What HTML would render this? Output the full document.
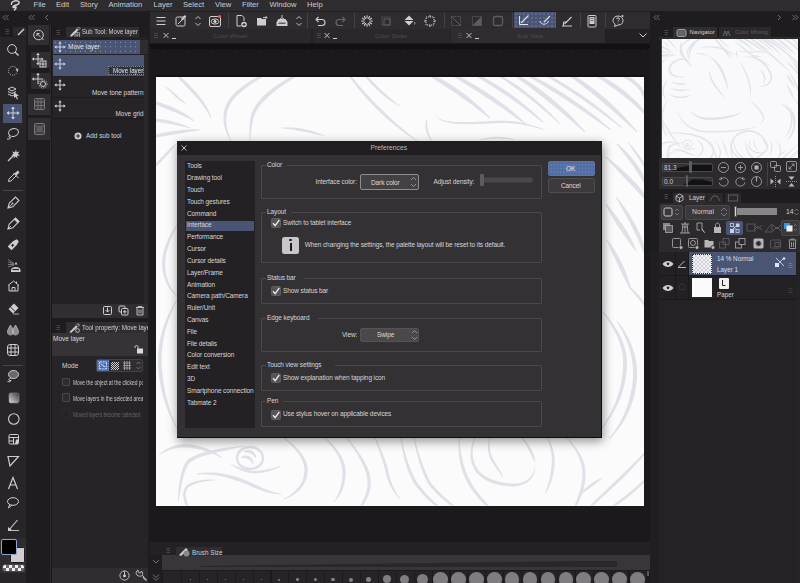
<!DOCTYPE html>
<html><head><meta charset="utf-8">
<style>
*{margin:0;padding:0;box-sizing:border-box}
html,body{width:800px;height:583px;overflow:hidden;background:#1c1a1d;font-family:"Liberation Sans",sans-serif;color:#d8d6d9}
.a{position:absolute;display:block}
.t{position:absolute;white-space:nowrap;line-height:1}
</style></head><body>
<div class="a" style="left:0px;top:0px;width:800px;height:11px;background:#2e2c2f;"></div>
<svg class="a" style="left:9px;top:0px;" width="13" height="11" viewBox="0 0 13 11" fill="none" stroke="#cfcdd0" stroke-width="1"><path d="M2.5 4.2 C2 1.5 6 0.5 8.5 1 C11 1.5 10.5 3.5 8.5 4.5 C7 5.2 4.5 5.5 4 6.8 C3.7 7.8 5.5 7.6 6.5 7 C7.5 6.4 7.2 8.5 5.5 10" stroke="#d0ced1" stroke-width="1.5" stroke-linecap="round" stroke-linejoin="round"/></svg>
<div class="t" style="left:33.5px;top:0.52px;font-size:7.6px;color:#cfcdd0;">File</div>
<div class="t" style="left:56px;top:0.52px;font-size:7.6px;color:#cfcdd0;">Edit</div>
<div class="t" style="left:80px;top:0.52px;font-size:7.6px;color:#cfcdd0;">Story</div>
<div class="t" style="left:108.5px;top:0.52px;font-size:7.6px;color:#cfcdd0;">Animation</div>
<div class="t" style="left:153.5px;top:0.52px;font-size:7.6px;color:#cfcdd0;">Layer</div>
<div class="t" style="left:183px;top:0.52px;font-size:7.6px;color:#cfcdd0;">Select</div>
<div class="t" style="left:215px;top:0.52px;font-size:7.6px;color:#cfcdd0;">View</div>
<div class="t" style="left:242px;top:0.52px;font-size:7.6px;color:#cfcdd0;">Filter</div>
<div class="t" style="left:269.5px;top:0.52px;font-size:7.6px;color:#cfcdd0;">Window</div>
<div class="t" style="left:307px;top:0.52px;font-size:7.6px;color:#cfcdd0;">Help</div>
<div class="a" style="left:0px;top:11px;width:150px;height:572px;background:#1e1c1f;"></div>
<div class="a" style="left:650px;top:11px;width:150px;height:572px;background:#1e1c1f;"></div>
<svg class="a" style="left:1px;top:14px;" width="10" height="7" viewBox="0 0 10 7" fill="none" stroke="#cfcdd0" stroke-width="1"><path d="M4.5 1 L2 3.5 L4.5 6 M7.5 1 L5 3.5 L7.5 6" stroke="#8a888b" stroke-width="0.8"/></svg>
<svg class="a" style="left:27px;top:14px;" width="10" height="7" viewBox="0 0 10 7" fill="none" stroke="#cfcdd0" stroke-width="1"><path d="M4.5 1 L2 3.5 L4.5 6 M7.5 1 L5 3.5 L7.5 6" stroke="#8a888b" stroke-width="0.8"/></svg>
<svg class="a" style="left:44px;top:14px;" width="6" height="7" viewBox="0 0 6 7" fill="none" stroke="#cfcdd0" stroke-width="1"><path d="M4 1 L1.5 3.5 L4 6" stroke="#8a888b" stroke-width="0.8"/></svg>
<div class="a" style="left:0px;top:22px;width:26px;height:561px;background:#272528;"></div>
<div class="a" style="left:0px;top:22px;width:26px;height:14px;background:#1e1c1f;"></div>
<div class="a" style="left:13px;top:27px;width:13px;height:9px;background:#2c2a2d;"></div>
<svg class="a" style="left:4px;top:27px;" width="6" height="8" viewBox="0 0 6 8" fill="none" stroke="#cfcdd0" stroke-width="1"><path d="M1.5 2.5h3.5M1.5 4.5h3.5M1.5 6.5h3.5" stroke="#5c5a5d" stroke-width="0.7"/></svg>
<svg class="a" style="left:16px;top:27px;" width="10" height="9" viewBox="0 0 10 9" fill="none" stroke="#cfcdd0" stroke-width="1"><path d="M2 8 L8 2" stroke="#d0ced1" stroke-width="1.4"/></svg>
<div class="a" style="left:1px;top:36px;width:25px;height:1px;background:#1e1c1f;"></div>
<div class="a" style="left:3px;top:104px;width:19px;height:19px;background:#4a5573;"></div>
<div class="a" style="left:3px;top:190px;width:20px;height:1px;background:#48464a;"></div>
<div class="a" style="left:3px;top:365px;width:20px;height:1px;background:#48464a;"></div>
<svg class="a" style="left:5.8px;top:43px;" width="15" height="15" viewBox="0 0 15 15" fill="none" stroke="#cfcdd0" stroke-width="1"><circle cx="6" cy="6" r="4.4"/><path d="M9.2 9.2 L12.5 12.5" stroke-width="1.4"/></svg>
<svg class="a" style="left:5.8px;top:64px;" width="15" height="15" viewBox="0 0 15 15" fill="none" stroke="#cfcdd0" stroke-width="1"><circle cx="6.8" cy="6.8" r="4.4" stroke-dasharray="1 1.2"/><path d="M9.5 5.5 L11.8 7.5 L12.5 4.5 Z" fill="#cfcdd0" stroke="none"/></svg>
<svg class="a" style="left:5.8px;top:85px;" width="15" height="15" viewBox="0 0 15 15" fill="none" stroke="#cfcdd0" stroke-width="1"><path d="M2 4 L6 2 L10 4 L6 6 Z M2 6.5 L6 8.5 L10 6.5 M2 9 L6 11 L8 10"/><path d="M8 7 L13 11 L10.5 11.3 L12 14 L11 14.5 L9.5 11.8 L8 13 Z" fill="#cfcdd0" stroke="none"/></svg>
<svg class="a" style="left:5.8px;top:106px;" width="15" height="15" viewBox="0 0 15 15" fill="none" stroke="#cfcdd0" stroke-width="1"><path d="M7 1.5 V12.5 M1.5 7 H12.5" stroke="#c8d0e8"/><path d="M7 0.5 L5 3 H9 Z M7 13.5 L5 11 H9 Z M0.5 7 L3 5 V9 Z M13.5 7 L11 5 V9 Z" fill="#c8d0e8" stroke="none"/></svg>
<svg class="a" style="left:5.8px;top:127px;" width="15" height="15" viewBox="0 0 15 15" fill="none" stroke="#cfcdd0" stroke-width="1"><ellipse cx="7.5" cy="5.5" rx="5" ry="3.8" transform="rotate(-15 7.5 5.5)"/><path d="M4 8.5 C2 9.5 3 11 4.5 10.5 C5 11.5 3 12.5 1 12"/></svg>
<svg class="a" style="left:5.8px;top:148px;" width="15" height="15" viewBox="0 0 15 15" fill="none" stroke="#cfcdd0" stroke-width="1"><path d="M2 13 L8 7" stroke-width="1.2"/><path d="M10 1.5 L10.7 4.3 L13.5 3.5 L11.7 5.8 L14 7.5 L11 7.7 L11.5 10.5 L9.6 8.5 L7.5 10.5 L8.2 7.7 L5.2 7.5 L7.6 5.8 L6.2 3.5 L9.1 4.3 Z" fill="#cfcdd0" stroke="none"/></svg>
<svg class="a" style="left:5.8px;top:169px;" width="15" height="15" viewBox="0 0 15 15" fill="none" stroke="#cfcdd0" stroke-width="1"><path d="M2.5 12.5 L3 10 L8.5 4.5 L10.5 6.5 L5 12 Z" stroke-width="1"/><path d="M7.5 4 L12.5 9 M9 4.5 L11 2.5 C12 1.5 13.5 3 12.5 4 L10.5 6 Z" fill="#cfcdd0" stroke="#cfcdd0" stroke-width="1"/></svg>
<svg class="a" style="left:5.8px;top:195px;" width="15" height="15" viewBox="0 0 15 15" fill="none" stroke="#cfcdd0" stroke-width="1"><path d="M2 13 L3.2 8.2 L9.5 2 L13 5.5 L6.8 11.8 Z" stroke-width="1.1"/><path d="M2 13 L6 9" stroke-width="0.9"/><circle cx="6.5" cy="8.5" r="0.9" fill="#cfcdd0" stroke="none"/></svg>
<svg class="a" style="left:5.8px;top:216px;" width="15" height="15" viewBox="0 0 15 15" fill="none" stroke="#cfcdd0" stroke-width="1"><path d="M2 13 L3.2 8.2 L9.5 2 L13 5.5 L6.8 11.8 Z" stroke-width="1.1"/><path d="M8 3.5 L9.5 2 L13 5.5 L11.5 7 Z" fill="#cfcdd0" stroke="none"/><path d="M2 13 L4.8 10.2" stroke-width="0.9"/></svg>
<svg class="a" style="left:5.8px;top:237px;" width="15" height="15" viewBox="0 0 15 15" fill="none" stroke="#cfcdd0" stroke-width="1"><g transform="rotate(45 7.5 7.5)"><path d="M4.8 5.5 L6 1.5 H9 L10.2 5.5 V13 H4.8 Z" fill="#cfcdd0" stroke="none"/><rect x="6" y="7" width="3" height="3.5" fill="#29272a"/></g></svg>
<svg class="a" style="left:5.8px;top:258px;" width="15" height="15" viewBox="0 0 15 15" fill="none" stroke="#cfcdd0" stroke-width="1"><path d="M2 1.5 L8 5.5 M2 4 L8 6 M2 6.5 L8 6.5 M2 9 L8 7" stroke="#8a888b" stroke-width="0.8"/><path d="M8.5 6.5 L10 4 L11.5 6.5 Z" fill="#cfcdd0" stroke="none"/><path d="M5 14 V12 C5 8 14.5 8 14.5 12 V14 Z" fill="#cfcdd0" stroke="none"/><path d="M6.5 11.5 H13" stroke="#29272a" stroke-width="1.2"/></svg>
<svg class="a" style="left:5.8px;top:279px;" width="15" height="15" viewBox="0 0 15 15" fill="none" stroke="#cfcdd0" stroke-width="1"><path d="M2 6.5 L7.5 2 L13 6.5 M3 6 V12 H12 V6 M6 12 V8.5 H9 V12 M10.5 2.5 V4.5"/></svg>
<svg class="a" style="left:5.8px;top:301px;" width="15" height="15" viewBox="0 0 15 15" fill="none" stroke="#cfcdd0" stroke-width="1"><path d="M2.5 8 L8 2.5 L12.5 7 L7 12.5 Z" fill="#cfcdd0" stroke="none"/><path d="M4.5 6 L9 10.5" stroke="#29272a" stroke-width="1"/><path d="M7 13 H13" stroke-width="0.8"/></svg>
<svg class="a" style="left:5.8px;top:322px;" width="15" height="15" viewBox="0 0 15 15" fill="none" stroke="#cfcdd0" stroke-width="1"><path d="M4.5 3 C2 7 1.5 8.5 1.5 10 C1.5 12 3 13 4.5 13 C6 13 7.5 12 7.5 10 C7.5 8.5 7 7 4.5 3 Z M9.5 3 C7 7 6.5 8.5 6.5 10 C6.5 12 8 13 9.5 13 C11 13 12.5 12 12.5 10 C12.5 8.5 12 7 9.5 3 Z" fill="#8e8c8f" stroke="#cfcdd0" stroke-width="0.6"/></svg>
<svg class="a" style="left:5.8px;top:343px;" width="15" height="15" viewBox="0 0 15 15" fill="none" stroke="#cfcdd0" stroke-width="1"><rect x="1.5" y="1.5" width="11" height="11" rx="2.5"/><path d="M1.5 5 H12.5 M1.5 9 H12.5 M5 1.5 V12.5 M9 1.5 V12.5"/></svg>
<svg class="a" style="left:5.8px;top:369px;" width="15" height="15" viewBox="0 0 15 15" fill="none" stroke="#cfcdd0" stroke-width="1"><ellipse cx="7.5" cy="5.5" rx="5" ry="4" fill="#6a686b"/><path d="M5 9 C2 10 2 12 5 11.5 C5 12.5 3 13 1.5 12.5"/></svg>
<svg class="a" style="left:5.8px;top:391px;" width="15" height="15" viewBox="0 0 15 15" fill="none" stroke="#cfcdd0" stroke-width="1"><defs><linearGradient id="gq" x1="1" y1="0" x2="0" y2="1"><stop offset="0" stop-color="#3a383b"/><stop offset="1" stop-color="#dcdadd"/></linearGradient></defs><rect x="3" y="2" width="10" height="10" rx="1.8" fill="url(#gq)" stroke="#8e8c8f" stroke-width="0.6"/></svg>
<svg class="a" style="left:5.8px;top:412px;" width="15" height="15" viewBox="0 0 15 15" fill="none" stroke="#cfcdd0" stroke-width="1"><circle cx="7.8" cy="7" r="5.3" stroke-width="1.1"/></svg>
<svg class="a" style="left:5.8px;top:433px;" width="15" height="15" viewBox="0 0 15 15" fill="none" stroke="#cfcdd0" stroke-width="1"><rect x="3" y="1.5" width="9.5" height="9.5" rx="1.2"/><path d="M3 4.5 H12.5 M3 8 H7.5 M7.5 4.5 V11"/><path d="M9 11 L10 6.5 H12 V11 Z" fill="#cfcdd0" stroke="none"/></svg>
<svg class="a" style="left:5.8px;top:454px;" width="15" height="15" viewBox="0 0 15 15" fill="none" stroke="#cfcdd0" stroke-width="1"><path d="M2 2.5 H12.5 L4 12 Z" stroke-width="1.2"/></svg>
<svg class="a" style="left:5.8px;top:476px;" width="15" height="15" viewBox="0 0 15 15" fill="none" stroke="#cfcdd0" stroke-width="1"><path d="M2.5 13 L7 1.5 L11.5 13 M4 9 H10" stroke-width="1.2"/></svg>
<svg class="a" style="left:5.8px;top:496px;" width="15" height="15" viewBox="0 0 15 15" fill="none" stroke="#cfcdd0" stroke-width="1"><ellipse cx="7" cy="5.5" rx="5.5" ry="3.8"/><path d="M3.5 8.5 L2.5 12 L6 9"/></svg>
<svg class="a" style="left:5.8px;top:518px;" width="15" height="15" viewBox="0 0 15 15" fill="none" stroke="#cfcdd0" stroke-width="1"><path d="M3 12 L11.5 2" stroke-width="1.1"/><path d="M2 12.5 H13" stroke-width="0.9"/><path d="M2 9 L6 12 L2 13 Z" fill="#cfcdd0" stroke="none"/></svg>
<div class="a" style="left:0px;top:538px;width:26px;height:35px;background:#2e2c2f;"></div>
<div class="a" style="left:9.5px;top:546.5px;width:15px;height:16px;background:#cfcdd0;border:1px solid #1c1a1d;border-radius:1.5px;box-shadow:0 0 0 0.6px #3a383b"></div>
<div class="a" style="left:1px;top:539px;width:15.5px;height:16px;background:#000;border:1px solid #8fa3d0;border-radius:2px"></div>
<div class="a" style="left:1.5px;top:564px;width:23px;height:8px;border:1px solid #444245;border-radius:3px;background-color:#f2f2f2;background-image:linear-gradient(45deg,#6a686b 25%,transparent 25%,transparent 75%,#6a686b 75%),linear-gradient(45deg,#6a686b 25%,transparent 25%,transparent 75%,#6a686b 75%);background-size:6px 6px;background-position:0 0,3px 3px"></div>
<div class="a" style="left:26px;top:22px;width:2px;height:561px;background:#1e1c1f;"></div>
<div class="a" style="left:28px;top:25px;width:21px;height:20px;background:#302e31;"></div>
<svg class="a" style="left:30px;top:27px;" width="17" height="16" viewBox="0 0 17 16" fill="none" stroke="#cfcdd0" stroke-width="1"><circle cx="8.5" cy="8" r="4.8"/><path d="M10.5 10 L7 6.5 M7 6.5 V9 M7 6.5 H9.5 M11.5 11 L13.5 13"/></svg>
<div class="a" style="left:31px;top:52px;width:19px;height:16px;background:#302e31;"></div>
<div class="a" style="left:31px;top:72.5px;width:19px;height:16px;background:#302e31;"></div>
<div class="a" style="left:28.3px;top:94px;width:21.5px;height:20.5px;background:#302e31;"></div>
<div class="a" style="left:28.3px;top:118px;width:21.5px;height:22px;background:#302e31;"></div>
<svg class="a" style="left:31px;top:52px;" width="18" height="17" viewBox="0 0 18 17" fill="none" stroke="#cfcdd0" stroke-width="1"><path d="M7 2 V12 M2 7 H12" stroke="#cfcdd0"/><path d="M7 0.8 L5.2 3 H8.8 Z M0.8 7 L3 5.2 V8.8 Z M12.5 7 L10.5 5.5 V8.5 Z M7 13.2 L5.2 11 H8.8 Z" fill="#cfcdd0" stroke="none"/><rect x="9" y="9" width="6" height="6"/><path d="M9 12 H15 M12 9 V15"/></svg>
<svg class="a" style="left:31px;top:72px;" width="18" height="17" viewBox="0 0 18 17" fill="none" stroke="#cfcdd0" stroke-width="1"><path d="M7 2 V12 M2 7 H12"/><path d="M7 0.8 L5.2 3 H8.8 Z M0.8 7 L3 5.2 V8.8 Z" fill="#cfcdd0" stroke="none"/><circle cx="12" cy="12" r="2.5"/><circle cx="12" cy="12" r="4" stroke-dasharray="1.2 1.2"/></svg>
<svg class="a" style="left:31px;top:95px;" width="18" height="18" viewBox="0 0 18 18" fill="none" stroke="#cfcdd0" stroke-width="1"><rect x="3.5" y="3.5" width="10" height="11" rx="1" fill="#3e3c3f" stroke="#7a787b"/><path d="M3.5 7 H13.5 M3.5 10.5 H13.5 M7 3.5 V14.5 M10 3.5 V14.5" stroke="#7a787b" stroke-width="0.8"/></svg>
<svg class="a" style="left:31px;top:120px;" width="18" height="19" viewBox="0 0 18 19" fill="none" stroke="#cfcdd0" stroke-width="1"><rect x="3.5" y="3.5" width="10" height="11" rx="1" fill="#3e3c3f" stroke="#7a787b"/><rect x="5.5" y="6" width="6" height="6" fill="#5e5c5f" stroke="none"/><path d="M3.5 6 H5.5 M11.5 6 H13.5 M3.5 12 H5.5 M11.5 12 H13.5" stroke="#7a787b" stroke-width="0.8"/></svg>
<div class="a" style="left:50px;top:22px;width:1px;height:561px;background:#2c2a2d;"></div>
<div class="a" style="left:51px;top:22px;width:1px;height:561px;background:#1a181b;"></div>
<div class="a" style="left:52px;top:22px;width:96px;height:15px;background:#1e1c1f;"></div>
<svg class="a" style="left:55px;top:28px;" width="7" height="8" viewBox="0 0 7 8" fill="none" stroke="#cfcdd0" stroke-width="1"><path d="M1.5 2.5h3.5M1.5 4.5h3.5M1.5 6.5h3.5" stroke="#5c5a5d" stroke-width="0.7"/></svg>
<div class="a" style="left:66px;top:27px;width:73px;height:10px;background:#2f2d30;"></div>
<svg class="a" style="left:68px;top:26px;" width="13" height="12" viewBox="0 0 13 12" fill="none" stroke="#cfcdd0" stroke-width="1"><path d="M2 11 L3 8.5 L9 2.5 L10.5 4 L4.5 10 Z" fill="#cfcdd0" stroke="none"/><path d="M9 2.5 L10.5 1 L12 2.5 L10.5 4" stroke-width="0.7"/><path d="M7 6.5 H11.5 V11.5 H7 Z M7 9 H11.5 M9.25 6.5 V11.5" stroke-width="0.6"/></svg>
<div class="t" style="left:81.5px;top:29.43px;font-size:6.6px;color:#d2d0d3;transform:scaleX(0.91);transform-origin:0 0">Sub Tool: Move layer</div>
<div class="a" style="left:52px;top:37px;width:96px;height:267px;background:#232124;"></div>
<div class="a" style="left:53px;top:40px;width:87px;height:14px;background:#4a5573;background-image:radial-gradient(circle,#8fa0c8 0.45px,transparent 0.75px);background-size:5px 4.5px"></div>
<div class="a" style="left:140px;top:40px;width:8px;height:14px;background:#2e2c2f;"></div>
<div class="a" style="left:144px;top:55px;width:4px;height:249px;background:#29272a;"></div>
<div class="t" style="left:68px;top:44.12px;font-size:6.5px;color:#e4e2e5;">Move layer</div>
<div class="a" style="left:53px;top:55px;width:91px;height:21px;background:#4a5573;"></div>
<div class="a" style="left:108px;top:66px;width:36px;height:9px;border:1px dotted #8a8478;background:#2e3340"></div>
<div class="t" style="left:112.5px;top:67.72px;font-size:6.5px;color:#e4e2e5;transform:scaleX(0.95);transform-origin:0 0">Move layer</div>
<div class="a" style="left:53px;top:77px;width:91px;height:20px;background:#262427;"></div>
<div class="a" style="left:53px;top:97px;width:91px;height:1px;background:#1c1a1d;"></div>
<div class="t" style="left:92px;top:90.41px;font-size:6.4px;color:#d8d6d9;">Move tone pattern</div>
<div class="a" style="left:53px;top:98px;width:91px;height:20px;background:#262427;"></div>
<div class="a" style="left:53px;top:118px;width:91px;height:1px;background:#1c1a1d;"></div>
<div class="t" style="left:115.5px;top:111.21px;font-size:6.4px;color:#d8d6d9;">Move grid</div>
<svg class="a" style="left:54px;top:41px;stroke:#c8d0e8" width="12" height="12" viewBox="0 0 12 12" fill="none" stroke="#cfcdd0" stroke-width="1"><path d="M6 1.5 V10.5 M1.5 6 H10.5"/><path d="M6 0.3 L4.3 2.5 H7.7 Z M6 11.7 L4.3 9.5 H7.7 Z M0.3 6 L2.5 4.3 V7.7 Z M11.7 6 L9.5 4.3 V7.7 Z" fill="#c8d0e8" stroke="none"/></svg>
<svg class="a" style="left:54px;top:58px;stroke:#c8d0e8" width="12" height="12" viewBox="0 0 12 12" fill="none" stroke="#cfcdd0" stroke-width="1"><path d="M6 1.5 V10.5 M1.5 6 H10.5"/><path d="M6 0.3 L4.3 2.5 H7.7 Z M6 11.7 L4.3 9.5 H7.7 Z M0.3 6 L2.5 4.3 V7.7 Z M11.7 6 L9.5 4.3 V7.7 Z" fill="#c8d0e8" stroke="none"/></svg>
<svg class="a" style="left:54px;top:79px;" width="12" height="12" viewBox="0 0 12 12" fill="none" stroke="#cfcdd0" stroke-width="1"><path d="M6 1.5 V10.5 M1.5 6 H10.5"/><path d="M6 0.3 L4.3 2.5 H7.7 Z M6 11.7 L4.3 9.5 H7.7 Z M0.3 6 L2.5 4.3 V7.7 Z M11.7 6 L9.5 4.3 V7.7 Z" fill="#cfcdd0" stroke="none"/></svg>
<svg class="a" style="left:54px;top:100px;" width="12" height="12" viewBox="0 0 12 12" fill="none" stroke="#cfcdd0" stroke-width="1"><path d="M6 1.5 V10.5 M1.5 6 H10.5"/><path d="M6 0.3 L4.3 2.5 H7.7 Z M6 11.7 L4.3 9.5 H7.7 Z M0.3 6 L2.5 4.3 V7.7 Z M11.7 6 L9.5 4.3 V7.7 Z" fill="#cfcdd0" stroke="none"/></svg>
<svg class="a" style="left:74px;top:132px;" width="8" height="8" viewBox="0 0 8 8" fill="none" stroke="#cfcdd0" stroke-width="1"><circle cx="4" cy="4" r="3.5" fill="#cfcdd0" stroke="none"/><path d="M4 2 V6 M2 4 H6" stroke="#262427" stroke-width="1"/></svg>
<div class="t" style="left:86px;top:132.71px;font-size:6.4px;color:#d8d6d9;">Add sub tool</div>
<div class="a" style="left:52px;top:304px;width:96px;height:14px;background:#302e31;"></div>
<svg class="a" style="left:102px;top:305px;" width="12" height="11" viewBox="0 0 12 11" fill="none" stroke="#cfcdd0" stroke-width="1"><rect x="1.5" y="1.5" width="8" height="8" rx="1"/><path d="M5.5 2.5 V7 M3.5 5 L5.5 7 L7.5 5"/></svg>
<svg class="a" style="left:118px;top:305px;" width="12" height="11" viewBox="0 0 12 11" fill="none" stroke="#cfcdd0" stroke-width="1"><rect x="1" y="1" width="6" height="6" rx="1"/><rect x="3.5" y="3.5" width="6.5" height="6.5" rx="1" fill="#302e31"/><path d="M6.75 5 V8.5 M5 6.75 H8.5"/></svg>
<svg class="a" style="left:134px;top:305px;stroke:#bdbbbe" width="12" height="11" viewBox="0 0 12 11" fill="none" stroke="#cfcdd0" stroke-width="1"><path d="M2 2.5 H10 M4 2.5 V1.5 H8 V2.5 M3 3 V10 H9 V3 M5 4.5 V8.5 M7 4.5 V8.5"/></svg>
<div class="a" style="left:148px;top:22px;width:2px;height:561px;background:#1e1c1f;"></div>
<div class="a" style="left:52px;top:318px;width:96px;height:4px;background:#1e1c1f;"></div>
<div class="a" style="left:52px;top:321px;width:96px;height:12px;background:#1e1c1f;"></div>
<svg class="a" style="left:55px;top:323px;" width="7" height="8" viewBox="0 0 7 8" fill="none" stroke="#cfcdd0" stroke-width="1"><path d="M1.5 2.5h3.5M1.5 4.5h3.5M1.5 6.5h3.5" stroke="#5c5a5d" stroke-width="0.7"/></svg>
<div class="a" style="left:66px;top:322px;width:82px;height:11px;background:#2f2d30;"></div>
<svg class="a" style="left:68px;top:322px;" width="13" height="11" viewBox="0 0 13 11" fill="none" stroke="#cfcdd0" stroke-width="1"><path d="M1.5 10 L8 3.5 L9.5 5 L3 11 Z" fill="#cfcdd0" stroke="none"/><path d="M8 3.5 L10 1.5 L11.5 3 L9.5 5" stroke-width="0.8"/><circle cx="9.5" cy="8.5" r="1.9" stroke-width="0.9"/></svg>
<div class="a" style="left:66px;top:322px;width:82px;height:11px;overflow:hidden"><div class="t" style="left:16px;top:3.3px;font-size:6.6px;color:#d2d0d3;transform:scaleX(0.95);transform-origin:0 0">Tool property: Move layer</div></div>
<div class="a" style="left:52px;top:333px;width:96px;height:235px;background:#262427;"></div>
<div class="a" style="left:52px;top:333px;width:96px;height:23px;background:#353336;"></div>
<div class="t" style="left:53px;top:336.12px;font-size:6.5px;color:#dcdadd;">Move layer</div>
<svg class="a" style="left:134px;top:344px;" width="10" height="10" viewBox="0 0 10 10" fill="none" stroke="#cfcdd0" stroke-width="1"><rect x="3" y="4.5" width="6" height="5" fill="#dcdadd" stroke="none"/><path d="M4 4.5 V3 C4 1 1 1 1 3 V4"/></svg>
<div class="t" style="left:62px;top:362.62px;font-size:6.5px;color:#d8d6d9;">Mode</div>
<div class="a" style="left:96px;top:359px;width:47px;height:13px;background:#302e31;border:1px solid #444245;border-radius:2px"></div>
<div class="a" style="left:97px;top:360px;width:12px;height:11px;background:#4a6ab0;background-image:radial-gradient(circle,#a9c0f0 0.5px,transparent 0.8px);background-size:2.5px 2.5px"></div>
<svg class="a" style="left:98px;top:361px;" width="10" height="9" viewBox="0 0 10 9" fill="none" stroke="#cfcdd0" stroke-width="1"><rect x="1.5" y="1" width="7" height="7" stroke="#dde6ff" stroke-dasharray="1 0.6"/><path d="M3 3 L7 6" stroke="#dde6ff"/></svg>
<div class="a" style="left:111px;top:361.5px;width:8px;height:8px;background-image:linear-gradient(45deg,#cfcdd0 25%,transparent 25%,transparent 75%,#cfcdd0 75%),linear-gradient(45deg,#cfcdd0 25%,transparent 25%,transparent 75%,#cfcdd0 75%);background-size:2px 2px;background-position:0 0,1px 1px"></div>
<svg class="a" style="left:122px;top:360px;" width="10" height="11" viewBox="0 0 10 11" fill="none" stroke="#cfcdd0" stroke-width="1"><path d="M1 3 H9 M1 5.5 H9 M1 8 H9 M2.5 1 V10 M5 1 V10 M7.5 1 V10" stroke="#cfcdd0" stroke-width="0.6"/></svg>
<svg class="a" style="left:135px;top:360px;" width="7" height="11" viewBox="0 0 7 11" fill="none" stroke="#cfcdd0" stroke-width="1"><path d="M1.5 4 L3.5 2 L5.5 4 M1.5 7 L3.5 9 L5.5 7" stroke="#8a888b" stroke-width="0.7"/></svg>
<div class="a" style="left:52px;top:356px;width:91px;height:212px;overflow:hidden">
<div class="a" style="left:9.5px;top:21.5px;width:8.5px;height:8.5px;background:#2e2c2f;border:1px solid #4a484b;border-radius:1px"></div>
<div class="t" style="left:20.6px;top:24.01px;font-size:6.4px;color:#cac8cb;transform:scaleX(0.765);transform-origin:0 0">Move the object at the clicked position</div>
<div class="a" style="left:9.5px;top:37.30000000000001px;width:8.5px;height:8.5px;background:#2e2c2f;border:1px solid #4a484b;border-radius:1px"></div>
<div class="t" style="left:20.6px;top:39.81px;font-size:6.4px;color:#cac8cb;transform:scaleX(0.765);transform-origin:0 0">Move layers in the selected area</div>
<div class="a" style="left:9.5px;top:53.19999999999999px;width:8.5px;height:8.5px;background:#252326;border:1px solid #2c2a2d;border-radius:1px"></div>
<div class="t" style="left:20.6px;top:55.71px;font-size:6.4px;color:#68666a;transform:scaleX(0.765);transform-origin:0 0">Moved layers become selected</div>
</div>
<div class="a" style="left:143px;top:356px;width:5px;height:212px;background:#262427;"></div>
<div class="a" style="left:52px;top:568px;width:96px;height:15px;background:#2f2d30;"></div>
<svg class="a" style="left:118px;top:569px;" width="13" height="13" viewBox="0 0 13 13" fill="none" stroke="#cfcdd0" stroke-width="1"><circle cx="6.5" cy="6.5" r="4.6" stroke="#bdbbbe"/><circle cx="6.5" cy="6.8" r="1.5" fill="#cfcdd0" stroke="none"/><path d="M6.5 2 V6" stroke="#bdbbbe"/></svg>
<svg class="a" style="left:134px;top:568px;" width="13" height="14" viewBox="0 0 13 14" fill="none" stroke="#cfcdd0" stroke-width="1"><path d="M9.5 9.5 L12 12" stroke="#bdbbbe" stroke-width="1.6" stroke-linecap="round"/><path d="M4 2 C2 3 1.5 5.5 3 7 C4.5 8.5 7 8.5 8.5 7.5 L10 9 M4 2 L4.5 4.5 L6.5 5 L7.5 3 M7.5 3 C8.5 4 9 6 8.5 7.5" stroke="#bdbbbe" stroke-width="1"/></svg>
<div class="a" style="left:150px;top:11px;width:500px;height:18px;background:#2e2c2f;"></div>
<div class="a" style="left:150px;top:11px;width:500px;height:1px;background:#201e21;"></div>
<div class="a" style="left:150px;top:28.5px;width:500px;height:0.8px;background:#232124;"></div>
<svg class="a" style="left:154.0px;top:13.5px;" width="14" height="14" viewBox="0 0 14 14" fill="none" stroke="#cfcdd0" stroke-width="1"><path d="M2.5 3.5 H11.5 M2.5 7 H11.5 M2.5 10.5 H11.5" stroke-width="1.1"/></svg>
<svg class="a" style="left:174.0px;top:13.5px;" width="14" height="14" viewBox="0 0 14 14" fill="none" stroke="#cfcdd0" stroke-width="1"><rect x="2" y="3" width="9" height="9" rx="1.5"/><path d="M4 10 L8 6" /><path d="M7 5 L10.5 1.5 C11.5 1 12.5 2 12 3 L8.5 6.5 Z" fill="#cfcdd0" stroke="none"/></svg>
<svg class="a" style="left:194.0px;top:13.5px;" width="8" height="14" viewBox="0 0 8 14" fill="none" stroke="#cfcdd0" stroke-width="1"><path d="M1.5 5 L4 2.5 L6.5 5 M1.5 9 L4 11.5 L6.5 9" stroke-width="0.9"/></svg>
<svg class="a" style="left:208.0px;top:13.5px;" width="14" height="14" viewBox="0 0 14 14" fill="none" stroke="#cfcdd0" stroke-width="1"><rect x="1.5" y="2.5" width="11" height="10" rx="1.5"/><ellipse cx="7" cy="7.5" rx="3.8" ry="2.6"/><circle cx="7" cy="7.5" r="1.2" fill="#cfcdd0"/><circle cx="11.5" cy="2.5" r="1.6" fill="#e06060" stroke="none"/></svg>
<div class="a" style="left:228px;top:13px;width:1px;height:15px;background:#444245;"></div>
<svg class="a" style="left:234.0px;top:13.5px;" width="14" height="14" viewBox="0 0 14 14" fill="none" stroke="#cfcdd0" stroke-width="1"><path d="M3 1.5 H8 L10 3.5 V7 M3 1.5 V12 H7"/><circle cx="10" cy="10.5" r="2.8" fill="#cfcdd0" stroke="none"/><path d="M10 9 V12 M8.5 10.5 H11.5" stroke="#2d2b2e"/></svg>
<svg class="a" style="left:255.0px;top:13.5px;" width="14" height="14" viewBox="0 0 14 14" fill="none" stroke="#cfcdd0" stroke-width="1"><path d="M2 4 H6 L7 5 H11 V11.5 H2 Z" fill="#cfcdd0" stroke="none"/><path d="M8 3.5 H12 M10.5 2 L12 3.5 L10.5 5" stroke-width="0.9"/></svg>
<svg class="a" style="left:275.0px;top:13.5px;" width="14" height="14" viewBox="0 0 14 14" fill="none" stroke="#cfcdd0" stroke-width="1"><path d="M1.5 8 L3.5 5 H10.5 L12.5 8 V12 H1.5 Z" fill="#cfcdd0" stroke="none"/><path d="M3.5 9.2 H10.5" stroke="#2d2b2e" stroke-width="1"/><path d="M7 1 V6 M5.2 4.2 L7 6 L8.8 4.2" stroke-width="1"/></svg>
<svg class="a" style="left:295.0px;top:13.5px;" width="8" height="14" viewBox="0 0 8 14" fill="none" stroke="#cfcdd0" stroke-width="1"><path d="M1.5 5 L4 2.5 L6.5 5 M1.5 9 L4 11.5 L6.5 9" stroke-width="0.9"/></svg>
<div class="a" style="left:307px;top:13px;width:1px;height:15px;background:#444245;"></div>
<svg class="a" style="left:313.0px;top:13.5px;" width="14" height="14" viewBox="0 0 14 14" fill="none" stroke="#cfcdd0" stroke-width="1"><path d="M4 5.5 H9 C11 5.5 12 7 12 8.5 C12 10 11 11.5 9 11.5 H5 M5.5 3 L3 5.5 L5.5 8" stroke-width="1.1"/></svg>
<svg class="a" style="left:334.0px;top:13.5px;" width="14" height="14" viewBox="0 0 14 14" fill="none" stroke="#cfcdd0" stroke-width="1"><path d="M10 5.5 H5 C3 5.5 2 7 2 8.5 C2 10 3 11.5 5 11.5 H9 M8.5 3 L11 5.5 L8.5 8" stroke="#6a686b" stroke-width="1.1"/></svg>
<div class="a" style="left:354px;top:13px;width:1px;height:15px;background:#444245;"></div>
<svg class="a" style="left:360.0px;top:13.5px;" width="14" height="14" viewBox="0 0 14 14" fill="none" stroke="#cfcdd0" stroke-width="1"><g stroke="#cfcdd0" stroke-width="1.1" stroke-linecap="round"><path d="M10.00 7.00 L12.30 7.00"/><path d="M9.60 8.50 L11.59 9.65"/><path d="M8.50 9.60 L9.65 11.59"/><path d="M7.00 10.00 L7.00 12.30"/><path d="M5.50 9.60 L4.35 11.59"/><path d="M4.40 8.50 L2.41 9.65"/><path d="M4.00 7.00 L1.70 7.00"/><path d="M4.40 5.50 L2.41 4.35"/><path d="M5.50 4.40 L4.35 2.41"/><path d="M7.00 4.00 L7.00 1.70"/><path d="M8.50 4.40 L9.65 2.41"/><path d="M9.60 5.50 L11.59 4.35"/></g></svg>
<svg class="a" style="left:379.0px;top:13.5px;" width="14" height="14" viewBox="0 0 14 14" fill="none" stroke="#cfcdd0" stroke-width="1"><rect x="3" y="3" width="8" height="8" stroke="#5e5c5f" stroke-dasharray="1 0.7"/><rect x="5" y="5" width="6" height="6" stroke="#5e5c5f"/></svg>
<svg class="a" style="left:402.0px;top:13.5px;" width="14" height="14" viewBox="0 0 14 14" fill="none" stroke="#cfcdd0" stroke-width="1"><path d="M7 1.5 L12 6.5 L7 11.5 L2 6.5 Z" fill="#cfcdd0" stroke="none"/><path d="M2 6.5 H12" stroke="#2d2b2e"/><path d="M12.5 8 C13 9 13 10 12.5 10.5" stroke-width="0.8"/></svg>
<svg class="a" style="left:423.0px;top:13.5px;" width="14" height="14" viewBox="0 0 14 14" fill="none" stroke="#cfcdd0" stroke-width="1"><rect x="3" y="3" width="8" height="8" stroke-dasharray="1.2 0.8"/><path d="M7 1 V3 M7 11 V13 M1 7 H3 M11 7 H13" /></svg>
<div class="a" style="left:444px;top:13px;width:1px;height:15px;background:#444245;"></div>
<svg class="a" style="left:449.0px;top:13.5px;" width="14" height="14" viewBox="0 0 14 14" fill="none" stroke="#cfcdd0" stroke-width="1"><rect x="2.5" y="2.5" width="9" height="9" stroke="#5e5c5f" stroke-dasharray="1 0.8"/><path d="M2.5 2.5 L11.5 11.5" stroke="#5e5c5f"/></svg>
<svg class="a" style="left:470.0px;top:13.5px;" width="14" height="14" viewBox="0 0 14 14" fill="none" stroke="#cfcdd0" stroke-width="1"><rect x="2.5" y="2.5" width="9" height="9" stroke="#5e5c5f" stroke-dasharray="1 0.8"/><path d="M11.5 2.5 V11.5 H2.5 Z" fill="#5e5c5f" stroke="none"/></svg>
<svg class="a" style="left:491.0px;top:13.5px;" width="14" height="14" viewBox="0 0 14 14" fill="none" stroke="#cfcdd0" stroke-width="1"><rect x="2.5" y="2.5" width="9" height="9" rx="1.5" stroke="#5e5c5f" stroke-width="1.3"/></svg>
<div class="a" style="left:512px;top:13px;width:1px;height:15px;background:#444245;"></div>
<div class="a" style="left:514px;top:12px;width:42px;height:17px;background:#4a5573;background-image:radial-gradient(circle,#8ea0c8 0.45px,transparent 0.8px);background-size:4px 4px"></div>
<svg class="a" style="left:517.0px;top:13.0px;" width="14" height="14" viewBox="0 0 14 14" fill="none" stroke="#cfcdd0" stroke-width="1"><path d="M2.5 3 V11.5 H11" stroke="#dde4f5"/><path d="M4 10 L11.5 2.5" stroke="#dde4f5" stroke-width="1.1"/></svg>
<svg class="a" style="left:538.0px;top:13.0px;" width="14" height="14" viewBox="0 0 14 14" fill="none" stroke="#cfcdd0" stroke-width="1"><path d="M2 8 C2.5 12 9 12.5 10.5 8" stroke="#dde4f5"/><path d="M6 9 L12 3" stroke="#dde4f5" stroke-width="1.1"/></svg>
<svg class="a" style="left:560.0px;top:13.5px;" width="14" height="14" viewBox="0 0 14 14" fill="none" stroke="#cfcdd0" stroke-width="1"><path d="M2 12 H12 M3.5 12 V8 H7" /><path d="M4.5 10 L11.5 3" stroke-width="1.1"/></svg>
<div class="a" style="left:580px;top:13px;width:1px;height:15px;background:#444245;"></div>
<svg class="a" style="left:585.0px;top:13.5px;" width="14" height="14" viewBox="0 0 14 14" fill="none" stroke="#cfcdd0" stroke-width="1"><rect x="3" y="1.5" width="8" height="11.5" rx="1"/><rect x="4.5" y="3" width="5" height="7" fill="#cfcdd0" stroke="none"/><path d="M5.5 4.5 H8.5 M5.5 6.5 H8.5" stroke="#2d2b2e" stroke-width="0.6"/></svg>
<div class="a" style="left:605px;top:13px;width:1px;height:15px;background:#444245;"></div>
<svg class="a" style="left:611.0px;top:13.5px;" width="14" height="14" viewBox="0 0 14 14" fill="none" stroke="#cfcdd0" stroke-width="1"><path d="M7 2 C10 2 12 4 12 6.5 C12 9.5 10 11 7 11 L3.5 12.5 L4.2 10 C2.7 9 2 8 2 6.5 C2 4 4 2 7 2 Z"/><path d="M5.5 5 C5.5 3.5 8.5 3.5 8.5 5 C8.5 6 7 6 7 7.5 M7 8.8 V9.3" stroke-width="1"/><circle cx="11.5" cy="2" r="1" fill="#cfcdd0" stroke="none"/></svg>
<div class="a" style="left:150px;top:29px;width:500px;height:14px;background:#232124;"></div>
<div class="a" style="left:150px;top:29px;width:161px;height:14px;background:#2a282b;"></div>
<div class="a" style="left:313px;top:29px;width:138px;height:14px;background:#2a282b;"></div>
<div class="a" style="left:451px;top:28px;width:154px;height:15px;background:#2f2d30;box-shadow:0 1px 2px rgba(0,0,0,.4)"></div>
<svg class="a" style="left:153px;top:31px;" width="6" height="9" viewBox="0 0 6 9" fill="none" stroke="#cfcdd0" stroke-width="1"><path d="M1 2.5h4M1 4.5h4M1 6.5h4" stroke="#4a484b" stroke-width="0.9"/></svg>
<svg class="a" style="left:161.5px;top:31px;" width="8" height="9" viewBox="0 0 8 9" fill="none" stroke="#cfcdd0" stroke-width="1"><path d="M1.5 2 L6.5 7 M6.5 2 L1.5 7" stroke="#d0ced1" stroke-width="0.9"/></svg>
<div class="a" style="left:172.0px;top:38px;width:4px;height:1px;background:#d0ced1;"></div>
<svg class="a" style="left:316px;top:31px;" width="6" height="9" viewBox="0 0 6 9" fill="none" stroke="#cfcdd0" stroke-width="1"><path d="M1 2.5h4M1 4.5h4M1 6.5h4" stroke="#4a484b" stroke-width="0.9"/></svg>
<svg class="a" style="left:322.5px;top:31px;" width="8" height="9" viewBox="0 0 8 9" fill="none" stroke="#cfcdd0" stroke-width="1"><path d="M1.5 2 L6.5 7 M6.5 2 L1.5 7" stroke="#d0ced1" stroke-width="0.9"/></svg>
<div class="a" style="left:333.0px;top:38px;width:4px;height:1px;background:#d0ced1;"></div>
<svg class="a" style="left:457px;top:31px;" width="6" height="9" viewBox="0 0 6 9" fill="none" stroke="#cfcdd0" stroke-width="1"><path d="M1 2.5h4M1 4.5h4M1 6.5h4" stroke="#4a484b" stroke-width="0.9"/></svg>
<svg class="a" style="left:464.5px;top:31px;" width="8" height="9" viewBox="0 0 8 9" fill="none" stroke="#cfcdd0" stroke-width="1"><path d="M1.5 2 L6.5 7 M6.5 2 L1.5 7" stroke="#d0ced1" stroke-width="0.9"/></svg>
<div class="a" style="left:475.0px;top:38px;width:4px;height:1px;background:#d0ced1;"></div>
<div class="t" style="left:213px;top:33.19px;font-size:6.2px;color:#4f4d50;">Color Wheel</div>
<div class="t" style="left:375px;top:33.19px;font-size:6.2px;color:#4f4d50;">Color Slider</div>
<div class="t" style="left:517px;top:33.19px;font-size:6.2px;color:#4f4d50;">Sub View</div>
<svg class="a" style="left:638px;top:31px;" width="10" height="8" viewBox="0 0 10 8" fill="none" stroke="#cfcdd0" stroke-width="1"><path d="M1.5 2.5 L5 6 L8.5 2.5" stroke="#cfcdd0" stroke-width="1"/></svg>
<div class="a" style="left:150px;top:43px;width:500px;height:499px;background:#1b191c;"></div>
<div class="a" style="left:150px;top:43.5px;width:500px;height:6px;background:#121013;"></div>
<div class="a" style="left:150px;top:48.5px;width:500px;height:1px;background:repeating-linear-gradient(90deg,#29272a 0 1.5px,transparent 1.5px 3px)"></div>
<div class="a" style="left:156px;top:76.5px;width:488px;height:429px;background:#fbfbfc;"></div>
<svg class="a" style="left:0;top:0" width="800" height="583" viewBox="0 0 800 583"><defs><filter id="bl" x="-5%" y="-5%" width="110%" height="110%"><feGaussianBlur stdDeviation="0.45"/></filter><clipPath id="cv"><rect x="156" y="76.5" width="488" height="429"/></clipPath></defs><g clip-path="url(#cv)"><g filter="url(#bl)"><path d="M165.0 63.6 L170.9 70.3 L177.1 76.9 L179.3 79.3 L181.6 81.7 L183.9 84.1 L186.2 86.5 L188.6 89.0 L190.9 91.4 L193.3 94.0 L195.6 96.5 L197.8 99.1 L200.0 101.7 L202.1 104.3 L204.0 107.0 L205.9 109.7 L207.6 112.5 L209.3 115.2 L210.6 118.2 L211.4 117.8 L210.3 114.8 L209.1 111.7 L207.6 108.7 L206.0 105.7 L204.2 102.8 L202.2 100.0 L200.1 97.2 L197.9 94.5 L195.7 91.8 L193.3 89.2 L190.9 86.7 L188.5 84.3 L186.1 81.9 L183.7 79.5 L181.3 77.3 L178.9 75.1 L172.3 69.0 L165.5 63.0Z" fill="#e0e0e9"/><path d="M138.9 97.3 L147.1 101.1 L155.4 104.6 L158.0 105.6 L160.6 106.6 L163.3 107.7 L165.9 108.7 L168.5 109.7 L171.1 110.8 L173.6 111.8 L176.2 112.8 L178.6 113.9 L181.0 114.9 L183.4 116.0 L185.6 117.0 L187.8 118.1 L189.9 119.1 L191.9 120.2 L193.7 121.4 L194.3 120.6 L192.6 119.2 L190.8 117.7 L188.9 116.3 L186.8 114.9 L184.7 113.5 L182.4 112.2 L180.0 110.9 L177.6 109.7 L175.1 108.5 L172.5 107.3 L169.9 106.2 L167.3 105.2 L164.6 104.2 L161.9 103.2 L159.2 102.3 L156.6 101.4 L148.0 98.8 L139.2 96.4Z" fill="#e0e0e9"/><path d="M138.1 117.7 L146.9 119.7 L155.8 121.5 L158.4 121.9 L160.9 122.4 L163.4 122.8 L165.8 123.3 L168.2 123.7 L170.5 124.1 L172.7 124.6 L174.9 125.0 L177.0 125.4 L179.1 125.9 L181.1 126.3 L183.0 126.7 L184.8 127.1 L186.6 127.5 L188.3 127.9 L189.9 128.4 L190.1 127.6 L188.6 127.0 L187.0 126.2 L185.3 125.5 L183.6 124.8 L181.7 124.1 L179.7 123.5 L177.7 122.8 L175.6 122.2 L173.4 121.7 L171.1 121.1 L168.8 120.6 L166.4 120.1 L163.9 119.6 L161.4 119.2 L158.8 118.8 L156.2 118.5 L147.3 117.5 L138.3 116.9Z" fill="#e0e0e9"/><path d="M138.4 139.7 L147.4 138.7 L156.3 137.5 L159.3 137.0 L162.3 136.5 L165.3 136.0 L168.2 135.5 L171.2 135.0 L174.1 134.5 L176.9 134.0 L179.7 133.5 L182.5 133.0 L185.2 132.5 L187.8 132.1 L190.4 131.7 L192.9 131.3 L195.4 130.9 L197.7 130.6 L200.0 130.4 L200.0 129.6 L197.7 129.5 L195.3 129.3 L192.8 129.3 L190.2 129.4 L187.6 129.5 L184.8 129.7 L182.1 130.0 L179.3 130.3 L176.4 130.7 L173.5 131.1 L170.6 131.6 L167.6 132.1 L164.7 132.6 L161.7 133.2 L158.7 133.8 L155.7 134.5 L146.9 136.6 L138.2 138.9Z" fill="#e0e0e9"/><path d="M164.8 86.2 L166.5 88.0 L168.1 89.7 L169.6 91.3 L171.0 92.7 L172.4 94.1 L173.8 95.3 L175.1 96.5 L176.3 97.6 L177.6 98.6 L178.8 99.6 L180.0 100.5 L181.1 101.4 L182.3 102.1 L183.5 102.9 L184.7 103.5 L185.9 104.2 L186.1 103.8 L185.1 102.9 L184.1 102.0 L183.1 101.1 L182.1 100.2 L181.0 99.2 L179.9 98.2 L178.8 97.2 L177.7 96.1 L176.4 95.0 L175.1 93.8 L173.8 92.6 L172.3 91.4 L170.7 90.0 L169.0 88.7 L167.2 87.3 L165.2 85.8Z" fill="#e0e0e9"/><path d="M277.4 66.7 L269.4 70.8 L261.4 74.9 L257.3 77.1 L253.4 79.2 L249.6 81.4 L246.1 83.7 L242.9 86.0 L239.8 88.4 L237.0 90.8 L234.4 93.3 L232.0 95.8 L230.0 98.4 L228.1 101.1 L226.6 103.9 L225.4 106.8 L224.4 109.8 L223.8 112.8 L223.5 115.9 L223.5 118.2 L223.5 120.4 L223.7 122.4 L224.0 124.4 L224.4 126.3 L224.9 128.1 L225.4 129.8 L226.0 131.4 L226.6 132.9 L227.2 134.4 L227.9 135.7 L228.5 136.9 L229.2 138.1 L229.7 139.2 L230.2 140.2 L230.6 141.2 L231.4 140.8 L231.0 139.9 L230.5 138.8 L230.1 137.7 L229.6 136.4 L229.2 135.1 L228.7 133.8 L228.2 132.3 L227.8 130.8 L227.4 129.3 L227.0 127.6 L226.7 125.9 L226.5 124.1 L226.3 122.2 L226.2 120.3 L226.3 118.2 L226.5 116.1 L226.9 113.3 L227.5 110.6 L228.4 108.0 L229.6 105.4 L231.0 103.0 L232.7 100.5 L234.7 98.1 L236.9 95.7 L239.3 93.4 L242.0 91.0 L244.9 88.7 L248.0 86.4 L251.4 84.1 L254.9 81.8 L258.7 79.4 L262.6 77.1 L270.2 72.3 L277.8 67.4Z" fill="#e0e0e9"/><path d="M310.3 66.5 L302.3 70.6 L294.3 74.9 L289.7 77.3 L285.2 79.9 L281.1 82.4 L277.1 85.0 L273.4 87.6 L270.0 90.3 L266.8 93.0 L263.9 95.6 L261.3 98.3 L258.9 101.1 L256.8 103.8 L255.0 106.6 L253.4 109.3 L252.2 112.1 L251.2 114.9 L250.5 117.7 L250.2 119.6 L250.0 121.4 L249.8 123.1 L249.6 124.8 L249.5 126.4 L249.4 128.0 L249.3 129.5 L249.3 130.9 L249.3 132.3 L249.3 133.7 L249.3 135.0 L249.4 136.3 L249.5 137.5 L249.5 138.7 L249.5 139.9 L249.5 141.0 L250.5 141.0 L250.5 139.9 L250.5 138.7 L250.6 137.5 L250.7 136.3 L250.8 135.0 L250.9 133.8 L251.1 132.4 L251.2 131.1 L251.4 129.7 L251.6 128.2 L251.8 126.7 L252.1 125.1 L252.4 123.5 L252.7 121.8 L253.1 120.1 L253.5 118.3 L254.2 115.9 L255.2 113.4 L256.4 110.9 L257.9 108.4 L259.7 105.9 L261.7 103.4 L264.0 100.9 L266.6 98.4 L269.3 95.8 L272.4 93.2 L275.7 90.6 L279.2 88.0 L283.0 85.3 L287.0 82.6 L291.2 79.9 L295.7 77.1 L303.2 72.2 L310.7 67.3Z" fill="#e0e0e9"/><path d="M281.0 128.3 L283.6 128.6 L286.3 128.9 L288.9 129.3 L291.6 129.6 L294.2 130.0 L296.9 130.5 L299.6 130.9 L302.4 131.5 L305.1 132.0 L307.9 132.5 L310.7 133.1 L313.5 133.7 L316.3 134.4 L319.1 135.0 L322.0 135.6 L324.9 136.3 L325.1 135.7 L322.4 134.5 L319.6 133.4 L316.8 132.4 L314.1 131.5 L311.3 130.7 L308.5 130.0 L305.7 129.4 L302.9 128.8 L300.1 128.3 L297.3 127.9 L294.5 127.7 L291.8 127.5 L289.0 127.4 L286.3 127.4 L283.7 127.5 L281.0 127.7Z" fill="#e0e0e9"/><path d="M338.7 62.0 L344.0 69.3 L349.2 76.6 L351.4 79.7 L353.8 82.8 L356.2 86.0 L358.8 89.2 L361.4 92.4 L364.2 95.7 L367.1 99.0 L370.2 102.3 L373.3 105.6 L376.6 108.9 L380.1 112.2 L383.6 115.6 L387.3 118.9 L391.2 122.2 L395.2 125.6 L399.3 128.9 L401.2 130.3 L402.9 131.6 L404.5 132.8 L406.1 133.9 L407.5 135.0 L408.8 136.0 L410.1 136.8 L411.3 137.6 L412.3 138.3 L413.3 139.0 L414.3 139.5 L415.1 140.0 L415.9 140.4 L416.6 140.8 L417.3 141.1 L417.9 141.3 L418.1 140.7 L417.6 140.4 L416.9 140.2 L416.3 139.8 L415.5 139.3 L414.8 138.8 L413.9 138.1 L413.0 137.4 L412.0 136.6 L410.9 135.7 L409.8 134.8 L408.5 133.7 L407.1 132.6 L405.7 131.4 L404.1 130.0 L402.5 128.6 L400.7 127.1 L396.7 123.7 L392.9 120.3 L389.2 116.9 L385.6 113.5 L382.1 110.1 L378.7 106.8 L375.5 103.5 L372.3 100.2 L369.3 97.0 L366.4 93.8 L363.5 90.6 L360.8 87.5 L358.2 84.4 L355.6 81.4 L353.2 78.4 L350.8 75.4 L345.1 68.4 L339.3 61.5Z" fill="#e0e0e9"/><path d="M353.8 62.8 L359.4 69.8 L365.1 76.8 L367.3 79.4 L369.5 81.9 L371.8 84.4 L374.0 86.7 L376.3 88.9 L378.5 91.0 L380.7 93.0 L382.9 94.9 L385.2 96.7 L387.3 98.4 L389.5 100.0 L391.6 101.5 L393.8 102.8 L395.8 104.1 L397.9 105.2 L399.8 106.3 L400.2 105.7 L398.3 104.5 L396.5 103.1 L394.6 101.6 L392.7 100.0 L390.7 98.4 L388.7 96.7 L386.6 94.9 L384.6 93.1 L382.4 91.1 L380.3 89.1 L378.1 87.0 L375.9 84.8 L373.7 82.5 L371.5 80.2 L369.2 77.7 L366.9 75.2 L360.7 68.7 L354.3 62.3Z" fill="#e0e0e9"/><path d="M416.1 67.5 L423.6 72.6 L431.2 77.5 L435.7 80.3 L440.1 83.0 L444.3 85.7 L448.4 88.4 L452.3 91.0 L456.1 93.6 L459.8 96.2 L463.4 98.8 L467.0 101.3 L470.4 103.8 L473.7 106.3 L477.0 108.7 L480.2 111.2 L483.4 113.6 L486.6 115.9 L489.6 118.4 L490.4 117.6 L487.6 114.8 L484.9 111.9 L482.0 109.1 L479.1 106.3 L476.0 103.5 L472.8 100.7 L469.5 98.0 L466.1 95.2 L462.5 92.5 L458.7 89.9 L454.9 87.2 L450.8 84.6 L446.6 82.0 L442.2 79.5 L437.6 77.0 L432.8 74.5 L424.8 70.5 L416.7 66.5Z" fill="#e0e0e9"/><path d="M439.0 67.6 L446.6 72.5 L454.3 77.3 L459.7 80.6 L464.9 83.8 L470.0 86.9 L475.0 90.0 L479.8 93.1 L484.5 96.2 L489.1 99.2 L493.6 102.2 L497.9 105.2 L502.2 108.1 L506.4 111.1 L510.6 114.0 L514.7 116.9 L518.7 119.7 L522.8 122.5 L526.7 125.4 L527.3 124.6 L523.7 121.4 L520.1 118.0 L516.3 114.7 L512.5 111.5 L508.5 108.3 L504.5 105.1 L500.3 101.9 L495.9 98.8 L491.5 95.7 L486.9 92.6 L482.1 89.5 L477.2 86.5 L472.1 83.5 L466.8 80.5 L461.4 77.6 L455.7 74.7 L447.7 70.7 L439.6 66.7Z" fill="#e0e0e9"/><path d="M462.2 67.4 L469.7 72.3 L477.3 77.2 L482.3 80.2 L487.1 83.2 L491.8 86.1 L496.3 89.1 L500.7 91.9 L505.0 94.8 L509.2 97.6 L513.2 100.5 L517.1 103.3 L521.0 106.0 L524.7 108.8 L528.4 111.6 L532.1 114.3 L535.7 117.0 L539.2 119.6 L542.7 122.4 L543.3 121.6 L540.1 118.6 L536.9 115.5 L533.6 112.5 L530.1 109.4 L526.6 106.4 L523.0 103.5 L519.2 100.5 L515.3 97.5 L511.3 94.6 L507.1 91.7 L502.8 88.8 L498.3 85.9 L493.7 83.1 L488.9 80.3 L483.9 77.5 L478.7 74.8 L470.7 70.7 L462.6 66.6Z" fill="#e0e0e9"/><path d="M484.6 66.6 L492.0 71.8 L499.4 76.9 L504.1 80.0 L508.6 83.1 L513.0 86.2 L517.2 89.2 L521.3 92.2 L525.3 95.2 L529.1 98.1 L532.8 101.1 L536.5 104.0 L540.0 107.0 L543.4 109.9 L546.8 112.8 L550.1 115.7 L553.4 118.5 L556.6 121.4 L559.7 124.3 L560.3 123.7 L557.3 120.6 L554.4 117.5 L551.4 114.3 L548.2 111.2 L545.0 108.1 L541.7 105.0 L538.2 102.0 L534.7 98.9 L530.9 95.9 L527.1 92.8 L523.1 89.8 L518.9 86.8 L514.6 83.8 L510.1 80.9 L505.4 78.0 L500.6 75.1 L492.8 70.5 L485.0 66.0Z" fill="#e0e0e9"/><path d="M501.8 66.4 L508.9 71.9 L516.1 77.3 L521.3 81.0 L526.2 84.6 L531.1 88.2 L535.8 91.8 L540.3 95.3 L544.8 98.8 L549.1 102.3 L553.3 105.7 L557.5 109.1 L561.5 112.5 L565.5 115.9 L569.4 119.2 L573.3 122.5 L577.1 125.8 L580.9 129.1 L584.6 132.4 L585.4 131.6 L582.0 127.9 L578.7 124.2 L575.2 120.5 L571.7 116.8 L568.0 113.1 L564.2 109.5 L560.2 105.9 L556.2 102.3 L552.0 98.7 L547.6 95.2 L543.1 91.7 L538.4 88.2 L533.6 84.8 L528.5 81.4 L523.3 78.0 L517.9 74.7 L510.2 70.1 L502.4 65.5Z" fill="#e0e0e9"/><path d="M514.1 67.6 L521.7 72.4 L529.3 77.2 L535.3 80.7 L541.1 84.3 L546.8 87.7 L552.3 91.2 L557.7 94.6 L563.0 98.0 L568.1 101.3 L573.1 104.6 L578.1 107.9 L582.9 111.2 L587.7 114.5 L592.4 117.7 L597.0 120.9 L601.6 124.1 L606.2 127.2 L610.7 130.4 L611.3 129.6 L607.1 126.1 L602.9 122.4 L598.6 118.8 L594.2 115.3 L589.6 111.8 L585.0 108.3 L580.2 104.8 L575.4 101.4 L570.3 97.9 L565.2 94.5 L559.8 91.2 L554.4 87.8 L548.7 84.5 L542.9 81.2 L536.9 78.0 L530.7 74.8 L522.6 70.8 L514.6 66.7Z" fill="#e0e0e9"/><path d="M532.3 67.3 L539.8 72.1 L547.4 77.0 L553.0 80.4 L558.4 83.7 L563.6 87.0 L568.7 90.3 L573.7 93.6 L578.5 96.8 L583.2 100.1 L587.8 103.3 L592.3 106.5 L596.7 109.6 L601.1 112.8 L605.3 115.9 L609.5 119.0 L613.6 122.1 L617.7 125.2 L621.7 128.3 L622.3 127.7 L618.5 124.3 L614.7 120.9 L610.8 117.5 L606.8 114.1 L602.7 110.7 L598.4 107.4 L594.1 104.0 L589.7 100.7 L585.1 97.4 L580.4 94.2 L575.5 90.9 L570.4 87.7 L565.2 84.5 L559.9 81.3 L554.3 78.1 L548.6 75.0 L540.6 70.8 L532.7 66.6Z" fill="#e0e0e9"/><path d="M556.9 66.2 L564.0 71.8 L571.1 77.3 L576.0 81.0 L580.8 84.6 L585.5 88.2 L590.0 91.8 L594.3 95.3 L598.6 98.8 L602.7 102.2 L606.8 105.7 L610.7 109.1 L614.6 112.5 L618.4 115.8 L622.1 119.2 L625.8 122.5 L629.4 125.8 L633.1 129.1 L636.6 132.4 L637.4 131.6 L634.2 127.9 L631.1 124.2 L627.8 120.5 L624.4 116.8 L620.9 113.2 L617.3 109.5 L613.6 105.9 L609.7 102.3 L605.7 98.8 L601.5 95.2 L597.2 91.7 L592.7 88.2 L588.0 84.8 L583.2 81.4 L578.1 78.0 L572.9 74.7 L565.3 69.9 L557.6 65.2Z" fill="#e0e0e9"/><path d="M582.2 67.3 L589.7 72.4 L597.2 77.4 L601.0 79.8 L604.6 82.1 L608.1 84.4 L611.4 86.7 L614.6 89.0 L617.7 91.2 L620.6 93.5 L623.4 95.7 L626.1 97.9 L628.7 100.1 L631.2 102.3 L633.7 104.4 L636.0 106.6 L638.4 108.8 L640.6 110.9 L642.9 113.1 L649.5 119.2 L656.1 125.3 L656.9 124.6 L651.1 117.7 L645.1 110.9 L643.1 108.6 L640.9 106.2 L638.7 103.9 L636.4 101.6 L634.0 99.2 L631.5 96.9 L628.8 94.6 L626.1 92.3 L623.2 90.0 L620.2 87.8 L617.1 85.5 L613.8 83.3 L610.3 81.1 L606.6 78.9 L602.8 76.7 L598.8 74.6 L590.8 70.5 L582.8 66.4Z" fill="#e0e0e9"/><path d="M608.0 67.8 L615.6 72.7 L623.3 77.3 L625.5 78.6 L627.5 79.8 L629.4 81.0 L631.1 82.2 L632.7 83.3 L634.1 84.5 L635.3 85.6 L636.5 86.7 L637.5 87.8 L638.5 88.9 L639.4 90.0 L640.1 91.1 L640.8 92.3 L641.5 93.4 L642.1 94.5 L642.6 95.6 L646.8 103.6 L651.2 111.5 L652.0 111.1 L648.8 102.7 L645.4 94.4 L644.9 93.2 L644.3 91.9 L643.7 90.6 L642.9 89.4 L642.1 88.1 L641.2 86.8 L640.2 85.5 L639.0 84.3 L637.7 83.0 L636.3 81.8 L634.8 80.6 L633.1 79.3 L631.2 78.1 L629.2 76.9 L627.0 75.8 L624.7 74.7 L616.6 70.7 L608.4 67.0Z" fill="#e0e0e9"/><path d="M435.8 116.2 L437.1 117.6 L438.6 118.9 L440.5 120.1 L442.7 121.1 L445.2 122.0 L448.1 122.6 L451.3 123.2 L454.8 123.6 L458.7 123.9 L463.0 124.1 L467.7 124.2 L472.7 124.2 L478.2 124.1 L484.1 123.8 L490.3 123.6 L497.1 123.2 L500.4 123.1 L503.6 123.0 L506.8 123.1 L509.9 123.2 L513.0 123.5 L516.0 123.8 L519.0 124.2 L522.0 124.7 L524.9 125.2 L527.8 125.8 L530.7 126.4 L533.5 127.1 L536.4 127.9 L539.2 128.6 L542.1 129.4 L544.9 130.3 L545.1 129.7 L542.3 128.8 L539.5 127.7 L536.7 126.8 L533.9 125.9 L531.0 125.0 L528.2 124.2 L525.2 123.5 L522.3 122.8 L519.3 122.3 L516.3 121.8 L513.2 121.3 L510.1 121.0 L506.9 120.8 L503.6 120.7 L500.3 120.7 L496.9 120.8 L490.2 121.1 L483.9 121.4 L478.1 121.7 L472.7 121.9 L467.7 122.0 L463.0 122.1 L458.8 122.0 L454.9 121.9 L451.4 121.6 L448.3 121.2 L445.5 120.7 L443.0 120.1 L440.9 119.3 L439.0 118.3 L437.5 117.2 L436.2 115.8Z" fill="#e0e0e9"/><path d="M426.7 118.9 L426.2 120.6 L425.8 122.2 L425.5 123.8 L425.4 125.4 L425.5 127.0 L425.6 128.5 L425.9 130.0 L426.2 131.4 L426.7 132.8 L427.2 134.1 L427.8 135.4 L428.5 136.7 L429.2 137.9 L430.0 139.0 L430.9 140.1 L431.8 141.1 L432.2 140.9 L431.6 139.6 L431.1 138.4 L430.5 137.2 L430.0 135.9 L429.5 134.7 L429.1 133.4 L428.7 132.1 L428.3 130.8 L428.0 129.5 L427.7 128.2 L427.5 126.8 L427.3 125.4 L427.2 123.9 L427.2 122.3 L427.2 120.7 L427.3 119.1Z" fill="#e0e0e9"/><path d="M480.1 140.2 L482.0 139.9 L484.1 139.6 L486.2 139.3 L488.4 139.1 L490.6 139.0 L492.9 138.9 L495.2 138.8 L497.5 138.8 L499.8 138.8 L502.1 138.9 L504.4 139.0 L506.6 139.1 L508.8 139.3 L510.9 139.6 L513.0 139.9 L514.9 140.2 L515.1 139.8 L513.2 139.1 L511.1 138.5 L509.0 137.9 L506.8 137.5 L504.5 137.2 L502.2 136.9 L499.9 136.8 L497.5 136.7 L495.1 136.8 L492.8 136.9 L490.5 137.2 L488.2 137.5 L486.0 137.9 L483.9 138.5 L481.8 139.1 L479.9 139.8Z" fill="#e4e3ec"/><path d="M605.6 157.4 L608.1 160.1 L610.5 162.8 L612.9 165.6 L615.4 168.3 L617.9 170.9 L620.4 173.6 L622.8 176.2 L625.3 178.8 L627.7 181.4 L630.1 183.8 L632.3 186.3 L634.6 188.6 L636.7 190.9 L638.8 193.1 L640.7 195.2 L642.6 197.2 L648.8 203.7 L655.2 210.1 L656.1 209.4 L650.8 202.0 L645.4 194.8 L643.8 192.6 L641.9 190.3 L640.0 188.0 L637.9 185.6 L635.7 183.1 L633.4 180.7 L631.0 178.2 L628.5 175.7 L625.9 173.2 L623.2 170.7 L620.5 168.2 L617.8 165.8 L615.0 163.4 L612.1 161.1 L609.2 158.9 L606.4 156.6Z" fill="#e0e0e9"/><path d="M616.6 144.4 L618.5 146.6 L620.3 148.9 L622.1 151.2 L623.9 153.5 L625.7 155.9 L627.4 158.2 L629.2 160.5 L630.8 162.8 L632.5 165.1 L634.1 167.4 L635.6 169.7 L637.1 171.9 L638.5 174.2 L639.9 176.4 L641.2 178.6 L642.4 180.8 L647.1 188.5 L652.1 196.1 L652.9 195.6 L649.4 187.3 L645.6 179.2 L644.5 176.9 L643.2 174.5 L641.9 172.1 L640.5 169.8 L639.0 167.4 L637.4 165.1 L635.7 162.8 L633.9 160.5 L632.1 158.2 L630.2 156.0 L628.2 153.8 L626.1 151.6 L624.0 149.5 L621.8 147.5 L619.6 145.6 L617.4 143.6Z" fill="#e0e0e9"/><path d="M627.8 142.2 L628.8 143.7 L629.8 145.3 L630.8 146.9 L631.8 148.5 L632.8 150.0 L633.8 151.5 L634.9 153.0 L635.8 154.5 L636.8 156.0 L637.8 157.4 L638.7 158.8 L639.6 160.2 L640.5 161.6 L641.4 163.0 L642.2 164.3 L643.0 165.6 L647.8 173.2 L652.9 180.6 L653.5 180.3 L649.4 172.3 L645.0 164.4 L644.3 163.1 L643.4 161.7 L642.6 160.3 L641.7 158.9 L640.7 157.5 L639.7 156.1 L638.7 154.7 L637.7 153.2 L636.6 151.8 L635.4 150.4 L634.3 148.9 L633.1 147.5 L631.9 146.1 L630.7 144.7 L629.4 143.3 L628.2 141.8Z" fill="#e0e0e9"/><path d="M605.5 204.3 L607.1 207.5 L608.7 210.7 L610.4 213.9 L612.2 217.0 L614.0 220.1 L615.9 223.2 L617.9 226.2 L619.8 229.1 L621.8 232.1 L623.8 234.9 L625.8 237.8 L627.8 240.6 L629.7 243.3 L631.7 246.0 L633.7 248.6 L635.5 251.3 L636.5 250.7 L635.2 247.7 L634.0 244.7 L632.5 241.6 L630.9 238.6 L629.2 235.6 L627.5 232.6 L625.6 229.6 L623.7 226.6 L621.7 223.6 L619.6 220.7 L617.5 217.8 L615.4 214.9 L613.2 212.1 L611.0 209.3 L608.7 206.5 L606.5 203.7Z" fill="#e0e0e9"/><path d="M615.6 197.3 L617.6 200.6 L619.5 204.0 L621.4 207.4 L623.3 210.7 L625.2 214.1 L627.0 217.4 L628.8 220.7 L630.5 224.1 L632.2 227.4 L633.8 230.7 L635.4 234.0 L637.0 237.3 L638.4 240.6 L639.8 243.9 L641.2 247.2 L642.5 250.5 L646.0 258.9 L649.6 267.1 L650.6 266.8 L648.1 258.1 L645.5 249.5 L644.5 246.0 L643.3 242.6 L642.0 239.1 L640.6 235.7 L639.1 232.3 L637.5 228.9 L635.8 225.5 L634.0 222.2 L632.1 218.9 L630.1 215.6 L628.0 212.3 L625.9 209.1 L623.6 206.0 L621.3 202.8 L618.8 199.8 L616.4 196.7Z" fill="#e0e0e9"/><path d="M606.5 240.3 L607.9 243.3 L609.2 246.3 L610.6 249.4 L612.0 252.4 L613.4 255.5 L614.9 258.6 L616.3 261.7 L617.8 264.8 L619.3 267.9 L620.8 271.1 L622.3 274.2 L623.9 277.4 L625.5 280.6 L627.1 283.8 L628.8 287.0 L630.5 290.2 L631.5 289.8 L630.5 286.3 L629.5 282.8 L628.4 279.4 L627.2 276.0 L626.0 272.7 L624.6 269.4 L623.2 266.1 L621.7 262.9 L620.1 259.8 L618.5 256.7 L616.9 253.7 L615.1 250.8 L613.3 247.9 L611.4 245.1 L609.4 242.4 L607.5 239.7Z" fill="#e0e0e9"/><path d="M627.7 285.2 L628.8 286.6 L629.8 288.0 L630.8 289.4 L631.8 290.7 L632.8 292.0 L633.8 293.2 L634.8 294.5 L635.8 295.7 L636.8 296.9 L637.8 298.0 L638.7 299.2 L639.6 300.3 L640.5 301.4 L641.3 302.6 L642.1 303.6 L642.9 304.8 L648.3 311.9 L654.1 318.9 L654.7 318.5 L650.0 310.8 L645.1 303.2 L644.3 302.1 L643.5 300.9 L642.6 299.8 L641.7 298.6 L640.7 297.5 L639.8 296.4 L638.7 295.2 L637.7 294.1 L636.6 292.9 L635.5 291.8 L634.3 290.6 L633.1 289.5 L631.9 288.3 L630.7 287.2 L629.4 286.0 L628.3 284.8Z" fill="#e0e0e9"/><path d="M601.6 311.3 L604.5 314.9 L607.0 318.6 L609.3 322.2 L611.5 325.7 L613.5 329.2 L615.3 332.7 L617.0 336.1 L618.4 339.5 L619.7 342.9 L620.7 346.2 L621.6 349.5 L622.3 352.8 L622.8 356.1 L623.1 359.4 L623.2 362.6 L623.1 365.9 L622.8 370.6 L622.4 375.2 L621.7 379.7 L620.9 384.0 L619.9 388.2 L618.8 392.3 L617.6 396.3 L616.2 400.2 L614.7 403.9 L613.1 407.6 L611.4 411.2 L609.6 414.7 L607.7 418.1 L605.8 421.4 L603.8 424.7 L601.6 427.7 L602.4 428.3 L604.6 425.2 L607.0 422.2 L609.3 419.1 L611.5 415.8 L613.5 412.3 L615.5 408.8 L617.3 405.1 L619.1 401.3 L620.6 397.4 L622.1 393.3 L623.3 389.1 L624.4 384.8 L625.4 380.3 L626.1 375.7 L626.6 371.0 L626.9 366.1 L627.0 362.6 L626.8 359.1 L626.4 355.6 L625.8 352.1 L625.0 348.7 L624.0 345.2 L622.8 341.7 L621.3 338.3 L619.7 334.8 L617.8 331.3 L615.7 327.9 L613.5 324.4 L611.0 321.0 L608.3 317.6 L605.4 314.2 L602.4 310.7Z" fill="#e0e0e9"/><path d="M616.6 321.3 L618.9 324.9 L620.8 328.5 L622.7 332.1 L624.4 335.7 L625.9 339.2 L627.3 342.7 L628.6 346.2 L629.7 349.6 L630.6 353.1 L631.4 356.6 L632.0 360.1 L632.5 363.6 L632.9 367.1 L633.1 370.7 L633.1 374.3 L633.0 377.9 L632.5 382.7 L631.9 387.5 L631.0 392.0 L630.0 396.5 L628.9 400.7 L627.6 404.9 L626.2 408.8 L624.6 412.7 L623.0 416.4 L621.2 420.0 L619.3 423.4 L617.3 426.7 L615.3 429.9 L613.2 433.0 L611.0 436.0 L608.6 438.7 L609.4 439.3 L611.8 436.7 L614.4 434.0 L616.8 431.1 L619.2 428.0 L621.5 424.8 L623.7 421.4 L625.7 417.8 L627.6 414.1 L629.4 410.2 L631.0 406.1 L632.5 401.8 L633.8 397.4 L634.9 392.9 L635.8 388.1 L636.5 383.2 L637.0 378.1 L637.1 374.3 L637.0 370.5 L636.8 366.8 L636.3 363.1 L635.7 359.4 L634.9 355.8 L634.0 352.2 L632.8 348.6 L631.5 345.1 L630.0 341.5 L628.4 338.0 L626.5 334.6 L624.5 331.1 L622.3 327.6 L619.8 324.2 L617.4 320.7Z" fill="#e0e0e9"/><path d="M143.6 178.1 L150.4 172.1 L156.9 165.9 L158.4 164.4 L159.9 163.0 L161.3 161.5 L162.6 160.1 L164.0 158.7 L165.3 157.3 L166.5 155.8 L167.8 154.4 L169.0 153.1 L170.2 151.7 L171.4 150.3 L172.5 148.9 L173.7 147.5 L174.9 146.1 L176.0 144.6 L177.2 143.2 L176.8 142.8 L175.4 144.0 L174.0 145.2 L172.6 146.4 L171.3 147.7 L169.9 148.9 L168.6 150.2 L167.3 151.5 L166.0 152.8 L164.7 154.1 L163.4 155.5 L162.0 156.9 L160.7 158.2 L159.3 159.7 L157.9 161.1 L156.5 162.6 L155.1 164.1 L149.0 170.7 L143.1 177.6Z" fill="#e0e0e9"/><path d="M176.7 224.8 L174.9 227.5 L173.1 230.3 L171.4 233.0 L169.9 235.8 L168.5 238.6 L167.2 241.4 L166.0 244.2 L165.0 247.1 L164.1 249.9 L163.3 252.8 L162.7 255.7 L162.3 258.6 L162.1 261.5 L162.0 264.4 L162.1 267.3 L162.5 270.2 L162.9 272.5 L163.4 274.6 L163.9 276.7 L164.6 278.7 L165.2 280.6 L166.0 282.4 L166.8 284.1 L167.6 285.8 L168.5 287.3 L169.5 288.8 L170.6 290.2 L171.7 291.6 L172.9 292.8 L174.1 294.0 L175.4 295.1 L176.7 296.3 L177.3 295.7 L176.0 294.6 L174.9 293.3 L173.9 292.0 L172.9 290.6 L172.0 289.2 L171.2 287.8 L170.4 286.3 L169.6 284.7 L169.0 283.1 L168.3 281.5 L167.8 279.7 L167.2 277.9 L166.7 276.0 L166.3 274.0 L165.9 271.9 L165.5 269.8 L165.3 267.1 L165.2 264.4 L165.3 261.7 L165.5 258.9 L165.9 256.2 L166.4 253.5 L167.0 250.7 L167.8 247.9 L168.7 245.2 L169.6 242.4 L170.7 239.6 L171.9 236.7 L173.1 233.9 L174.5 231.0 L175.8 228.1 L177.3 225.2Z" fill="#e0e0e9"/><path d="M176.6 299.8 L174.3 303.5 L172.0 307.4 L169.9 311.3 L167.9 315.4 L166.1 319.5 L164.5 323.8 L163.0 328.1 L161.7 332.5 L160.6 336.9 L159.6 341.3 L158.9 345.8 L158.3 350.3 L157.9 354.8 L157.8 359.3 L157.8 363.7 L158.1 368.1 L158.6 372.7 L159.1 377.0 L159.8 381.4 L160.5 385.6 L161.4 389.7 L162.3 393.7 L163.3 397.6 L164.5 401.4 L165.7 405.1 L167.0 408.7 L168.4 412.2 L169.9 415.6 L171.5 418.9 L173.1 422.1 L174.9 425.2 L176.6 428.2 L177.4 427.8 L175.8 424.7 L174.4 421.5 L173.1 418.2 L171.8 414.9 L170.5 411.4 L169.4 407.9 L168.3 404.3 L167.3 400.6 L166.3 396.8 L165.5 392.9 L164.7 389.0 L164.0 384.9 L163.3 380.8 L162.8 376.6 L162.3 372.3 L161.9 367.9 L161.6 363.6 L161.5 359.3 L161.7 355.0 L162.0 350.7 L162.4 346.3 L163.1 342.0 L163.9 337.6 L164.8 333.3 L165.9 329.0 L167.2 324.7 L168.5 320.5 L170.1 316.3 L171.7 312.1 L173.4 308.1 L175.3 304.1 L177.4 300.2Z" fill="#e0e0e9"/><path d="M159.2 455.3 L161.0 454.1 L162.8 453.1 L164.6 452.2 L166.4 451.3 L168.2 450.6 L170.0 449.9 L171.9 449.3 L173.7 448.8 L175.6 448.3 L177.6 448.0 L179.5 447.7 L181.5 447.5 L183.5 447.4 L185.6 447.4 L187.7 447.5 L189.8 447.6 L192.5 448.0 L195.1 448.5 L197.6 449.0 L200.0 449.5 L202.2 450.1 L204.4 450.7 L206.5 451.4 L208.5 452.0 L210.4 452.8 L212.3 453.5 L214.0 454.3 L215.7 455.0 L217.4 455.8 L218.9 456.6 L220.4 457.4 L221.8 458.3 L222.2 457.7 L220.9 456.7 L219.5 455.6 L218.1 454.6 L216.6 453.5 L214.9 452.5 L213.2 451.6 L211.4 450.6 L209.5 449.7 L207.4 448.8 L205.3 448.0 L203.1 447.2 L200.7 446.5 L198.3 445.9 L195.7 445.3 L193.0 444.8 L190.2 444.4 L187.8 444.2 L185.6 444.2 L183.4 444.3 L181.2 444.5 L179.1 444.8 L177.0 445.1 L175.0 445.6 L173.0 446.2 L171.1 446.9 L169.2 447.7 L167.3 448.6 L165.5 449.7 L163.8 450.8 L162.1 452.0 L160.4 453.4 L158.8 454.7Z" fill="#e0e0e9"/><path d="M178.4 502.1 L178.9 498.9 L179.5 495.8 L180.0 492.8 L180.6 489.8 L181.1 487.0 L181.7 484.2 L182.3 481.5 L182.9 478.9 L183.5 476.5 L184.2 474.1 L184.9 471.9 L185.7 469.8 L186.5 467.9 L187.4 466.1 L188.4 464.5 L189.3 463.2 L190.6 462.1 L192.3 461.0 L194.2 459.9 L196.4 458.8 L198.7 457.8 L201.4 456.8 L204.3 455.8 L207.5 454.9 L210.9 453.9 L214.7 452.9 L218.7 452.0 L223.1 451.0 L227.8 449.9 L232.9 448.8 L238.3 447.6 L244.1 446.4 L243.9 445.6 L238.1 446.2 L232.6 446.9 L227.4 447.6 L222.6 448.3 L218.1 449.1 L214.0 449.9 L210.1 450.7 L206.5 451.6 L203.3 452.6 L200.2 453.5 L197.4 454.6 L194.9 455.7 L192.6 456.8 L190.5 458.0 L188.6 459.3 L186.7 460.8 L185.5 462.7 L184.4 464.5 L183.5 466.5 L182.7 468.7 L181.9 470.9 L181.3 473.3 L180.7 475.7 L180.1 478.3 L179.6 481.0 L179.2 483.8 L178.9 486.6 L178.5 489.6 L178.3 492.6 L178.0 495.6 L177.9 498.8 L177.6 501.9Z" fill="#e0e0e9"/><path d="M197.0 474.4 L200.4 474.2 L203.7 474.3 L207.0 474.5 L210.3 474.7 L213.5 475.1 L216.8 475.6 L220.0 476.1 L223.2 476.8 L226.4 477.6 L229.6 478.4 L232.9 479.4 L236.1 480.4 L239.4 481.6 L242.7 482.8 L246.0 484.1 L249.3 485.5 L251.5 486.6 L253.7 487.6 L255.9 488.5 L258.1 489.3 L260.2 490.1 L262.2 490.8 L264.3 491.5 L266.3 492.0 L268.2 492.5 L270.1 493.0 L272.0 493.3 L273.9 493.7 L275.7 493.9 L277.5 494.1 L279.2 494.2 L280.9 494.4 L281.1 493.6 L279.4 493.4 L277.7 493.0 L276.0 492.5 L274.2 492.1 L272.5 491.5 L270.7 491.0 L268.8 490.4 L267.0 489.7 L265.1 489.0 L263.2 488.3 L261.2 487.4 L259.2 486.6 L257.2 485.6 L255.1 484.7 L252.9 483.6 L250.7 482.5 L247.3 481.0 L243.9 479.6 L240.6 478.3 L237.2 477.1 L233.9 476.1 L230.5 475.2 L227.2 474.4 L223.8 473.7 L220.5 473.2 L217.1 472.8 L213.8 472.5 L210.4 472.4 L207.0 472.5 L203.7 472.7 L200.3 473.1 L197.0 473.6Z" fill="#e0e0e9"/><path d="M230.8 464.3 L232.5 465.4 L234.1 466.6 L235.8 467.7 L237.5 468.7 L239.3 469.6 L241.0 470.4 L242.8 471.1 L244.5 471.8 L246.3 472.3 L248.1 472.7 L249.8 473.1 L251.5 473.3 L253.2 473.5 L254.9 473.5 L256.6 473.5 L258.1 473.3 L260.0 473.1 L261.9 472.8 L263.6 472.5 L265.4 472.1 L267.0 471.7 L268.6 471.3 L270.2 470.8 L271.7 470.3 L273.1 469.8 L274.4 469.3 L275.7 468.8 L276.9 468.3 L278.1 467.7 L279.1 467.2 L280.2 466.7 L281.1 466.3 L280.9 465.7 L279.9 466.1 L278.8 466.4 L277.7 466.7 L276.5 467.0 L275.2 467.4 L273.9 467.7 L272.5 468.1 L271.1 468.4 L269.6 468.8 L268.1 469.1 L266.5 469.4 L264.9 469.7 L263.2 470.0 L261.5 470.3 L259.7 470.5 L257.9 470.7 L256.4 470.8 L254.9 470.8 L253.4 470.8 L251.8 470.7 L250.2 470.5 L248.6 470.2 L246.9 469.9 L245.2 469.5 L243.5 469.0 L241.8 468.4 L240.0 467.8 L238.3 467.1 L236.5 466.4 L234.7 465.6 L232.9 464.7 L231.2 463.7Z" fill="#e0e0e9"/><ellipse cx="250" cy="458" rx="13" ry="11" stroke="#dfdfe9" stroke-width="2.4" fill="none"/><path d="M244.1 452.3 L245.0 452.2 L245.8 452.2 L246.5 452.3 L247.3 452.4 L248.0 452.6 L248.7 452.8 L249.4 453.0 L250.1 453.4 L250.8 453.7 L251.5 454.1 L252.2 454.6 L252.9 455.1 L253.6 455.7 L254.2 456.4 L255.0 457.2 L255.7 458.1 L256.3 457.9 L256.2 456.6 L255.9 455.5 L255.4 454.4 L254.8 453.4 L254.1 452.5 L253.2 451.8 L252.3 451.1 L251.4 450.6 L250.3 450.3 L249.3 450.1 L248.3 450.0 L247.3 450.1 L246.3 450.3 L245.4 450.6 L244.6 451.1 L243.9 451.7Z" fill="#e0e0e9"/><path d="M241.2 458.3 L242.2 458.1 L243.2 458.0 L244.1 458.0 L244.9 458.1 L245.7 458.2 L246.4 458.4 L247.1 458.6 L247.8 459.0 L248.5 459.3 L249.2 459.8 L249.8 460.3 L250.4 460.8 L251.0 461.5 L251.6 462.2 L252.1 463.1 L252.6 464.1 L253.4 463.9 L253.4 462.7 L253.3 461.5 L252.9 460.4 L252.4 459.4 L251.8 458.4 L251.0 457.6 L250.1 456.9 L249.2 456.3 L248.1 455.9 L247.0 455.6 L245.9 455.5 L244.8 455.6 L243.7 455.8 L242.7 456.3 L241.7 456.9 L240.8 457.7Z" fill="#e0e0e9"/><path d="M283.8 438.3 L286.5 440.7 L289.1 443.1 L291.4 445.5 L293.5 447.8 L295.5 450.0 L297.2 452.2 L298.8 454.4 L300.1 456.5 L301.3 458.6 L302.3 460.7 L303.1 462.7 L303.7 464.6 L304.1 466.5 L304.4 468.3 L304.5 470.1 L304.4 471.9 L304.1 474.1 L303.7 476.3 L303.2 478.4 L302.4 480.4 L301.6 482.3 L300.6 484.2 L299.4 486.0 L298.1 487.6 L296.7 489.3 L295.2 490.8 L293.6 492.3 L291.8 493.7 L290.0 495.1 L288.0 496.4 L286.0 497.6 L283.8 498.6 L284.2 499.4 L286.4 498.4 L288.7 497.5 L290.8 496.5 L292.9 495.3 L294.9 494.0 L296.7 492.5 L298.5 491.0 L300.1 489.4 L301.6 487.6 L303.0 485.7 L304.2 483.7 L305.2 481.6 L306.1 479.4 L306.8 477.1 L307.3 474.6 L307.6 472.1 L307.7 470.1 L307.6 468.0 L307.3 465.9 L306.8 463.7 L306.0 461.6 L305.1 459.4 L304.0 457.2 L302.6 455.0 L301.1 452.8 L299.3 450.6 L297.3 448.4 L295.1 446.2 L292.7 444.0 L290.1 441.9 L287.2 439.8 L284.2 437.7Z" fill="#e0e0e9"/><path d="M324.7 438.3 L327.0 440.6 L329.0 443.0 L330.8 445.4 L332.6 447.7 L334.2 449.9 L335.6 452.1 L336.9 454.3 L338.1 456.5 L339.1 458.6 L340.0 460.6 L340.7 462.6 L341.3 464.6 L341.8 466.5 L342.1 468.4 L342.3 470.2 L342.4 472.0 L342.4 474.3 L342.3 476.6 L342.1 478.8 L341.8 481.0 L341.5 483.0 L341.1 485.0 L340.6 487.0 L340.1 488.8 L339.5 490.7 L338.8 492.4 L338.1 494.1 L337.4 495.8 L336.5 497.4 L335.7 498.9 L334.8 500.4 L333.7 501.7 L334.3 502.3 L335.4 500.9 L336.6 499.6 L337.8 498.1 L338.8 496.6 L339.8 495.0 L340.8 493.3 L341.6 491.5 L342.4 489.7 L343.1 487.7 L343.7 485.7 L344.3 483.6 L344.7 481.4 L345.1 479.2 L345.4 476.9 L345.5 474.5 L345.6 472.0 L345.5 470.0 L345.3 467.9 L344.9 465.8 L344.4 463.7 L343.7 461.6 L342.9 459.4 L341.8 457.2 L340.7 455.0 L339.3 452.9 L337.8 450.7 L336.2 448.5 L334.3 446.3 L332.3 444.1 L330.1 442.0 L327.7 439.9 L325.3 437.7Z" fill="#e0e0e9"/><path d="M346.7 438.2 L348.9 441.5 L351.0 444.6 L353.0 447.7 L354.9 450.7 L356.7 453.5 L358.3 456.3 L359.8 459.0 L361.2 461.6 L362.5 464.1 L363.6 466.6 L364.6 468.9 L365.5 471.3 L366.2 473.6 L366.7 475.8 L367.1 478.0 L367.4 480.2 L367.5 481.9 L367.5 483.6 L367.5 485.3 L367.3 486.9 L367.1 488.5 L366.8 490.1 L366.4 491.6 L366.0 493.2 L365.5 494.6 L364.9 496.1 L364.3 497.5 L363.7 498.9 L363.0 500.3 L362.4 501.7 L361.7 503.1 L361.0 504.4 L356.9 512.5 L352.9 520.5 L353.6 520.9 L358.3 513.3 L363.0 505.6 L363.8 504.3 L364.6 502.9 L365.4 501.6 L366.1 500.1 L366.9 498.7 L367.6 497.2 L368.2 495.7 L368.8 494.1 L369.3 492.5 L369.8 490.8 L370.2 489.1 L370.5 487.3 L370.7 485.5 L370.8 483.7 L370.7 481.8 L370.6 479.8 L370.3 477.5 L369.9 475.1 L369.3 472.7 L368.5 470.2 L367.5 467.8 L366.4 465.3 L365.2 462.8 L363.8 460.2 L362.2 457.6 L360.5 454.9 L358.7 452.2 L356.7 449.4 L354.5 446.6 L352.3 443.7 L349.8 440.8 L347.3 437.8Z" fill="#e0e0e9"/><path d="M374.7 438.1 L375.5 440.4 L376.3 442.7 L377.0 445.0 L377.8 447.3 L378.6 449.6 L379.4 451.8 L380.2 454.0 L380.9 456.2 L381.6 458.3 L382.3 460.5 L383.0 462.5 L383.6 464.6 L384.2 466.6 L384.7 468.5 L385.1 470.4 L385.6 472.3 L386.2 474.7 L386.8 477.0 L387.6 479.2 L388.3 481.3 L389.1 483.3 L390.0 485.2 L390.9 486.9 L391.8 488.6 L392.7 490.2 L393.7 491.7 L394.7 493.2 L395.7 494.5 L396.7 495.8 L397.7 497.0 L398.8 498.1 L399.7 499.2 L400.3 498.8 L399.4 497.6 L398.5 496.3 L397.7 495.0 L396.9 493.7 L396.1 492.2 L395.3 490.8 L394.5 489.2 L393.7 487.6 L393.0 485.9 L392.2 484.2 L391.5 482.3 L390.9 480.4 L390.2 478.4 L389.6 476.2 L389.0 474.0 L388.4 471.7 L388.0 469.8 L387.6 467.8 L387.0 465.8 L386.4 463.7 L385.7 461.7 L385.0 459.6 L384.2 457.4 L383.3 455.3 L382.5 453.1 L381.5 451.0 L380.6 448.8 L379.6 446.6 L378.5 444.4 L377.5 442.2 L376.4 440.1 L375.3 437.9Z" fill="#e0e0e9"/><path d="M193.9 521.6 L191.1 513.1 L188.1 504.6 L187.4 502.9 L186.9 501.4 L186.5 499.9 L186.2 498.5 L185.9 497.2 L185.8 496.0 L185.8 494.8 L185.8 493.7 L186.0 492.7 L186.2 491.7 L186.5 490.8 L186.8 490.0 L187.2 489.1 L187.7 488.4 L188.3 487.6 L188.8 487.1 L190.2 486.3 L191.6 485.5 L193.2 484.8 L194.8 484.1 L196.4 483.5 L198.0 483.0 L199.7 482.6 L201.4 482.2 L203.2 481.8 L205.0 481.5 L206.8 481.2 L208.6 481.0 L210.4 480.8 L212.3 480.6 L214.1 480.4 L216.0 480.3 L216.0 479.7 L214.1 479.7 L212.2 479.5 L210.4 479.5 L208.5 479.5 L206.6 479.5 L204.7 479.7 L202.9 479.8 L201.1 480.1 L199.2 480.4 L197.4 480.8 L195.7 481.2 L193.9 481.8 L192.2 482.4 L190.5 483.1 L188.9 484.0 L187.2 484.9 L186.3 485.9 L185.5 486.8 L184.9 487.8 L184.4 488.8 L183.9 489.9 L183.6 491.1 L183.3 492.3 L183.2 493.5 L183.1 494.8 L183.2 496.2 L183.4 497.6 L183.7 499.1 L184.1 500.6 L184.6 502.2 L185.2 503.8 L185.9 505.4 L189.5 513.7 L193.3 521.9Z" fill="#e0e0e9"/><path d="M400.6 438.1 L401.1 441.3 L401.5 444.4 L402.0 447.5 L402.5 450.6 L403.1 453.6 L403.7 456.5 L404.4 459.4 L405.2 462.3 L406.0 465.1 L406.9 467.8 L407.8 470.4 L408.9 473.1 L409.9 475.6 L411.1 478.1 L412.3 480.5 L413.6 482.9 L415.0 484.8 L416.4 486.6 L417.8 488.4 L419.2 490.1 L420.6 491.8 L422.0 493.4 L423.4 494.9 L424.8 496.4 L426.2 497.8 L427.6 499.2 L428.9 500.5 L430.2 501.7 L431.5 502.8 L432.8 503.9 L434.1 505.0 L435.2 505.9 L442.3 511.5 L449.4 517.1 L449.9 516.4 L443.4 510.3 L436.8 504.1 L435.6 503.1 L434.5 502.0 L433.3 500.9 L432.1 499.7 L430.9 498.5 L429.6 497.2 L428.3 495.8 L427.0 494.4 L425.6 492.9 L424.3 491.3 L423.0 489.7 L421.6 488.1 L420.3 486.4 L419.0 484.7 L417.6 482.9 L416.4 481.1 L415.1 479.0 L413.9 476.7 L412.8 474.3 L411.7 471.9 L410.7 469.4 L409.7 466.8 L408.7 464.2 L407.8 461.5 L406.9 458.7 L406.1 455.9 L405.2 453.1 L404.4 450.1 L403.6 447.2 L402.8 444.1 L402.0 441.1 L401.4 437.9Z" fill="#e0e0e9"/><path d="M413.6 438.1 L414.3 441.3 L414.9 444.4 L415.5 447.5 L416.2 450.6 L416.9 453.7 L417.7 456.6 L418.5 459.6 L419.3 462.5 L420.2 465.4 L421.2 468.2 L422.3 471.1 L423.4 473.9 L424.6 476.6 L425.9 479.4 L427.2 482.1 L428.8 484.8 L430.4 486.8 L431.9 488.5 L433.4 490.2 L434.9 491.8 L436.4 493.3 L437.9 494.7 L439.4 496.1 L440.8 497.4 L442.3 498.6 L443.7 499.8 L445.0 500.9 L446.4 502.0 L447.7 503.0 L448.9 504.0 L450.1 504.9 L451.3 505.8 L458.5 511.3 L465.7 516.7 L466.1 516.2 L459.4 510.1 L452.7 504.2 L451.6 503.2 L450.4 502.2 L449.2 501.1 L447.9 500.1 L446.7 499.0 L445.4 497.8 L444.0 496.6 L442.7 495.4 L441.3 494.1 L439.9 492.7 L438.4 491.3 L437.0 489.8 L435.6 488.2 L434.1 486.6 L432.6 484.9 L431.2 483.2 L429.9 480.7 L428.5 478.0 L427.2 475.4 L426.0 472.7 L424.8 470.0 L423.7 467.3 L422.7 464.5 L421.7 461.7 L420.7 458.9 L419.8 456.0 L418.8 453.1 L417.9 450.2 L417.0 447.2 L416.1 444.1 L415.2 441.1 L414.4 437.9Z" fill="#e0e0e9"/><path d="M458.6 438.0 L458.6 441.2 L458.5 444.3 L458.5 447.4 L458.6 450.5 L458.8 453.5 L459.2 456.5 L459.6 459.5 L460.2 462.4 L460.8 465.3 L461.6 468.2 L462.5 471.0 L463.4 473.9 L464.6 476.6 L465.8 479.4 L467.1 482.1 L468.6 484.8 L469.8 486.7 L470.9 488.5 L472.1 490.1 L473.2 491.7 L474.4 493.2 L475.5 494.7 L476.6 496.0 L477.7 497.3 L478.9 498.6 L480.0 499.7 L481.0 500.9 L482.1 501.9 L483.1 503.0 L484.2 504.0 L485.2 504.9 L486.2 505.8 L492.8 512.0 L499.4 518.0 L500.0 517.5 L493.9 510.8 L487.8 504.2 L486.9 503.2 L486.0 502.2 L485.0 501.1 L484.1 500.1 L483.1 499.0 L482.1 497.8 L481.0 496.7 L480.0 495.4 L479.0 494.1 L477.9 492.8 L476.8 491.4 L475.8 489.9 L474.7 488.3 L473.6 486.7 L472.5 485.0 L471.4 483.2 L470.0 480.6 L468.7 478.0 L467.5 475.4 L466.4 472.7 L465.3 470.1 L464.4 467.3 L463.6 464.6 L462.8 461.8 L462.2 459.0 L461.6 456.1 L461.0 453.2 L460.6 450.3 L460.2 447.3 L459.8 444.3 L459.5 441.2 L459.4 438.0Z" fill="#e0e0e9"/><path d="M474.6 437.9 L473.7 440.1 L472.8 442.3 L472.1 444.6 L471.4 446.8 L471.0 449.1 L470.7 451.3 L470.5 453.6 L470.5 455.8 L470.7 458.1 L471.0 460.3 L471.5 462.5 L472.2 464.6 L473.1 466.8 L474.1 468.9 L475.4 470.9 L476.8 473.0 L478.5 474.7 L480.3 476.3 L482.2 477.8 L484.2 479.2 L486.4 480.4 L488.6 481.5 L490.9 482.5 L493.4 483.4 L495.9 484.2 L498.4 484.8 L501.1 485.3 L503.8 485.8 L506.5 486.1 L509.3 486.3 L512.2 486.4 L515.1 486.4 L517.6 486.1 L519.8 485.6 L522.0 484.9 L523.9 484.1 L525.7 483.2 L527.4 482.2 L528.8 481.0 L530.1 479.8 L531.3 478.5 L532.3 477.1 L533.2 475.7 L533.9 474.2 L534.4 472.6 L534.8 471.1 L535.1 469.6 L535.4 468.1 L534.6 467.9 L534.4 469.4 L534.0 470.9 L533.4 472.3 L532.7 473.6 L531.9 474.9 L531.0 476.2 L530.0 477.3 L528.9 478.4 L527.6 479.5 L526.2 480.4 L524.7 481.2 L523.0 482.0 L521.2 482.6 L519.3 483.1 L517.2 483.4 L514.9 483.6 L512.2 483.5 L509.5 483.3 L506.9 483.1 L504.2 482.7 L501.7 482.2 L499.2 481.7 L496.7 481.1 L494.4 480.3 L492.1 479.5 L489.9 478.6 L487.9 477.6 L485.9 476.5 L484.0 475.3 L482.3 473.9 L480.6 472.5 L479.2 471.0 L477.8 469.3 L476.6 467.4 L475.6 465.6 L474.7 463.7 L474.0 461.7 L473.4 459.7 L473.0 457.7 L472.8 455.7 L472.6 453.6 L472.6 451.5 L472.8 449.3 L473.0 447.1 L473.4 444.9 L473.9 442.7 L474.5 440.4 L475.4 438.1Z" fill="#e0e0e9"/><path d="M489.7 437.9 L489.1 439.8 L488.6 441.7 L488.2 443.5 L488.0 445.5 L487.9 447.4 L488.0 449.3 L488.2 451.1 L488.5 453.0 L489.0 454.9 L489.5 456.7 L490.2 458.4 L491.0 460.2 L491.9 461.9 L492.9 463.5 L494.0 465.1 L495.1 466.6 L495.9 467.7 L496.6 468.7 L497.3 469.7 L498.0 470.6 L498.7 471.5 L499.3 472.3 L499.9 473.1 L500.4 473.9 L500.9 474.5 L501.4 475.2 L501.8 475.8 L502.1 476.3 L502.4 476.8 L502.6 477.2 L502.7 477.7 L502.7 478.0 L503.3 478.0 L503.3 477.6 L503.2 477.1 L503.0 476.5 L502.8 476.0 L502.6 475.3 L502.3 474.6 L502.0 473.9 L501.6 473.1 L501.1 472.3 L500.6 471.5 L500.1 470.6 L499.5 469.6 L498.9 468.6 L498.3 467.6 L497.6 466.5 L496.9 465.4 L495.9 463.8 L494.9 462.3 L494.0 460.7 L493.2 459.1 L492.5 457.5 L491.8 455.9 L491.2 454.2 L490.7 452.5 L490.3 450.8 L490.0 449.0 L489.8 447.3 L489.7 445.5 L489.7 443.7 L489.7 441.8 L489.9 440.0 L490.3 438.1Z" fill="#e0e0e9"/><path d="M521.7 438.2 L522.7 439.7 L523.5 441.1 L524.4 442.5 L525.2 443.9 L526.1 445.3 L526.9 446.7 L527.7 448.1 L528.4 449.5 L529.2 451.0 L530.0 452.4 L530.7 453.9 L531.5 455.5 L532.2 457.0 L533.0 458.7 L533.9 460.3 L534.7 462.1 L535.3 461.9 L535.0 460.0 L534.6 458.1 L534.2 456.3 L533.6 454.6 L533.0 452.9 L532.3 451.3 L531.6 449.7 L530.8 448.2 L530.0 446.8 L529.0 445.4 L528.1 444.0 L527.0 442.7 L525.9 441.4 L524.8 440.1 L523.5 439.0 L522.3 437.8Z" fill="#e0e0e9"/><path d="M547.7 438.1 L548.3 440.0 L548.8 441.9 L549.3 443.7 L549.8 445.5 L550.2 447.2 L550.5 448.9 L550.9 450.6 L551.2 452.2 L551.4 453.9 L551.6 455.5 L551.7 457.2 L551.8 458.9 L551.8 460.6 L551.8 462.3 L551.7 464.1 L551.5 465.9 L551.3 468.0 L551.1 470.1 L550.8 472.1 L550.5 474.1 L550.2 475.9 L549.8 477.7 L549.4 479.5 L549.0 481.2 L548.5 482.8 L548.1 484.4 L547.5 486.0 L547.0 487.6 L546.5 489.2 L545.9 490.7 L545.4 492.3 L544.7 493.8 L545.3 494.2 L546.1 492.7 L547.0 491.2 L547.8 489.8 L548.6 488.3 L549.3 486.7 L550.0 485.1 L550.7 483.5 L551.3 481.8 L551.8 480.1 L552.4 478.3 L552.8 476.5 L553.3 474.6 L553.7 472.6 L554.0 470.5 L554.3 468.4 L554.5 466.1 L554.6 464.2 L554.7 462.4 L554.7 460.5 L554.6 458.7 L554.5 457.0 L554.2 455.2 L553.9 453.5 L553.6 451.8 L553.2 450.1 L552.7 448.3 L552.1 446.6 L551.5 444.9 L550.8 443.2 L550.0 441.4 L549.1 439.7 L548.3 437.9Z" fill="#e0e0e9"/><path d="M566.7 438.3 L568.7 440.6 L570.4 442.9 L572.0 445.3 L573.5 447.6 L574.9 449.8 L576.2 452.1 L577.4 454.3 L578.4 456.6 L579.4 458.8 L580.2 461.0 L580.9 463.2 L581.4 465.4 L581.9 467.5 L582.2 469.7 L582.3 471.8 L582.4 474.0 L582.3 476.2 L582.2 478.3 L582.0 480.4 L581.7 482.4 L581.4 484.4 L581.0 486.4 L580.5 488.3 L580.0 490.2 L579.5 492.1 L578.9 493.9 L578.3 495.7 L577.6 497.5 L577.0 499.3 L576.3 501.1 L575.6 502.8 L574.9 504.5 L571.6 512.9 L568.4 521.3 L569.2 521.7 L573.2 513.6 L577.1 505.5 L577.9 503.8 L578.7 502.1 L579.5 500.3 L580.2 498.6 L581.0 496.7 L581.7 494.9 L582.4 493.0 L583.0 491.1 L583.6 489.1 L584.1 487.1 L584.5 485.0 L584.9 482.9 L585.2 480.7 L585.4 478.5 L585.6 476.3 L585.6 474.0 L585.5 471.7 L585.3 469.3 L584.9 467.0 L584.4 464.6 L583.7 462.3 L582.9 460.0 L581.9 457.7 L580.8 455.4 L579.6 453.2 L578.2 450.9 L576.7 448.7 L575.1 446.4 L573.3 444.2 L571.4 442.1 L569.4 439.9 L567.3 437.7Z" fill="#e0e0e9"/><path d="M580.2 494.3 L581.8 493.3 L583.5 492.4 L585.0 491.4 L586.5 490.4 L588.0 489.4 L589.4 488.4 L590.8 487.4 L592.2 486.3 L593.5 485.3 L594.8 484.3 L596.1 483.2 L597.3 482.2 L598.6 481.2 L599.8 480.2 L601.0 479.2 L602.2 478.3 L601.8 477.7 L600.4 478.3 L599.0 479.0 L597.5 479.7 L596.1 480.5 L594.7 481.3 L593.3 482.2 L591.9 483.2 L590.6 484.2 L589.2 485.2 L587.8 486.3 L586.5 487.4 L585.1 488.6 L583.8 489.8 L582.4 491.1 L581.1 492.4 L579.8 493.7Z" fill="#e0e0e9"/><path d="M579.1 517.5 L585.9 511.7 L592.7 505.7 L595.8 503.0 L598.9 500.3 L602.0 497.5 L605.1 494.7 L608.3 491.8 L611.4 488.9 L614.6 486.0 L617.8 482.9 L621.0 479.9 L624.2 476.7 L627.4 473.5 L630.7 470.1 L633.9 466.7 L637.2 463.1 L640.5 459.5 L643.7 455.7 L649.6 448.9 L655.5 442.0 L654.9 441.5 L648.6 447.9 L642.3 454.3 L638.8 457.9 L635.4 461.4 L632.0 464.8 L628.7 468.2 L625.4 471.4 L622.1 474.6 L618.9 477.7 L615.7 480.8 L612.6 483.8 L609.4 486.8 L606.3 489.8 L603.3 492.7 L600.2 495.6 L597.2 498.5 L594.2 501.4 L591.3 504.3 L584.9 510.6 L578.6 517.0Z" fill="#e0e0e9"/><path d="M600.5 515.7 L608.1 510.9 L615.6 505.9 L617.5 504.6 L619.5 503.3 L621.4 502.0 L623.3 500.6 L625.1 499.2 L627.0 497.8 L628.9 496.3 L630.7 494.8 L632.6 493.3 L634.4 491.7 L636.2 490.1 L637.9 488.5 L639.7 486.9 L641.4 485.2 L643.1 483.5 L644.8 481.8 L651.0 475.3 L657.1 468.7 L656.7 468.2 L649.9 474.2 L643.2 480.2 L641.5 481.8 L639.7 483.4 L638.0 485.0 L636.2 486.6 L634.4 488.2 L632.6 489.7 L630.8 491.2 L629.0 492.7 L627.2 494.2 L625.4 495.7 L623.5 497.1 L621.7 498.5 L619.9 499.9 L618.0 501.3 L616.2 502.7 L614.4 504.1 L607.2 509.6 L600.1 515.2Z" fill="#e0e0e9"/></g></g></svg>
<div class="a" style="left:155px;top:75px;width:490px;height:1.5px;background:#141215;"></div>
<svg class="a" style="left:652px;top:14px;" width="10" height="7" viewBox="0 0 10 7" fill="none" stroke="#cfcdd0" stroke-width="1"><path d="M4.5 1 L2 3.5 L4.5 6 M7.5 1 L5 3.5 L7.5 6" stroke="#8a888b" stroke-width="0.8"/></svg>
<svg class="a" style="left:776px;top:14px;" width="6" height="7" viewBox="0 0 6 7" fill="none" stroke="#cfcdd0" stroke-width="1"><path d="M2 1 L4.5 3.5 L2 6" stroke="#8a888b" stroke-width="0.8"/></svg>
<svg class="a" style="left:790px;top:14px;" width="10" height="7" viewBox="0 0 10 7" fill="none" stroke="#cfcdd0" stroke-width="1"><path d="M2.5 1 L5 3.5 L2.5 6 M5.5 1 L8 3.5 L5.5 6" stroke="#8a888b" stroke-width="0.8"/></svg>
<div class="a" style="left:650px;top:22px;width:150px;height:561px;background:#1e1c1f;"></div>
<div class="a" style="left:650px;top:252px;width:9px;height:331px;background:#201e21;"></div>
<svg class="a" style="left:663px;top:28px;" width="7" height="8" viewBox="0 0 7 8" fill="none" stroke="#cfcdd0" stroke-width="1"><path d="M1.5 2.5h3.5M1.5 4.5h3.5M1.5 6.5h3.5" stroke="#5c5a5d" stroke-width="0.7"/></svg>
<div class="a" style="left:673px;top:27px;width:44px;height:10px;background:#2f2d30;"></div>
<svg class="a" style="left:676px;top:28px;" width="11" height="10" viewBox="0 0 11 10" fill="none" stroke="#cfcdd0" stroke-width="1"><rect x="1" y="1.5" width="9" height="7" rx="1.8" fill="#5a585b" stroke="#bdbbbe" stroke-width="0.8"/><path d="M3 4 H8 M3 6 H8" stroke="#8a888b" stroke-width="0.6"/></svg>
<div class="t" style="left:689.5px;top:29.96px;font-size:5.9px;color:#d2d0d3;">Navigator</div>
<div class="a" style="left:718.5px;top:27px;width:52px;height:10px;background:#2a282b;"></div>
<svg class="a" style="left:722px;top:28px;" width="10" height="9" viewBox="0 0 10 9" fill="none" stroke="#cfcdd0" stroke-width="1"><path d="M1 8 L3 3 L5 8 M4 8 L6 3 L8 8" stroke="#6e6c6f" stroke-width="0.9"/></svg>
<div class="t" style="left:735px;top:29.96px;font-size:5.9px;color:#5e5c5f;">Color Mixing</div>
<div class="a" style="left:659px;top:37px;width:141px;height:2px;background:#2c2a2d;"></div>
<div class="a" style="left:661px;top:39px;width:137px;height:119px;background:#f9f9fb;"></div>
<div class="a" style="left:661px;top:39px;width:1px;height:119px;background:#6a3a3a;"></div>
<svg class="a" style="left:0;top:0" width="800" height="583" viewBox="0 0 800 583"><defs><clipPath id="nv"><rect x="662" y="39" width="136" height="119"/></clipPath></defs><g clip-path="url(#nv)"><path d="M680.7 42.0 L680.3 43.5 L680.0 45.1 L679.9 46.7 L679.9 48.4 L680.2 50.1 L680.6 51.8 L681.1 53.6 L681.8 55.3 L682.6 56.9 L683.6 58.6 L684.7 60.2 L685.9 61.7 L687.2 63.1 L688.7 64.5 L690.2 65.7 L691.8 66.9 L692.2 66.5 L690.8 65.1 L689.6 63.6 L688.4 62.1 L687.3 60.6 L686.3 59.1 L685.3 57.5 L684.5 56.0 L683.7 54.4 L683.0 52.8 L682.4 51.3 L681.9 49.7 L681.6 48.2 L681.3 46.6 L681.1 45.1 L681.1 43.6 L681.3 42.0Z" fill="#e3e3ec"/><path d="M698.9 39.8 L697.5 40.5 L696.2 41.3 L694.9 42.2 L693.8 43.2 L692.7 44.3 L691.8 45.5 L690.9 46.8 L690.2 48.1 L689.6 49.5 L689.1 50.9 L688.7 52.4 L688.4 53.9 L688.3 55.5 L688.3 57.0 L688.5 58.5 L688.8 60.0 L689.2 60.0 L689.2 58.5 L689.4 57.0 L689.6 55.6 L689.9 54.2 L690.3 52.8 L690.7 51.5 L691.2 50.2 L691.8 48.9 L692.5 47.7 L693.2 46.5 L694.0 45.3 L694.9 44.2 L695.8 43.1 L696.9 42.1 L697.9 41.1 L699.1 40.2Z" fill="#e3e3ec"/><path d="M691.2 62.3 L689.8 61.2 L688.4 60.2 L686.8 59.4 L685.2 58.9 L683.5 58.6 L681.7 58.5 L680.0 58.6 L678.3 59.0 L676.7 59.5 L675.2 60.2 L673.7 61.0 L672.3 62.0 L671.1 63.2 L670.1 64.5 L669.3 66.0 L668.7 67.5 L668.5 68.9 L668.5 70.2 L668.8 71.4 L669.3 72.5 L669.9 73.6 L670.8 74.6 L671.8 75.4 L673.0 76.1 L674.3 76.7 L675.7 77.1 L677.2 77.4 L678.7 77.6 L680.4 77.6 L682.1 77.4 L683.8 77.0 L685.6 76.5 L685.4 76.1 L683.7 76.4 L682.0 76.5 L680.4 76.5 L678.8 76.4 L677.4 76.1 L676.1 75.7 L674.9 75.2 L673.8 74.7 L672.8 74.0 L672.0 73.3 L671.4 72.5 L670.9 71.7 L670.6 70.8 L670.4 69.9 L670.4 69.0 L670.5 68.1 L671.0 66.8 L671.7 65.6 L672.6 64.5 L673.6 63.5 L674.7 62.6 L676.0 61.8 L677.4 61.1 L678.8 60.6 L680.3 60.2 L681.8 60.0 L683.4 60.0 L684.9 60.1 L686.5 60.4 L688.0 60.9 L689.5 61.6 L690.8 62.7Z" fill="#e3e3ec"/><path d="M671.9 82.2 L672.8 82.7 L673.7 83.2 L674.6 83.6 L675.6 84.0 L676.5 84.3 L677.5 84.5 L678.4 84.7 L679.4 84.8 L680.4 84.9 L681.4 84.9 L682.4 84.8 L683.3 84.7 L684.3 84.4 L685.3 84.1 L686.2 83.7 L687.1 83.2 L686.9 82.8 L686.0 83.0 L685.0 83.1 L684.1 83.2 L683.2 83.3 L682.3 83.3 L681.4 83.3 L680.5 83.2 L679.6 83.2 L678.7 83.1 L677.8 82.9 L676.9 82.8 L675.9 82.6 L675.0 82.4 L674.0 82.2 L673.1 82.0 L672.1 81.8Z" fill="#e3e3ec"/><path d="M670.9 88.2 L672.0 88.9 L673.1 89.5 L674.3 90.0 L675.5 90.4 L676.7 90.7 L677.9 91.0 L679.1 91.1 L680.3 91.2 L681.5 91.2 L682.7 91.1 L683.9 91.0 L685.0 90.8 L686.1 90.5 L687.2 90.1 L688.1 89.7 L689.1 89.2 L688.9 88.8 L687.9 89.0 L686.9 89.2 L685.9 89.3 L684.8 89.4 L683.7 89.5 L682.6 89.6 L681.5 89.6 L680.4 89.5 L679.3 89.5 L678.1 89.3 L677.0 89.2 L675.8 89.0 L674.6 88.8 L673.5 88.5 L672.3 88.2 L671.1 87.8Z" fill="#e3e3ec"/><path d="M669.9 95.2 L671.2 95.9 L672.5 96.5 L673.9 97.0 L675.2 97.4 L676.6 97.7 L678.1 97.9 L679.5 98.1 L680.9 98.1 L682.3 98.0 L683.6 97.9 L685.0 97.7 L686.3 97.4 L687.6 96.9 L688.8 96.4 L690.0 95.8 L691.1 95.2 L690.9 94.8 L689.7 95.2 L688.5 95.5 L687.3 95.8 L686.0 96.0 L684.8 96.2 L683.5 96.3 L682.2 96.4 L680.9 96.4 L679.6 96.4 L678.2 96.3 L676.9 96.2 L675.5 96.0 L674.2 95.8 L672.8 95.5 L671.4 95.2 L670.1 94.8Z" fill="#e3e3ec"/><path d="M645.9 38.9 L653.7 43.5 L661.7 47.7 L662.4 48.0 L663.1 48.4 L663.8 48.7 L664.5 49.1 L665.2 49.4 L665.8 49.8 L666.5 50.1 L667.1 50.5 L667.7 50.8 L668.3 51.2 L668.9 51.5 L669.5 51.8 L670.1 52.2 L670.7 52.5 L671.3 52.8 L671.9 53.2 L672.1 52.8 L671.5 52.5 L671.0 52.0 L670.5 51.6 L669.9 51.2 L669.4 50.8 L668.8 50.3 L668.3 49.9 L667.7 49.5 L667.1 49.1 L666.4 48.7 L665.8 48.3 L665.2 47.9 L664.5 47.5 L663.8 47.1 L663.1 46.7 L662.3 46.3 L654.3 42.3 L646.1 38.6Z" fill="#e3e3ec"/><path d="M644.0 56.2 L653.0 56.7 L662.0 56.8 L662.8 56.8 L663.5 56.8 L664.4 56.7 L665.2 56.7 L666.0 56.7 L666.9 56.6 L667.8 56.6 L668.7 56.5 L669.6 56.4 L670.5 56.3 L671.4 56.2 L672.3 56.0 L673.2 55.8 L674.2 55.6 L675.1 55.4 L676.0 55.2 L676.0 54.8 L675.0 55.0 L674.1 55.0 L673.1 55.1 L672.2 55.1 L671.3 55.2 L670.4 55.2 L669.5 55.2 L668.6 55.3 L667.7 55.3 L666.8 55.3 L666.0 55.3 L665.2 55.3 L664.3 55.3 L663.5 55.2 L662.8 55.2 L662.0 55.2 L653.0 55.3 L644.0 55.8Z" fill="#e3e3ec"/><path d="M709.8 57.2 L711.2 58.3 L712.5 59.6 L713.8 60.9 L715.0 62.3 L716.2 63.8 L717.3 65.4 L718.4 67.2 L719.5 69.1 L720.6 71.1 L721.6 73.2 L722.6 75.5 L723.6 77.9 L724.6 80.5 L725.6 83.2 L726.7 86.0 L727.7 89.1 L728.3 88.9 L727.8 85.8 L727.2 82.7 L726.4 79.9 L725.6 77.2 L724.7 74.6 L723.7 72.2 L722.6 70.0 L721.5 67.9 L720.3 66.0 L719.0 64.2 L717.7 62.6 L716.3 61.1 L714.8 59.8 L713.3 58.7 L711.7 57.7 L710.2 56.8Z" fill="#e3e3ec"/><path d="M708.8 70.0 L708.9 71.5 L709.0 73.1 L709.3 74.6 L709.6 76.1 L710.1 77.7 L710.6 79.2 L711.3 80.8 L712.1 82.5 L713.1 84.2 L714.2 85.9 L715.4 87.8 L716.9 89.6 L718.6 91.6 L720.4 93.6 L722.5 95.6 L724.8 97.8 L725.2 97.4 L723.2 95.0 L721.4 92.7 L719.8 90.6 L718.3 88.6 L716.9 86.7 L715.7 84.9 L714.6 83.3 L713.6 81.7 L712.8 80.1 L712.1 78.6 L711.4 77.2 L710.9 75.7 L710.4 74.3 L709.9 72.9 L709.5 71.4 L709.2 70.0Z" fill="#e3e3ec"/><path d="M716.8 40.1 L717.5 41.3 L718.2 42.5 L718.9 43.7 L719.7 44.9 L720.5 46.1 L721.3 47.2 L722.1 48.4 L723.0 49.6 L723.9 50.8 L724.8 52.0 L725.8 53.1 L726.7 54.3 L727.7 55.5 L728.7 56.7 L729.8 57.9 L730.8 59.1 L731.2 58.9 L730.3 57.5 L729.5 56.1 L728.7 54.8 L727.8 53.5 L726.9 52.3 L726.0 51.0 L725.1 49.8 L724.2 48.7 L723.4 47.5 L722.5 46.4 L721.6 45.2 L720.7 44.1 L719.8 43.1 L718.9 42.0 L718.0 41.0 L717.2 39.9Z" fill="#e3e3ec"/><path d="M734.9 40.1 L736.7 42.4 L738.6 44.7 L740.7 46.8 L742.9 48.8 L745.1 50.7 L747.4 52.5 L749.7 54.3 L752.1 55.9 L754.4 57.4 L756.8 58.9 L759.1 60.3 L761.4 61.6 L763.6 62.9 L765.8 64.0 L767.9 65.1 L769.9 66.2 L770.1 65.8 L768.2 64.6 L766.2 63.3 L764.2 61.9 L762.0 60.6 L759.8 59.2 L757.6 57.7 L755.3 56.2 L752.9 54.6 L750.6 53.0 L748.3 51.3 L746.0 49.6 L743.7 47.8 L741.5 45.9 L739.3 44.0 L737.2 42.0 L735.1 39.9Z" fill="#e3e3ec"/><path d="M751.9 40.2 L754.2 42.1 L756.6 44.1 L759.0 46.1 L761.3 48.0 L763.7 50.0 L766.1 51.9 L768.5 53.9 L770.9 55.9 L773.3 57.8 L775.6 59.8 L778.0 61.8 L780.4 63.8 L782.8 65.9 L785.1 67.9 L787.5 70.0 L789.9 72.1 L790.1 71.9 L788.0 69.5 L785.8 67.3 L783.5 65.0 L781.3 62.9 L779.0 60.7 L776.6 58.7 L774.3 56.6 L771.9 54.6 L769.5 52.7 L767.0 50.8 L764.6 48.9 L762.1 47.0 L759.7 45.2 L757.2 43.4 L754.6 41.6 L752.1 39.8Z" fill="#e3e3ec"/><path d="M769.9 40.1 L771.7 41.7 L773.5 43.3 L775.3 44.8 L777.1 46.4 L778.9 47.9 L780.7 49.4 L782.5 50.8 L784.2 52.3 L785.9 53.7 L787.6 55.1 L789.2 56.4 L790.8 57.7 L792.3 59.0 L793.8 60.2 L795.2 61.4 L796.6 62.5 L803.5 68.2 L810.6 73.8 L810.8 73.5 L804.2 67.4 L797.4 61.5 L796.1 60.3 L794.7 59.1 L793.2 57.9 L791.7 56.6 L790.1 55.3 L788.5 54.0 L786.8 52.6 L785.0 51.2 L783.3 49.8 L781.5 48.4 L779.6 47.0 L777.8 45.6 L775.9 44.1 L774.0 42.7 L772.0 41.3 L770.1 39.9Z" fill="#e3e3ec"/><path d="M745.0 57.2 L746.9 57.2 L748.7 57.3 L750.5 57.6 L752.3 58.1 L754.0 58.6 L755.7 59.3 L757.4 60.1 L759.0 61.0 L760.5 62.1 L762.0 63.3 L763.4 64.5 L764.7 65.9 L766.0 67.4 L767.2 69.0 L768.2 70.6 L769.2 72.4 L769.8 73.8 L770.2 75.2 L770.4 76.5 L770.4 77.8 L770.2 79.0 L769.9 80.2 L769.4 81.3 L768.7 82.3 L767.9 83.2 L766.9 84.0 L765.8 84.7 L764.5 85.3 L763.1 85.7 L761.5 85.9 L759.8 86.0 L758.0 85.8 L758.0 86.2 L759.8 86.5 L761.6 86.7 L763.2 86.6 L764.8 86.3 L766.3 85.8 L767.6 85.1 L768.8 84.2 L769.8 83.2 L770.7 82.0 L771.3 80.8 L771.8 79.4 L772.0 77.9 L772.1 76.4 L771.9 74.8 L771.5 73.2 L770.8 71.6 L769.8 69.7 L768.6 67.9 L767.4 66.3 L766.0 64.7 L764.6 63.3 L763.1 61.9 L761.5 60.8 L759.8 59.7 L758.0 58.8 L756.2 58.0 L754.4 57.4 L752.6 57.0 L750.7 56.7 L748.8 56.6 L746.9 56.6 L745.0 56.8Z" fill="#e3e3ec"/><path d="M759.9 70.1 L760.7 71.0 L761.3 71.9 L761.9 72.8 L762.4 73.7 L762.9 74.5 L763.2 75.4 L763.5 76.3 L763.7 77.2 L763.9 78.0 L764.0 78.9 L764.0 79.7 L763.9 80.6 L763.7 81.4 L763.5 82.2 L763.3 83.1 L762.8 83.9 L763.2 84.1 L763.8 83.4 L764.3 82.6 L764.8 81.7 L765.1 80.8 L765.3 79.9 L765.4 78.9 L765.4 77.9 L765.3 76.8 L765.0 75.8 L764.6 74.8 L764.2 73.9 L763.6 72.9 L762.9 72.1 L762.1 71.3 L761.1 70.5 L760.1 69.9Z" fill="#e3e3ec"/><path d="M739.8 62.1 L741.2 64.6 L742.4 67.1 L743.5 69.6 L744.6 72.0 L745.6 74.4 L746.5 76.7 L747.3 79.1 L748.0 81.3 L748.6 83.6 L749.1 85.8 L749.5 87.9 L749.8 90.0 L750.0 92.1 L750.1 94.1 L750.0 96.1 L749.8 98.0 L750.2 98.0 L750.6 96.1 L750.9 94.1 L751.0 92.1 L751.0 89.9 L750.8 87.7 L750.5 85.5 L750.1 83.2 L749.5 80.9 L748.8 78.6 L747.9 76.2 L746.9 73.8 L745.8 71.4 L744.6 69.0 L743.2 66.6 L741.8 64.3 L740.2 61.9Z" fill="#e3e3ec"/><path d="M690.8 112.0 L691.7 112.8 L692.6 113.7 L693.4 114.4 L694.3 115.2 L695.2 115.9 L696.1 116.5 L697.0 117.1 L698.0 117.6 L699.0 118.1 L700.1 118.6 L701.3 119.0 L702.5 119.3 L703.7 119.5 L705.1 119.7 L706.5 119.9 L708.0 119.9 L710.2 120.0 L712.5 120.0 L714.8 119.9 L717.0 119.8 L719.3 119.6 L721.5 119.3 L723.7 119.0 L725.8 118.6 L727.9 118.1 L730.0 117.6 L732.0 117.0 L734.0 116.3 L735.9 115.6 L737.7 114.7 L739.4 113.8 L741.1 113.0 L740.9 112.4 L739.1 113.1 L737.3 113.7 L735.4 114.2 L733.5 114.7 L731.5 115.2 L729.5 115.6 L727.5 115.9 L725.4 116.3 L723.3 116.6 L721.2 116.8 L719.0 117.0 L716.9 117.2 L714.7 117.3 L712.5 117.4 L710.3 117.5 L708.0 117.5 L706.6 117.5 L705.3 117.4 L704.1 117.3 L702.9 117.1 L701.8 116.9 L700.7 116.7 L699.7 116.4 L698.7 116.0 L697.8 115.6 L696.9 115.2 L695.9 114.7 L695.0 114.1 L694.1 113.6 L693.1 113.0 L692.1 112.3 L691.2 111.6Z" fill="#e3e3ec"/><path d="M676.8 110.1 L677.4 111.6 L678.0 113.1 L678.6 114.7 L679.3 116.3 L680.1 117.8 L681.0 119.4 L682.0 120.9 L683.2 122.4 L684.6 123.8 L686.1 125.2 L687.8 126.5 L689.7 127.8 L691.9 128.9 L694.3 130.0 L696.9 130.9 L699.8 131.8 L702.8 132.1 L706.0 132.4 L709.3 132.6 L712.8 132.6 L716.4 132.6 L720.2 132.5 L723.9 132.3 L727.8 132.0 L731.6 131.7 L735.4 131.2 L739.2 130.7 L742.9 130.1 L746.6 129.5 L750.1 128.8 L753.4 128.0 L756.6 127.2 L756.6 126.8 L753.3 127.5 L749.9 128.0 L746.4 128.6 L742.8 129.0 L739.1 129.5 L735.3 129.9 L731.5 130.2 L727.6 130.5 L723.8 130.7 L720.1 130.8 L716.4 130.9 L712.8 130.9 L709.4 130.9 L706.1 130.7 L703.0 130.5 L700.2 130.2 L697.4 129.4 L694.8 128.6 L692.5 127.6 L690.4 126.6 L688.6 125.4 L686.9 124.2 L685.4 123.0 L684.0 121.6 L682.8 120.3 L681.8 118.8 L680.8 117.4 L679.9 115.9 L679.2 114.4 L678.4 112.9 L677.8 111.4 L677.2 109.9Z" fill="#e3e3ec"/><path d="M665.1 134.2 L666.4 133.9 L668.0 133.6 L669.7 133.5 L671.5 133.4 L673.4 133.4 L675.5 133.4 L677.6 133.5 L679.8 133.7 L682.1 133.9 L684.5 134.2 L687.0 134.6 L689.5 135.1 L692.0 135.6 L694.6 136.3 L697.1 137.0 L699.7 137.8 L701.1 138.4 L702.4 139.0 L703.7 139.7 L704.8 140.4 L706.0 141.2 L707.0 142.1 L708.0 143.2 L709.0 144.3 L709.9 145.5 L710.8 146.9 L711.8 148.4 L712.7 150.0 L713.6 151.8 L714.5 153.8 L715.4 155.9 L716.4 158.2 L720.0 166.5 L723.6 174.7 L724.0 174.6 L720.8 166.2 L717.6 157.8 L716.7 155.4 L715.8 153.2 L714.9 151.2 L714.1 149.3 L713.1 147.6 L712.2 146.0 L711.3 144.6 L710.3 143.2 L709.2 142.0 L708.2 140.9 L707.0 139.9 L705.8 139.0 L704.5 138.2 L703.2 137.5 L701.8 136.8 L700.3 136.2 L697.6 135.4 L695.0 134.7 L692.3 134.1 L689.8 133.6 L687.2 133.2 L684.7 132.9 L682.3 132.6 L679.9 132.5 L677.6 132.4 L675.5 132.4 L673.4 132.5 L671.4 132.6 L669.6 132.8 L667.9 133.1 L666.3 133.4 L664.9 133.8Z" fill="#e3e3ec"/><path d="M736.9 175.4 L734.9 166.7 L732.9 157.9 L732.5 156.3 L732.2 154.7 L732.0 153.1 L731.8 151.4 L731.8 149.7 L731.8 147.9 L732.0 146.2 L732.3 144.5 L732.7 142.9 L733.3 141.3 L734.0 139.8 L734.9 138.3 L736.0 137.0 L737.2 135.8 L738.7 134.7 L740.4 133.7 L742.2 132.9 L744.0 132.4 L745.9 132.0 L747.8 131.8 L749.6 131.8 L751.5 132.0 L753.3 132.4 L755.1 133.0 L756.8 133.8 L758.4 134.8 L760.0 136.0 L761.5 137.3 L762.9 138.9 L764.1 140.7 L765.3 142.7 L766.3 144.9 L766.5 145.7 L766.6 146.6 L766.5 147.4 L766.3 148.3 L765.9 149.2 L765.4 150.0 L764.8 150.9 L764.1 151.7 L763.3 152.6 L762.4 153.4 L761.4 154.1 L760.4 154.9 L759.4 155.6 L758.4 156.3 L757.3 156.9 L756.3 157.5 L748.6 162.2 L741.0 166.9 L741.2 167.3 L749.0 162.9 L756.9 158.5 L757.9 157.9 L759.0 157.3 L760.1 156.6 L761.1 155.9 L762.2 155.2 L763.2 154.4 L764.2 153.5 L765.1 152.7 L765.9 151.8 L766.6 150.8 L767.2 149.8 L767.7 148.8 L768.0 147.7 L768.1 146.6 L768.0 145.5 L767.7 144.3 L766.7 142.0 L765.5 139.9 L764.1 137.9 L762.7 136.2 L761.1 134.7 L759.4 133.4 L757.6 132.3 L755.7 131.4 L753.7 130.8 L751.8 130.3 L749.7 130.1 L747.7 130.1 L745.6 130.3 L743.6 130.7 L741.6 131.4 L739.6 132.3 L737.8 133.3 L736.2 134.6 L734.8 135.9 L733.6 137.4 L732.6 139.0 L731.9 140.7 L731.3 142.4 L730.8 144.2 L730.6 146.0 L730.4 147.9 L730.4 149.7 L730.5 151.5 L730.7 153.2 L731.0 154.9 L731.4 156.6 L731.9 158.1 L734.2 166.8 L736.5 175.5Z" fill="#e3e3ec"/><path d="M780.6 103.2 L781.9 104.2 L783.1 105.3 L784.4 106.4 L785.6 107.5 L786.7 108.7 L787.8 109.8 L788.8 111.0 L789.7 112.2 L790.6 113.4 L791.4 114.7 L792.0 115.9 L792.6 117.1 L793.0 118.3 L793.4 119.6 L793.6 120.8 L793.7 122.0 L793.6 123.4 L793.4 124.8 L793.3 126.1 L793.1 127.3 L792.9 128.5 L792.7 129.7 L792.4 130.8 L792.1 131.8 L791.8 132.8 L791.4 133.8 L791.1 134.7 L790.7 135.6 L790.3 136.5 L789.8 137.3 L789.4 138.1 L788.8 138.9 L789.2 139.1 L789.7 138.4 L790.3 137.6 L790.9 136.8 L791.4 136.0 L791.9 135.1 L792.4 134.2 L792.9 133.2 L793.3 132.2 L793.6 131.1 L794.0 130.0 L794.3 128.8 L794.6 127.6 L794.8 126.3 L795.0 125.0 L795.2 123.5 L795.3 122.0 L795.3 120.6 L795.0 119.2 L794.7 117.8 L794.1 116.5 L793.5 115.1 L792.8 113.8 L791.9 112.5 L790.9 111.3 L789.9 110.1 L788.8 108.9 L787.6 107.8 L786.3 106.7 L785.0 105.6 L783.6 104.7 L782.2 103.7 L780.8 102.8Z" fill="#e3e3ec"/><path d="M750.9 101.5 L751.8 102.5 L752.6 103.5 L753.5 104.5 L754.4 105.5 L755.4 106.5 L756.3 107.5 L757.1 108.5 L758.0 109.5 L758.8 110.5 L759.6 111.5 L760.3 112.5 L760.9 113.5 L761.5 114.5 L762.0 115.4 L762.4 116.3 L762.7 117.2 L762.8 117.6 L762.9 118.1 L762.9 118.5 L762.8 119.0 L762.7 119.4 L762.6 119.8 L762.4 120.2 L762.3 120.6 L762.0 121.0 L761.8 121.4 L761.5 121.8 L761.2 122.2 L760.9 122.6 L760.6 123.0 L760.2 123.4 L759.9 123.8 L760.1 124.0 L760.5 123.7 L760.9 123.3 L761.3 123.0 L761.7 122.7 L762.1 122.3 L762.5 121.9 L762.8 121.5 L763.1 121.1 L763.4 120.7 L763.6 120.2 L763.8 119.7 L764.0 119.2 L764.1 118.7 L764.2 118.1 L764.1 117.5 L764.1 116.8 L763.8 115.8 L763.3 114.8 L762.8 113.7 L762.2 112.7 L761.6 111.6 L760.8 110.6 L760.0 109.6 L759.1 108.6 L758.2 107.6 L757.2 106.6 L756.3 105.6 L755.3 104.7 L754.2 103.8 L753.2 102.9 L752.1 102.1 L751.1 101.3Z" fill="#e3e3ec"/><path d="M652.6 104.7 L656.9 112.5 L661.4 120.3 L662.5 122.2 L663.7 124.1 L664.8 126.0 L665.9 127.9 L667.1 129.8 L668.3 131.6 L669.5 133.5 L670.7 135.4 L672.0 137.2 L673.2 139.1 L674.6 140.9 L675.9 142.8 L677.3 144.6 L678.8 146.5 L680.3 148.3 L681.9 150.1 L682.1 149.9 L680.7 148.0 L679.4 146.0 L678.0 144.1 L676.7 142.2 L675.5 140.3 L674.2 138.4 L673.0 136.5 L671.8 134.6 L670.6 132.8 L669.5 130.9 L668.3 129.0 L667.1 127.1 L666.0 125.3 L664.9 123.4 L663.7 121.5 L662.6 119.7 L657.8 112.0 L652.9 104.5Z" fill="#e3e3ec"/><path d="M700.0 48.2 L702.3 47.8 L704.6 47.6 L706.8 47.4 L709.0 47.4 L711.2 47.5 L713.4 47.7 L715.6 48.0 L717.7 48.4 L719.9 49.0 L722.0 49.6 L724.2 50.3 L726.3 51.1 L728.5 52.0 L730.6 52.9 L732.8 54.0 L734.9 55.2 L735.1 54.8 L733.1 53.5 L731.0 52.2 L728.9 51.0 L726.8 50.0 L724.7 49.1 L722.5 48.3 L720.3 47.6 L718.0 47.1 L715.8 46.6 L713.5 46.4 L711.2 46.2 L709.0 46.3 L706.7 46.4 L704.4 46.7 L702.2 47.2 L700.0 47.8Z" fill="#e3e3ec"/><path d="M654.3 26.3 L660.3 32.9 L666.6 39.4 L667.3 40.0 L667.9 40.6 L668.6 41.3 L669.3 41.9 L670.0 42.6 L670.6 43.3 L671.3 44.0 L671.9 44.7 L672.6 45.4 L673.2 46.1 L673.8 46.8 L674.3 47.5 L674.9 48.3 L675.4 49.1 L675.8 49.8 L676.2 50.6 L676.5 50.5 L676.2 49.7 L675.8 48.8 L675.4 48.0 L675.0 47.1 L674.5 46.3 L674.0 45.5 L673.4 44.7 L672.8 43.9 L672.2 43.2 L671.5 42.4 L670.9 41.7 L670.2 41.0 L669.6 40.3 L668.9 39.7 L668.3 39.0 L667.6 38.4 L661.2 32.1 L654.5 26.0Z" fill="#e2e2eb"/><path d="M644.0 40.4 L652.3 44.0 L660.7 47.1 L661.5 47.4 L662.2 47.6 L663.0 47.9 L663.7 48.2 L664.4 48.4 L665.2 48.7 L665.9 49.0 L666.6 49.2 L667.3 49.5 L667.9 49.8 L668.6 50.1 L669.2 50.4 L669.9 50.6 L670.4 50.9 L671.0 51.2 L671.5 51.6 L671.7 51.3 L671.2 50.9 L670.7 50.5 L670.2 50.1 L669.6 49.7 L669.0 49.3 L668.4 48.9 L667.7 48.5 L667.1 48.2 L666.4 47.8 L665.7 47.5 L664.9 47.1 L664.2 46.8 L663.5 46.5 L662.7 46.2 L662.0 45.9 L661.3 45.6 L652.8 42.6 L644.2 40.0Z" fill="#e2e2eb"/><path d="M643.2 48.6 L652.0 50.4 L660.9 51.8 L661.6 51.9 L662.3 52.0 L663.0 52.1 L663.7 52.2 L664.4 52.3 L665.0 52.4 L665.7 52.5 L666.3 52.6 L666.9 52.7 L667.4 52.8 L668.0 52.9 L668.5 53.0 L669.0 53.1 L669.5 53.3 L670.0 53.4 L670.4 53.5 L670.5 53.2 L670.1 53.0 L669.7 52.9 L669.2 52.7 L668.7 52.5 L668.2 52.3 L667.6 52.1 L667.1 51.9 L666.5 51.7 L665.9 51.5 L665.2 51.4 L664.6 51.2 L663.9 51.0 L663.2 50.9 L662.5 50.7 L661.8 50.6 L661.1 50.5 L652.2 49.1 L643.2 48.3Z" fill="#e2e2eb"/><path d="M643.3 59.1 L652.3 57.9 L661.1 56.3 L662.0 56.2 L662.8 56.0 L663.6 55.8 L664.4 55.6 L665.3 55.5 L666.1 55.3 L666.9 55.2 L667.6 55.0 L668.4 54.8 L669.2 54.7 L669.9 54.6 L670.6 54.4 L671.3 54.3 L672.0 54.2 L672.6 54.1 L673.3 54.1 L673.3 53.7 L672.6 53.8 L672.0 53.7 L671.3 53.7 L670.5 53.7 L669.8 53.7 L669.0 53.8 L668.3 53.8 L667.5 53.9 L666.7 54.0 L665.9 54.1 L665.0 54.2 L664.2 54.3 L663.4 54.4 L662.5 54.6 L661.7 54.7 L660.9 54.9 L652.0 56.6 L643.3 58.7Z" fill="#e2e2eb"/><path d="M663.4 41.8 L663.8 42.3 L664.2 42.8 L664.6 43.3 L665.0 43.7 L665.4 44.1 L665.8 44.5 L666.1 44.8 L666.5 45.1 L666.8 45.4 L667.2 45.7 L667.5 45.9 L667.9 46.1 L668.2 46.3 L668.6 46.5 L668.9 46.6 L669.3 46.8 L669.5 46.5 L669.2 46.3 L668.9 46.0 L668.7 45.7 L668.4 45.4 L668.1 45.1 L667.9 44.9 L667.6 44.6 L667.2 44.3 L666.9 43.9 L666.5 43.6 L666.2 43.3 L665.7 42.9 L665.3 42.6 L664.8 42.2 L664.2 41.9 L663.6 41.5Z" fill="#e2e2eb"/><path d="M706.1 29.7 L698.1 33.9 L690.2 38.2 L689.1 38.8 L688.0 39.5 L687.0 40.1 L686.0 40.8 L685.1 41.4 L684.2 42.1 L683.4 42.8 L682.7 43.5 L682.1 44.3 L681.5 45.0 L681.0 45.8 L680.6 46.6 L680.2 47.4 L680.0 48.2 L679.8 49.1 L679.7 50.0 L679.7 50.6 L679.7 51.2 L679.8 51.8 L679.9 52.4 L680.0 52.9 L680.1 53.4 L680.3 53.9 L680.5 54.3 L680.6 54.8 L680.8 55.2 L681.0 55.5 L681.2 55.9 L681.4 56.2 L681.5 56.5 L681.6 56.8 L681.7 57.1 L682.1 56.9 L682.0 56.7 L681.9 56.4 L681.7 56.0 L681.6 55.7 L681.5 55.3 L681.3 55.0 L681.2 54.6 L681.1 54.1 L681.0 53.7 L680.9 53.2 L680.8 52.8 L680.8 52.3 L680.7 51.7 L680.7 51.2 L680.7 50.6 L680.8 50.1 L680.9 49.3 L681.1 48.6 L681.4 47.8 L681.7 47.2 L682.1 46.5 L682.6 45.8 L683.1 45.2 L683.7 44.5 L684.4 43.9 L685.2 43.3 L686.0 42.6 L686.8 42.0 L687.8 41.4 L688.8 40.8 L689.8 40.1 L690.9 39.5 L698.7 34.9 L706.3 30.1Z" fill="#e2e2eb"/><path d="M715.2 29.5 L707.2 33.7 L699.4 38.2 L698.1 38.9 L696.9 39.6 L695.7 40.4 L694.6 41.1 L693.6 41.9 L692.6 42.6 L691.8 43.4 L691.0 44.2 L690.2 45.0 L689.6 45.7 L689.0 46.5 L688.5 47.3 L688.0 48.1 L687.7 48.9 L687.4 49.7 L687.3 50.5 L687.2 51.0 L687.1 51.5 L687.1 52.0 L687.0 52.5 L687.0 52.9 L687.0 53.4 L687.0 53.8 L687.0 54.2 L687.0 54.6 L687.0 55.0 L687.0 55.3 L687.0 55.7 L687.0 56.0 L687.0 56.4 L687.0 56.7 L687.0 57.0 L687.4 57.0 L687.4 56.7 L687.4 56.4 L687.4 56.0 L687.5 55.7 L687.5 55.3 L687.6 55.0 L687.6 54.6 L687.6 54.2 L687.7 53.8 L687.8 53.4 L687.8 53.0 L687.9 52.6 L688.0 52.1 L688.1 51.7 L688.2 51.2 L688.3 50.7 L688.5 50.0 L688.8 49.3 L689.2 48.7 L689.6 48.0 L690.1 47.3 L690.6 46.6 L691.3 46.0 L692.0 45.3 L692.8 44.6 L693.6 43.9 L694.6 43.2 L695.5 42.5 L696.6 41.7 L697.7 41.0 L698.9 40.3 L700.2 39.6 L707.9 34.8 L715.4 29.9Z" fill="#e2e2eb"/><path d="M695.9 53.5 L696.6 53.6 L697.3 53.7 L698.1 53.9 L698.8 54.0 L699.5 54.1 L700.3 54.3 L701.0 54.4 L701.8 54.5 L702.6 54.7 L703.3 54.8 L704.1 55.0 L704.9 55.1 L705.7 55.3 L706.5 55.4 L707.3 55.6 L708.1 55.7 L708.2 55.5 L707.4 55.1 L706.7 54.8 L705.9 54.5 L705.1 54.2 L704.4 53.9 L703.6 53.7 L702.8 53.5 L702.0 53.4 L701.2 53.3 L700.5 53.2 L699.7 53.1 L698.9 53.1 L698.1 53.0 L697.4 53.1 L696.6 53.1 L695.9 53.2Z" fill="#e2e2eb"/><path d="M704.0 24.7 L709.3 32.0 L714.6 39.2 L715.3 40.1 L715.9 41.0 L716.6 41.8 L717.4 42.7 L718.1 43.6 L718.9 44.5 L719.7 45.4 L720.6 46.3 L721.5 47.2 L722.4 48.2 L723.4 49.1 L724.4 50.0 L725.5 50.9 L726.5 51.9 L727.7 52.8 L728.8 53.7 L729.3 54.1 L729.8 54.4 L730.3 54.8 L730.7 55.1 L731.1 55.4 L731.5 55.6 L731.9 55.9 L732.2 56.1 L732.5 56.3 L732.8 56.5 L733.0 56.6 L733.3 56.8 L733.5 56.9 L733.7 57.0 L733.9 57.1 L734.0 57.1 L734.2 56.9 L734.0 56.8 L733.8 56.7 L733.6 56.6 L733.4 56.5 L733.2 56.3 L733.0 56.2 L732.7 56.0 L732.5 55.7 L732.2 55.5 L731.8 55.2 L731.5 54.9 L731.1 54.6 L730.7 54.2 L730.3 53.9 L729.8 53.5 L729.3 53.1 L728.2 52.1 L727.2 51.1 L726.1 50.2 L725.2 49.2 L724.2 48.3 L723.3 47.3 L722.4 46.4 L721.5 45.5 L720.7 44.6 L719.9 43.7 L719.1 42.8 L718.3 41.9 L717.6 41.0 L716.9 40.2 L716.3 39.3 L715.6 38.5 L710.0 31.4 L704.3 24.5Z" fill="#e2e2eb"/><path d="M707.5 25.5 L713.2 32.5 L719.2 39.2 L719.8 40.0 L720.4 40.6 L721.1 41.3 L721.7 41.9 L722.4 42.6 L723.0 43.1 L723.6 43.7 L724.3 44.2 L724.9 44.7 L725.5 45.2 L726.1 45.6 L726.7 46.0 L727.3 46.4 L727.9 46.7 L728.5 47.0 L729.0 47.4 L729.2 47.1 L728.6 46.8 L728.1 46.4 L727.6 46.0 L727.1 45.5 L726.5 45.1 L726.0 44.6 L725.4 44.1 L724.8 43.6 L724.2 43.0 L723.7 42.4 L723.1 41.8 L722.5 41.2 L721.9 40.6 L721.2 39.9 L720.6 39.2 L720.0 38.5 L714.0 31.8 L707.7 25.3Z" fill="#e2e2eb"/><path d="M722.3 30.1 L729.8 35.1 L737.5 39.7 L738.8 40.5 L740.0 41.2 L741.2 41.9 L742.4 42.6 L743.5 43.3 L744.6 44.0 L745.6 44.7 L746.7 45.4 L747.6 46.1 L748.6 46.7 L749.6 47.4 L750.5 48.1 L751.4 48.7 L752.3 49.4 L753.2 50.0 L754.0 50.8 L754.4 50.4 L753.6 49.6 L752.8 48.8 L752.0 48.0 L751.2 47.2 L750.4 46.4 L749.5 45.6 L748.6 44.9 L747.6 44.1 L746.6 43.3 L745.6 42.5 L744.5 41.8 L743.4 41.0 L742.3 40.2 L741.1 39.5 L739.8 38.7 L738.5 38.0 L730.6 33.7 L722.5 29.7Z" fill="#e2e2eb"/><path d="M728.6 30.2 L736.2 35.1 L744.0 39.7 L745.5 40.5 L747.0 41.4 L748.4 42.2 L749.8 43.1 L751.2 43.9 L752.5 44.7 L753.8 45.5 L755.1 46.3 L756.3 47.2 L757.5 48.0 L758.7 48.8 L759.9 49.6 L761.0 50.3 L762.1 51.1 L763.3 51.9 L764.4 52.7 L764.7 52.3 L763.6 51.5 L762.6 50.5 L761.6 49.6 L760.5 48.7 L759.4 47.8 L758.3 46.8 L757.2 45.9 L756.0 45.0 L754.7 44.1 L753.5 43.3 L752.1 42.4 L750.8 41.5 L749.4 40.6 L747.9 39.8 L746.4 38.9 L744.9 38.1 L736.9 33.8 L728.8 29.8Z" fill="#e2e2eb"/><path d="M735.1 30.1 L742.7 34.9 L750.4 39.6 L751.9 40.4 L753.2 41.2 L754.5 42.0 L755.8 42.7 L757.0 43.5 L758.2 44.3 L759.4 45.1 L760.6 45.8 L761.7 46.6 L762.7 47.4 L763.8 48.1 L764.8 48.9 L765.9 49.6 L766.9 50.3 L767.9 51.1 L768.8 51.8 L769.1 51.5 L768.2 50.7 L767.3 49.8 L766.4 49.0 L765.4 48.1 L764.5 47.3 L763.5 46.4 L762.4 45.6 L761.4 44.7 L760.2 43.9 L759.1 43.1 L757.9 42.2 L756.7 41.4 L755.4 40.6 L754.1 39.8 L752.7 39.0 L751.2 38.2 L743.4 33.8 L735.3 29.7Z" fill="#e2e2eb"/><path d="M741.7 29.3 L749.1 34.4 L756.6 39.4 L758.0 40.2 L759.2 41.1 L760.5 41.9 L761.7 42.7 L762.8 43.5 L763.9 44.3 L765.0 45.2 L766.1 46.0 L767.1 46.8 L768.1 47.6 L769.0 48.4 L770.0 49.2 L770.9 50.0 L771.8 50.8 L772.8 51.5 L773.6 52.4 L773.8 52.1 L773.0 51.3 L772.2 50.4 L771.4 49.5 L770.5 48.6 L769.6 47.8 L768.7 46.9 L767.7 46.0 L766.7 45.1 L765.7 44.3 L764.6 43.4 L763.5 42.6 L762.4 41.7 L761.2 40.8 L760.0 40.0 L758.7 39.2 L757.3 38.3 L749.7 33.6 L741.9 29.0Z" fill="#e2e2eb"/><path d="M746.7 29.0 L753.8 34.5 L761.2 39.7 L762.6 40.7 L764.0 41.6 L765.4 42.6 L766.7 43.5 L768.0 44.5 L769.3 45.4 L770.5 46.4 L771.7 47.3 L772.9 48.3 L774.0 49.2 L775.1 50.1 L776.2 51.0 L777.3 51.9 L778.4 52.8 L779.5 53.7 L780.5 54.7 L780.9 54.3 L779.9 53.3 L779.0 52.2 L778.0 51.2 L777.1 50.1 L776.0 49.1 L775.0 48.1 L773.9 47.0 L772.8 46.0 L771.6 45.0 L770.4 44.0 L769.2 43.0 L767.9 42.0 L766.6 41.0 L765.2 40.0 L763.7 39.0 L762.3 38.0 L754.7 33.2 L746.9 28.6Z" fill="#e2e2eb"/><path d="M749.6 30.2 L757.2 35.0 L764.9 39.6 L766.6 40.6 L768.3 41.5 L769.9 42.4 L771.4 43.4 L772.9 44.3 L774.4 45.2 L775.8 46.1 L777.3 47.0 L778.7 47.9 L780.0 48.8 L781.4 49.7 L782.7 50.6 L784.0 51.5 L785.3 52.3 L786.6 53.2 L787.8 54.1 L788.1 53.8 L786.9 52.8 L785.7 51.7 L784.5 50.7 L783.3 49.7 L782.1 48.7 L780.8 47.7 L779.5 46.7 L778.1 45.8 L776.7 44.8 L775.3 43.8 L773.8 42.8 L772.3 41.9 L770.8 40.9 L769.1 40.0 L767.5 39.0 L765.8 38.1 L757.8 33.9 L749.8 29.8Z" fill="#e2e2eb"/><path d="M754.7 29.9 L762.3 34.8 L770.0 39.5 L771.6 40.4 L773.1 41.3 L774.6 42.2 L776.0 43.1 L777.4 44.0 L778.8 44.8 L780.1 45.7 L781.4 46.6 L782.6 47.5 L783.9 48.3 L785.1 49.2 L786.3 50.1 L787.5 50.9 L788.6 51.8 L789.8 52.6 L790.9 53.5 L791.1 53.2 L790.1 52.3 L789.0 51.3 L787.9 50.4 L786.8 49.4 L785.7 48.5 L784.5 47.5 L783.3 46.6 L782.1 45.6 L780.8 44.7 L779.5 43.8 L778.2 42.8 L776.8 41.9 L775.3 41.0 L773.8 40.1 L772.3 39.2 L770.7 38.3 L762.9 33.9 L754.9 29.6Z" fill="#e2e2eb"/><path d="M762.2 28.7 L769.2 34.3 L776.5 39.7 L777.9 40.6 L779.3 41.6 L780.6 42.6 L781.9 43.5 L783.1 44.5 L784.3 45.4 L785.5 46.4 L786.6 47.3 L787.7 48.2 L788.8 49.2 L789.9 50.1 L791.0 51.0 L792.0 51.9 L793.0 52.8 L794.1 53.7 L795.0 54.7 L795.4 54.3 L794.5 53.3 L793.6 52.2 L792.7 51.2 L791.8 50.2 L790.8 49.1 L789.8 48.1 L788.8 47.1 L787.7 46.0 L786.6 45.0 L785.5 44.0 L784.3 43.0 L783.1 42.0 L781.8 41.0 L780.4 40.0 L779.1 39.0 L777.6 38.1 L770.1 33.1 L762.5 28.3Z" fill="#e2e2eb"/><path d="M768.7 29.9 L776.2 34.8 L783.9 39.6 L785.0 40.3 L786.0 40.9 L786.9 41.5 L787.9 42.1 L788.8 42.8 L789.6 43.4 L790.4 44.0 L791.2 44.6 L791.9 45.2 L792.7 45.8 L793.4 46.4 L794.0 47.1 L794.7 47.7 L795.3 48.3 L795.9 48.9 L796.5 49.5 L802.9 55.8 L809.5 62.0 L809.8 61.7 L803.9 54.9 L797.8 48.3 L797.2 47.7 L796.6 47.0 L795.9 46.4 L795.3 45.7 L794.6 45.1 L793.9 44.4 L793.1 43.8 L792.4 43.2 L791.6 42.5 L790.7 41.9 L789.8 41.2 L788.9 40.6 L787.9 40.0 L786.9 39.3 L785.9 38.7 L784.8 38.1 L776.9 33.7 L768.9 29.5Z" fill="#e2e2eb"/><path d="M775.6 30.5 L783.4 35.1 L791.2 39.5 L791.9 39.9 L792.4 40.2 L792.9 40.5 L793.4 40.8 L793.8 41.1 L794.2 41.4 L794.6 41.7 L794.9 42.0 L795.1 42.3 L795.4 42.6 L795.6 42.9 L795.8 43.2 L796.0 43.5 L796.2 43.8 L796.3 44.1 L796.5 44.5 L800.4 52.6 L804.5 60.6 L804.9 60.4 L801.5 52.1 L797.8 43.8 L797.7 43.5 L797.5 43.2 L797.3 42.8 L797.1 42.4 L796.9 42.1 L796.6 41.7 L796.3 41.3 L796.0 41.0 L795.6 40.6 L795.2 40.3 L794.7 39.9 L794.3 39.6 L793.7 39.2 L793.2 38.9 L792.6 38.5 L791.9 38.2 L783.9 34.1 L775.8 30.1Z" fill="#e2e2eb"/><path d="M739.0 50.1 L739.4 50.5 L739.8 50.9 L740.3 51.2 L740.9 51.5 L741.7 51.8 L742.5 52.0 L743.4 52.2 L744.4 52.3 L745.5 52.4 L746.7 52.5 L748.0 52.5 L749.4 52.5 L750.9 52.5 L752.5 52.5 L754.3 52.4 L756.2 52.3 L757.1 52.2 L758.0 52.2 L758.9 52.2 L759.7 52.3 L760.6 52.3 L761.4 52.4 L762.2 52.5 L763.1 52.6 L763.9 52.8 L764.7 52.9 L765.5 53.1 L766.3 53.3 L767.1 53.4 L767.9 53.6 L768.7 53.8 L769.5 54.1 L769.6 53.8 L768.8 53.5 L768.0 53.2 L767.2 52.9 L766.5 52.6 L765.7 52.4 L764.9 52.2 L764.1 51.9 L763.2 51.7 L762.4 51.6 L761.5 51.4 L760.7 51.3 L759.8 51.2 L758.9 51.1 L758.0 51.1 L757.1 51.1 L756.1 51.1 L754.2 51.2 L752.5 51.3 L750.9 51.4 L749.3 51.4 L748.0 51.5 L746.7 51.5 L745.5 51.5 L744.4 51.5 L743.4 51.4 L742.6 51.3 L741.8 51.2 L741.1 51.1 L740.5 50.9 L740.0 50.6 L739.6 50.3 L739.2 49.9Z" fill="#e2e2eb"/><path d="M736.5 50.8 L736.3 51.3 L736.1 51.7 L736.0 52.2 L735.9 52.7 L735.9 53.1 L735.9 53.5 L736.0 54.0 L736.1 54.4 L736.2 54.8 L736.4 55.2 L736.6 55.5 L736.8 55.9 L737.1 56.2 L737.3 56.5 L737.6 56.8 L737.9 57.1 L738.1 56.9 L738.0 56.6 L737.9 56.2 L737.8 55.8 L737.7 55.5 L737.5 55.1 L737.4 54.8 L737.3 54.4 L737.2 54.1 L737.2 53.7 L737.1 53.4 L737.0 53.0 L736.9 52.6 L736.9 52.2 L736.8 51.8 L736.8 51.4 L736.8 50.9Z" fill="#e2e2eb"/><path d="M751.4 56.9 L752.0 56.8 L752.6 56.8 L753.2 56.7 L753.8 56.7 L754.4 56.7 L755.0 56.7 L755.6 56.7 L756.3 56.7 L756.9 56.7 L757.5 56.7 L758.2 56.7 L758.8 56.7 L759.4 56.7 L760.0 56.8 L760.6 56.8 L761.1 56.9 L761.2 56.6 L760.7 56.4 L760.1 56.1 L759.5 55.9 L758.9 55.8 L758.3 55.7 L757.6 55.6 L757.0 55.5 L756.3 55.5 L755.6 55.5 L754.9 55.6 L754.3 55.7 L753.6 55.8 L753.0 55.9 L752.4 56.1 L751.9 56.4 L751.4 56.6Z" fill="#e2e2eb"/><path d="M786.4 61.6 L787.1 62.3 L787.8 63.1 L788.4 63.9 L789.1 64.7 L789.8 65.4 L790.5 66.2 L791.1 66.9 L791.8 67.7 L792.4 68.4 L793.1 69.1 L793.7 69.8 L794.3 70.5 L794.9 71.1 L795.4 71.8 L795.9 72.4 L796.4 73.0 L802.3 79.8 L808.6 86.2 L809.0 85.9 L803.6 78.7 L797.9 71.7 L797.4 71.1 L796.9 70.5 L796.3 69.9 L795.7 69.2 L795.0 68.6 L794.4 67.9 L793.7 67.2 L793.0 66.5 L792.2 65.9 L791.5 65.2 L790.7 64.5 L789.9 63.8 L789.1 63.2 L788.3 62.6 L787.5 61.9 L786.7 61.3Z" fill="#e2e2eb"/><path d="M789.5 58.0 L790.0 58.6 L790.5 59.2 L791.0 59.9 L791.5 60.5 L792.0 61.2 L792.5 61.8 L792.9 62.5 L793.4 63.2 L793.8 63.8 L794.2 64.5 L794.6 65.1 L795.0 65.8 L795.4 66.4 L795.7 67.0 L796.1 67.6 L796.4 68.3 L800.7 76.2 L805.4 83.9 L805.8 83.7 L802.1 75.5 L797.9 67.5 L797.6 66.8 L797.2 66.2 L796.8 65.6 L796.4 64.9 L795.9 64.3 L795.5 63.6 L795.0 63.0 L794.4 62.3 L793.9 61.7 L793.4 61.1 L792.8 60.5 L792.2 59.9 L791.6 59.3 L791.0 58.8 L790.4 58.3 L789.8 57.7Z" fill="#e2e2eb"/><path d="M792.6 57.4 L792.9 57.8 L793.2 58.2 L793.4 58.7 L793.7 59.1 L794.0 59.5 L794.3 60.0 L794.5 60.4 L794.8 60.8 L795.1 61.2 L795.3 61.6 L795.6 62.0 L795.8 62.4 L796.1 62.8 L796.3 63.2 L796.5 63.6 L796.7 64.0 L801.3 71.7 L806.2 79.2 L806.5 79.1 L802.2 71.1 L797.6 63.4 L797.4 63.1 L797.1 62.7 L796.9 62.3 L796.6 61.9 L796.3 61.5 L796.0 61.1 L795.8 60.8 L795.4 60.4 L795.1 60.0 L794.8 59.6 L794.5 59.2 L794.2 58.8 L793.8 58.4 L793.5 58.0 L793.1 57.6 L792.8 57.2Z" fill="#e2e2eb"/><path d="M786.3 74.7 L786.7 75.6 L787.1 76.6 L787.6 77.5 L788.0 78.4 L788.5 79.3 L789.0 80.1 L789.6 81.0 L790.1 81.8 L790.7 82.6 L791.2 83.4 L791.8 84.2 L792.4 84.9 L793.0 85.7 L793.5 86.4 L794.2 87.1 L794.7 87.8 L795.1 87.6 L794.8 86.7 L794.5 85.8 L794.2 84.9 L793.7 84.1 L793.3 83.2 L792.8 82.4 L792.3 81.5 L791.8 80.7 L791.2 79.9 L790.6 79.0 L790.0 78.2 L789.4 77.5 L788.8 76.7 L788.1 75.9 L787.4 75.2 L786.8 74.4Z" fill="#e2e2eb"/><path d="M789.2 72.7 L789.8 73.7 L790.3 74.6 L790.8 75.6 L791.3 76.5 L791.8 77.4 L792.3 78.4 L792.8 79.3 L793.2 80.2 L793.7 81.2 L794.1 82.1 L794.5 83.0 L794.9 84.0 L795.3 84.9 L795.7 85.8 L796.0 86.8 L796.3 87.7 L799.5 96.1 L803.0 104.4 L803.4 104.3 L800.9 95.6 L798.0 87.1 L797.6 86.2 L797.3 85.2 L796.9 84.3 L796.5 83.3 L796.0 82.4 L795.5 81.4 L795.0 80.5 L794.5 79.6 L794.0 78.6 L793.4 77.7 L792.8 76.8 L792.2 76.0 L791.5 75.1 L790.9 74.2 L790.2 73.4 L789.5 72.5Z" fill="#e2e2eb"/><path d="M786.6 84.7 L787.0 85.6 L787.3 86.5 L787.6 87.3 L788.0 88.2 L788.4 89.1 L788.7 89.9 L789.1 90.8 L789.5 91.7 L790.0 92.5 L790.4 93.4 L790.8 94.3 L791.3 95.2 L791.8 96.0 L792.3 96.9 L792.8 97.8 L793.3 98.7 L793.7 98.5 L793.5 97.5 L793.3 96.5 L793.0 95.5 L792.7 94.5 L792.4 93.6 L792.0 92.7 L791.6 91.8 L791.2 90.9 L790.8 90.0 L790.3 89.1 L789.8 88.3 L789.3 87.5 L788.8 86.7 L788.2 85.9 L787.6 85.2 L787.0 84.5Z" fill="#e2e2eb"/><path d="M792.6 97.3 L792.9 97.6 L793.2 98.0 L793.5 98.4 L793.7 98.8 L794.0 99.1 L794.3 99.5 L794.6 99.8 L794.8 100.2 L795.1 100.5 L795.4 100.8 L795.6 101.2 L795.9 101.5 L796.1 101.8 L796.3 102.1 L796.5 102.4 L796.7 102.8 L801.9 110.1 L807.4 117.3 L807.6 117.1 L802.8 109.5 L797.6 102.2 L797.3 101.9 L797.1 101.6 L796.8 101.2 L796.6 100.9 L796.3 100.6 L796.0 100.3 L795.7 100.0 L795.4 99.7 L795.1 99.4 L794.8 99.0 L794.5 98.7 L794.1 98.4 L793.8 98.1 L793.5 97.8 L793.1 97.4 L792.8 97.1Z" fill="#e2e2eb"/><path d="M785.3 104.6 L786.0 105.6 L786.7 106.6 L787.3 107.6 L787.9 108.6 L788.5 109.6 L789.0 110.6 L789.4 111.5 L789.8 112.5 L790.1 113.4 L790.4 114.3 L790.6 115.2 L790.8 116.1 L791.0 117.0 L791.0 117.9 L791.1 118.8 L791.0 119.7 L791.0 121.0 L790.8 122.3 L790.6 123.5 L790.4 124.7 L790.2 125.9 L789.9 127.0 L789.5 128.1 L789.2 129.2 L788.8 130.3 L788.3 131.3 L787.9 132.3 L787.4 133.3 L786.9 134.2 L786.4 135.2 L785.9 136.1 L785.3 136.9 L785.6 137.2 L786.2 136.3 L786.9 135.5 L787.6 134.6 L788.2 133.7 L788.8 132.8 L789.4 131.8 L789.9 130.8 L790.4 129.7 L790.9 128.6 L791.3 127.5 L791.7 126.3 L792.0 125.1 L792.2 123.8 L792.4 122.5 L792.6 121.2 L792.7 119.8 L792.7 118.8 L792.6 117.8 L792.5 116.8 L792.4 115.9 L792.1 114.9 L791.8 113.9 L791.5 112.9 L791.1 111.9 L790.6 111.0 L790.0 110.0 L789.4 109.0 L788.8 108.1 L788.1 107.1 L787.3 106.2 L786.4 105.3 L785.6 104.3Z" fill="#e2e2eb"/><path d="M789.4 107.3 L790.1 108.3 L790.6 109.4 L791.1 110.4 L791.5 111.4 L791.9 112.4 L792.3 113.4 L792.6 114.3 L792.9 115.3 L793.2 116.2 L793.4 117.2 L793.5 118.2 L793.7 119.1 L793.7 120.1 L793.8 121.1 L793.8 122.1 L793.8 123.1 L793.6 124.4 L793.5 125.7 L793.2 127.0 L793.0 128.2 L792.7 129.4 L792.3 130.5 L791.9 131.6 L791.5 132.7 L791.1 133.7 L790.6 134.7 L790.1 135.7 L789.6 136.6 L789.0 137.5 L788.5 138.4 L787.9 139.2 L787.2 140.0 L787.6 140.3 L788.2 139.5 L789.0 138.8 L789.7 138.0 L790.4 137.2 L791.0 136.3 L791.7 135.3 L792.3 134.3 L792.8 133.3 L793.3 132.2 L793.8 131.0 L794.2 129.9 L794.6 128.6 L794.9 127.3 L795.2 126.0 L795.4 124.6 L795.5 123.2 L795.5 122.1 L795.5 121.0 L795.4 120.0 L795.3 118.9 L795.1 117.9 L794.9 116.9 L794.6 115.8 L794.3 114.8 L793.9 113.9 L793.5 112.9 L793.0 111.9 L792.4 110.9 L791.9 110.0 L791.2 109.0 L790.5 108.1 L789.8 107.1Z" fill="#e2e2eb"/><path d="M648.5 76.6 L655.1 70.5 L661.4 64.1 L661.8 63.6 L662.2 63.2 L662.6 62.8 L662.9 62.4 L663.3 62.0 L663.6 61.6 L664.0 61.2 L664.3 60.8 L664.6 60.4 L665.0 60.0 L665.3 59.6 L665.6 59.2 L666.0 58.8 L666.3 58.4 L666.6 58.0 L667.0 57.7 L666.8 57.4 L666.4 57.8 L666.0 58.2 L665.6 58.5 L665.2 58.8 L664.9 59.2 L664.5 59.5 L664.1 59.9 L663.8 60.3 L663.4 60.6 L663.0 61.0 L662.6 61.4 L662.2 61.7 L661.8 62.1 L661.5 62.5 L661.0 62.9 L660.6 63.3 L654.3 69.7 L648.3 76.4Z" fill="#e2e2eb"/><path d="M666.7 80.3 L666.2 81.1 L665.7 81.8 L665.2 82.6 L664.7 83.4 L664.3 84.1 L663.9 84.9 L663.6 85.7 L663.3 86.5 L663.0 87.3 L662.8 88.1 L662.6 88.9 L662.5 89.8 L662.4 90.6 L662.4 91.4 L662.5 92.3 L662.6 93.1 L662.7 93.7 L662.8 94.3 L663.0 94.9 L663.2 95.5 L663.4 96.0 L663.6 96.5 L663.8 97.0 L664.1 97.5 L664.4 97.9 L664.6 98.3 L665.0 98.7 L665.3 99.1 L665.6 99.4 L666.0 99.7 L666.4 100.0 L666.7 100.4 L667.0 100.1 L666.6 99.8 L666.3 99.4 L666.1 99.0 L665.8 98.7 L665.6 98.3 L665.4 97.9 L665.2 97.5 L665.0 97.0 L664.8 96.6 L664.6 96.1 L664.5 95.6 L664.3 95.1 L664.2 94.6 L664.1 94.0 L664.0 93.5 L663.9 92.9 L663.8 92.2 L663.8 91.4 L663.8 90.7 L663.9 89.9 L664.0 89.2 L664.1 88.4 L664.3 87.7 L664.5 86.9 L664.7 86.1 L665.0 85.4 L665.3 84.6 L665.6 83.8 L665.9 83.0 L666.3 82.2 L666.6 81.3 L667.0 80.5Z" fill="#e2e2eb"/><path d="M666.7 101.3 L666.0 102.3 L665.4 103.4 L664.7 104.5 L664.2 105.6 L663.6 106.7 L663.2 107.9 L662.7 109.1 L662.4 110.4 L662.0 111.6 L661.7 112.8 L661.5 114.1 L661.4 115.4 L661.3 116.6 L661.2 117.9 L661.2 119.2 L661.3 120.4 L661.4 121.7 L661.6 122.9 L661.8 124.1 L662.0 125.3 L662.2 126.4 L662.5 127.5 L662.8 128.6 L663.1 129.7 L663.5 130.7 L663.9 131.8 L664.3 132.7 L664.7 133.7 L665.2 134.6 L665.7 135.5 L666.2 136.3 L666.7 137.2 L667.0 137.0 L666.6 136.1 L666.2 135.2 L665.9 134.3 L665.5 133.3 L665.2 132.4 L664.9 131.4 L664.6 130.4 L664.4 129.4 L664.1 128.3 L663.9 127.2 L663.7 126.1 L663.5 125.0 L663.3 123.9 L663.2 122.7 L663.0 121.5 L662.9 120.3 L662.9 119.1 L662.8 117.9 L662.9 116.7 L662.9 115.5 L663.1 114.3 L663.2 113.1 L663.4 111.9 L663.7 110.7 L664.0 109.5 L664.3 108.3 L664.7 107.1 L665.1 106.0 L665.5 104.8 L666.0 103.7 L666.5 102.5 L667.0 101.5Z" fill="#e2e2eb"/><path d="M647.3 155.2 L654.8 150.3 L662.2 145.2 L662.7 144.8 L663.2 144.5 L663.6 144.2 L664.1 144.0 L664.6 143.7 L665.1 143.5 L665.5 143.3 L666.0 143.2 L666.5 143.0 L667.1 142.9 L667.6 142.8 L668.1 142.7 L668.7 142.7 L669.3 142.7 L669.8 142.7 L670.4 142.7 L671.2 142.8 L671.9 142.9 L672.6 143.0 L673.2 143.1 L673.9 143.3 L674.5 143.5 L675.1 143.6 L675.6 143.8 L676.2 144.0 L676.7 144.2 L677.2 144.4 L677.7 144.6 L678.1 144.8 L678.5 145.1 L678.9 145.3 L679.3 145.6 L679.5 145.3 L679.1 145.0 L678.7 144.8 L678.3 144.5 L677.9 144.2 L677.5 143.9 L677.0 143.6 L676.5 143.3 L675.9 143.1 L675.4 142.8 L674.8 142.6 L674.2 142.4 L673.5 142.2 L672.8 142.0 L672.1 141.8 L671.4 141.6 L670.6 141.5 L669.9 141.4 L669.3 141.4 L668.6 141.4 L668.0 141.4 L667.4 141.5 L666.8 141.6 L666.2 141.7 L665.7 141.9 L665.1 142.0 L664.5 142.2 L664.0 142.5 L663.5 142.7 L662.9 143.0 L662.4 143.3 L661.9 143.7 L661.4 144.0 L654.2 149.3 L647.1 154.9Z" fill="#e2e2eb"/><path d="M665.2 175.6 L666.6 166.7 L667.9 157.8 L668.0 156.9 L668.1 156.1 L668.2 155.2 L668.3 154.4 L668.4 153.6 L668.6 152.8 L668.7 152.1 L668.9 151.4 L669.0 150.7 L669.2 150.0 L669.4 149.4 L669.6 148.8 L669.8 148.3 L670.0 147.8 L670.2 147.4 L670.5 147.0 L670.8 146.8 L671.2 146.5 L671.8 146.1 L672.3 145.8 L673.0 145.6 L673.7 145.3 L674.5 145.0 L675.4 144.7 L676.3 144.4 L677.4 144.1 L678.5 143.8 L679.7 143.6 L681.1 143.2 L682.5 142.9 L684.0 142.6 L685.6 142.3 L685.5 141.9 L683.9 142.1 L682.4 142.3 L680.9 142.5 L679.6 142.7 L678.3 142.9 L677.2 143.1 L676.1 143.3 L675.1 143.5 L674.1 143.8 L673.3 144.0 L672.5 144.3 L671.8 144.6 L671.1 144.9 L670.5 145.3 L670.0 145.6 L669.4 146.1 L669.0 146.6 L668.7 147.1 L668.4 147.7 L668.2 148.3 L667.9 148.9 L667.7 149.6 L667.5 150.3 L667.4 151.0 L667.2 151.8 L667.1 152.6 L666.9 153.4 L666.8 154.2 L666.7 155.0 L666.6 155.9 L666.5 156.7 L666.4 157.6 L665.5 166.6 L664.8 175.6Z" fill="#e2e2eb"/><path d="M672.5 150.1 L673.4 150.1 L674.3 150.1 L675.2 150.2 L676.1 150.3 L677.0 150.4 L677.9 150.5 L678.8 150.7 L679.7 150.9 L680.6 151.1 L681.5 151.4 L682.4 151.7 L683.3 152.0 L684.2 152.3 L685.1 152.6 L686.0 153.0 L686.9 153.4 L687.5 153.6 L688.2 153.9 L688.8 154.2 L689.4 154.4 L690.0 154.6 L690.6 154.8 L691.1 155.0 L691.7 155.1 L692.3 155.2 L692.8 155.3 L693.3 155.4 L693.9 155.5 L694.4 155.6 L694.9 155.6 L695.4 155.6 L695.9 155.7 L695.9 155.3 L695.4 155.2 L695.0 155.1 L694.5 155.0 L694.0 154.8 L693.5 154.7 L693.0 154.5 L692.5 154.3 L692.0 154.1 L691.5 153.9 L691.0 153.7 L690.4 153.4 L689.9 153.2 L689.3 152.9 L688.7 152.7 L688.2 152.4 L687.5 152.0 L686.6 151.6 L685.6 151.2 L684.7 150.8 L683.7 150.5 L682.8 150.2 L681.9 150.0 L680.9 149.8 L680.0 149.6 L679.0 149.4 L678.1 149.3 L677.1 149.3 L676.2 149.3 L675.2 149.3 L674.3 149.4 L673.4 149.6 L672.4 149.7Z" fill="#e2e2eb"/><path d="M681.8 147.2 L682.3 147.6 L682.7 147.9 L683.2 148.3 L683.7 148.6 L684.2 148.8 L684.7 149.1 L685.2 149.3 L685.7 149.5 L686.2 149.6 L686.6 149.7 L687.1 149.8 L687.6 149.9 L688.1 150.0 L688.6 150.0 L689.1 150.0 L689.5 149.9 L690.0 149.9 L690.6 149.8 L691.1 149.7 L691.5 149.6 L692.0 149.4 L692.5 149.3 L692.9 149.2 L693.3 149.0 L693.7 148.9 L694.1 148.7 L694.4 148.6 L694.8 148.4 L695.1 148.2 L695.4 148.1 L695.7 147.9 L695.9 147.8 L695.8 147.5 L695.6 147.6 L695.2 147.7 L694.9 147.8 L694.6 147.9 L694.2 147.9 L693.9 148.0 L693.5 148.1 L693.1 148.2 L692.7 148.3 L692.2 148.4 L691.8 148.4 L691.3 148.5 L690.9 148.6 L690.4 148.7 L689.9 148.7 L689.4 148.8 L689.0 148.8 L688.6 148.8 L688.2 148.8 L687.8 148.8 L687.3 148.7 L686.9 148.7 L686.4 148.6 L685.9 148.5 L685.5 148.3 L685.0 148.2 L684.5 148.0 L684.0 147.9 L683.5 147.7 L683.0 147.5 L682.5 147.3 L682.0 147.0Z" fill="#e2e2eb"/><path d="M685.6 143.9 L685.8 143.9 L686.1 144.0 L686.3 144.0 L686.5 144.1 L686.7 144.1 L686.8 144.2 L687.0 144.3 L687.2 144.3 L687.3 144.4 L687.5 144.5 L687.7 144.6 L687.9 144.8 L688.1 144.9 L688.3 145.1 L688.5 145.3 L688.8 145.5 L689.0 145.4 L689.0 145.0 L689.0 144.7 L688.9 144.3 L688.7 144.0 L688.5 143.7 L688.3 143.5 L688.0 143.3 L687.7 143.2 L687.4 143.1 L687.1 143.0 L686.8 143.0 L686.5 143.0 L686.2 143.1 L685.9 143.3 L685.7 143.4 L685.5 143.6Z" fill="#e2e2eb"/><path d="M684.8 145.6 L685.1 145.6 L685.4 145.6 L685.6 145.6 L685.8 145.6 L686.0 145.7 L686.2 145.8 L686.4 145.8 L686.5 145.9 L686.7 146.0 L686.8 146.1 L687.0 146.2 L687.2 146.3 L687.3 146.5 L687.5 146.7 L687.7 146.9 L687.9 147.1 L688.2 147.1 L688.3 146.7 L688.3 146.4 L688.2 146.0 L688.1 145.7 L687.9 145.4 L687.7 145.2 L687.4 144.9 L687.1 144.8 L686.8 144.6 L686.4 144.6 L686.1 144.5 L685.8 144.6 L685.4 144.7 L685.1 144.8 L684.9 145.1 L684.6 145.3Z" fill="#e2e2eb"/><path d="M696.6 140.0 L697.4 140.7 L698.0 141.4 L698.7 142.1 L699.2 142.7 L699.8 143.3 L700.2 144.0 L700.7 144.6 L701.0 145.2 L701.3 145.7 L701.6 146.3 L701.8 146.8 L702.0 147.3 L702.1 147.8 L702.2 148.3 L702.2 148.8 L702.2 149.3 L702.1 149.9 L702.0 150.5 L701.8 151.1 L701.6 151.6 L701.4 152.1 L701.1 152.6 L700.8 153.1 L700.5 153.6 L700.1 154.0 L699.7 154.5 L699.3 154.9 L698.8 155.3 L698.3 155.7 L697.8 156.1 L697.2 156.4 L696.6 156.7 L696.8 157.0 L697.4 156.8 L698.1 156.6 L698.7 156.3 L699.3 156.0 L699.8 155.6 L700.4 155.2 L700.9 154.8 L701.4 154.3 L701.8 153.8 L702.2 153.3 L702.5 152.7 L702.8 152.1 L703.1 151.5 L703.3 150.8 L703.5 150.1 L703.5 149.4 L703.6 148.8 L703.5 148.2 L703.5 147.6 L703.3 147.0 L703.1 146.3 L702.8 145.7 L702.5 145.1 L702.1 144.5 L701.7 143.8 L701.1 143.2 L700.6 142.6 L699.9 142.0 L699.3 141.4 L698.5 140.9 L697.7 140.3 L696.8 139.7Z" fill="#e2e2eb"/><path d="M708.0 140.0 L708.7 140.6 L709.2 141.3 L709.8 141.9 L710.2 142.6 L710.7 143.2 L711.1 143.8 L711.4 144.4 L711.7 145.0 L712.0 145.6 L712.2 146.2 L712.4 146.8 L712.6 147.3 L712.7 147.8 L712.8 148.4 L712.8 148.9 L712.8 149.3 L712.8 150.0 L712.8 150.6 L712.7 151.2 L712.6 151.8 L712.5 152.4 L712.4 152.9 L712.2 153.4 L712.0 153.9 L711.8 154.4 L711.6 154.9 L711.4 155.3 L711.2 155.7 L710.9 156.1 L710.7 156.5 L710.4 156.9 L710.1 157.3 L704.7 164.5 L699.4 171.8 L699.7 172.0 L705.6 165.1 L711.2 158.1 L711.5 157.8 L711.8 157.3 L712.1 156.9 L712.4 156.4 L712.7 156.0 L712.9 155.5 L713.1 154.9 L713.3 154.4 L713.5 153.8 L713.7 153.2 L713.8 152.6 L713.9 152.0 L714.0 151.4 L714.0 150.7 L714.1 150.0 L714.1 149.3 L714.0 148.8 L714.0 148.2 L713.8 147.6 L713.7 147.0 L713.5 146.4 L713.2 145.8 L712.9 145.2 L712.6 144.6 L712.2 144.0 L711.8 143.4 L711.3 142.8 L710.8 142.1 L710.2 141.5 L709.6 140.9 L708.9 140.4 L708.3 139.7Z" fill="#e2e2eb"/><path d="M714.2 140.0 L714.8 140.8 L715.4 141.7 L715.9 142.6 L716.4 143.4 L716.9 144.2 L717.4 145.0 L717.8 145.8 L718.2 146.5 L718.5 147.2 L718.8 147.9 L719.1 148.6 L719.3 149.2 L719.5 149.8 L719.6 150.4 L719.7 151.0 L719.8 151.6 L719.8 152.1 L719.8 152.6 L719.8 153.0 L719.7 153.5 L719.7 153.9 L719.6 154.3 L719.4 154.8 L719.3 155.2 L719.2 155.6 L719.0 156.0 L718.8 156.3 L718.7 156.7 L718.5 157.1 L718.3 157.5 L718.1 157.8 L717.9 158.2 L713.6 166.1 L709.5 174.2 L709.8 174.3 L714.6 166.7 L719.1 158.9 L719.3 158.5 L719.5 158.1 L719.7 157.7 L719.9 157.3 L720.1 156.9 L720.3 156.5 L720.5 156.1 L720.6 155.6 L720.8 155.1 L720.9 154.7 L721.0 154.2 L721.1 153.7 L721.1 153.1 L721.1 152.6 L721.1 152.1 L721.1 151.5 L721.0 150.9 L720.9 150.2 L720.7 149.5 L720.4 148.8 L720.2 148.1 L719.8 147.4 L719.5 146.7 L719.1 146.0 L718.6 145.3 L718.1 144.5 L717.6 143.8 L717.1 143.0 L716.5 142.2 L715.8 141.4 L715.1 140.6 L714.4 139.8Z" fill="#e2e2eb"/><path d="M722.0 139.9 L722.2 140.6 L722.4 141.2 L722.6 141.9 L722.8 142.5 L723.0 143.2 L723.2 143.8 L723.4 144.4 L723.6 145.0 L723.8 145.6 L723.9 146.2 L724.1 146.8 L724.3 147.3 L724.4 147.9 L724.6 148.4 L724.7 149.0 L724.8 149.5 L725.0 150.2 L725.2 150.8 L725.4 151.4 L725.6 152.0 L725.9 152.6 L726.1 153.1 L726.4 153.6 L726.6 154.1 L726.9 154.5 L727.2 154.9 L727.5 155.3 L727.8 155.7 L728.1 156.0 L728.4 156.4 L728.7 156.7 L729.0 157.0 L729.2 156.8 L728.9 156.5 L728.7 156.1 L728.5 155.7 L728.3 155.3 L728.1 154.9 L727.9 154.5 L727.7 154.1 L727.5 153.6 L727.3 153.2 L727.1 152.7 L726.9 152.2 L726.7 151.6 L726.6 151.1 L726.4 150.5 L726.2 149.8 L726.1 149.2 L726.0 148.7 L725.8 148.1 L725.7 147.5 L725.5 147.0 L725.3 146.4 L725.1 145.8 L724.9 145.2 L724.6 144.6 L724.4 144.0 L724.1 143.4 L723.8 142.8 L723.5 142.2 L723.2 141.6 L722.9 141.0 L722.5 140.4 L722.2 139.8Z" fill="#e2e2eb"/><path d="M676.4 175.2 L673.4 166.7 L670.2 158.3 L670.0 157.9 L669.8 157.5 L669.7 157.1 L669.6 156.7 L669.5 156.4 L669.5 156.0 L669.5 155.7 L669.5 155.4 L669.5 155.1 L669.6 154.9 L669.6 154.6 L669.7 154.4 L669.8 154.2 L670.0 154.0 L670.1 153.8 L670.2 153.6 L670.6 153.4 L671.0 153.2 L671.4 153.0 L671.8 152.8 L672.3 152.6 L672.7 152.5 L673.2 152.4 L673.7 152.2 L674.2 152.1 L674.7 152.0 L675.2 152.0 L675.7 151.9 L676.2 151.8 L676.7 151.8 L677.2 151.7 L677.7 151.7 L677.7 151.4 L677.2 151.4 L676.7 151.4 L676.2 151.4 L675.6 151.4 L675.1 151.4 L674.6 151.4 L674.1 151.5 L673.6 151.5 L673.1 151.6 L672.5 151.7 L672.0 151.9 L671.6 152.0 L671.1 152.2 L670.6 152.4 L670.1 152.6 L669.6 152.9 L669.4 153.1 L669.1 153.4 L669.0 153.7 L668.8 154.0 L668.7 154.3 L668.5 154.6 L668.5 155.0 L668.4 155.3 L668.4 155.7 L668.4 156.1 L668.4 156.5 L668.5 156.9 L668.6 157.4 L668.8 157.8 L668.9 158.3 L669.1 158.8 L672.5 167.1 L676.1 175.4Z" fill="#e2e2eb"/><path d="M729.2 139.9 L729.3 140.8 L729.5 141.7 L729.6 142.5 L729.7 143.4 L729.9 144.2 L730.0 145.1 L730.2 145.9 L730.4 146.7 L730.6 147.4 L730.9 148.2 L731.1 149.0 L731.4 149.7 L731.7 150.4 L732.0 151.1 L732.3 151.8 L732.7 152.5 L733.1 153.0 L733.5 153.6 L733.9 154.1 L734.2 154.5 L734.6 155.0 L735.0 155.5 L735.4 155.9 L735.8 156.3 L736.2 156.7 L736.5 157.1 L736.9 157.5 L737.3 157.9 L737.7 158.2 L738.0 158.5 L738.3 158.8 L738.7 159.1 L745.6 164.8 L752.6 170.4 L752.9 170.2 L746.3 164.0 L739.6 158.0 L739.3 157.7 L738.9 157.5 L738.6 157.2 L738.3 156.8 L737.9 156.5 L737.5 156.1 L737.2 155.8 L736.8 155.4 L736.4 155.0 L736.0 154.6 L735.7 154.1 L735.3 153.7 L734.9 153.2 L734.5 152.7 L734.2 152.3 L733.8 151.8 L733.5 151.2 L733.1 150.6 L732.8 149.9 L732.5 149.2 L732.2 148.6 L731.9 147.8 L731.6 147.1 L731.4 146.4 L731.1 145.6 L730.9 144.8 L730.6 144.0 L730.4 143.2 L730.2 142.4 L729.9 141.6 L729.7 140.7 L729.5 139.8Z" fill="#e2e2eb"/><path d="M732.8 139.9 L733.0 140.8 L733.2 141.7 L733.4 142.5 L733.5 143.4 L733.7 144.2 L733.9 145.1 L734.1 145.9 L734.4 146.7 L734.6 147.5 L734.9 148.3 L735.2 149.1 L735.5 149.9 L735.8 150.7 L736.1 151.5 L736.5 152.2 L737.0 153.0 L737.4 153.6 L737.8 154.1 L738.2 154.6 L738.7 155.0 L739.1 155.5 L739.5 155.9 L739.9 156.3 L740.3 156.6 L740.7 157.0 L741.1 157.3 L741.5 157.6 L741.8 157.9 L742.2 158.2 L742.5 158.5 L742.9 158.8 L743.2 159.0 L750.2 164.7 L757.4 170.1 L757.6 169.9 L750.8 163.9 L744.0 158.1 L743.7 157.8 L743.3 157.5 L743.0 157.2 L742.6 156.9 L742.3 156.6 L741.9 156.3 L741.5 156.0 L741.2 155.7 L740.8 155.3 L740.4 154.9 L740.0 154.6 L739.6 154.2 L739.2 153.7 L738.7 153.3 L738.3 152.8 L737.9 152.4 L737.6 151.7 L737.2 151.0 L736.8 150.2 L736.5 149.5 L736.1 148.7 L735.8 148.0 L735.5 147.2 L735.2 146.5 L734.9 145.7 L734.7 144.9 L734.4 144.1 L734.1 143.2 L733.9 142.4 L733.6 141.6 L733.3 140.7 L733.1 139.8Z" fill="#e2e2eb"/><path d="M745.4 139.9 L745.4 140.7 L745.3 141.6 L745.3 142.5 L745.4 143.4 L745.4 144.2 L745.5 145.0 L745.6 145.9 L745.8 146.7 L745.9 147.5 L746.1 148.3 L746.4 149.1 L746.6 149.9 L746.9 150.7 L747.3 151.5 L747.6 152.3 L748.0 153.0 L748.4 153.6 L748.7 154.1 L749.0 154.5 L749.3 155.0 L749.6 155.4 L749.9 155.8 L750.2 156.2 L750.5 156.6 L750.9 157.0 L751.2 157.3 L751.5 157.6 L751.7 157.9 L752.0 158.2 L752.3 158.5 L752.6 158.8 L752.9 159.0 L759.3 165.3 L766.0 171.4 L766.2 171.1 L760.1 164.5 L753.8 158.1 L753.6 157.8 L753.3 157.5 L753.0 157.2 L752.8 157.0 L752.5 156.7 L752.2 156.3 L751.9 156.0 L751.6 155.7 L751.3 155.3 L751.0 155.0 L750.7 154.6 L750.4 154.2 L750.1 153.8 L749.8 153.3 L749.5 152.8 L749.2 152.4 L748.8 151.7 L748.4 150.9 L748.1 150.2 L747.7 149.5 L747.4 148.8 L747.2 148.0 L746.9 147.2 L746.7 146.5 L746.5 145.7 L746.3 144.9 L746.2 144.1 L746.0 143.3 L745.9 142.4 L745.8 141.6 L745.7 140.7 L745.7 139.9Z" fill="#e2e2eb"/><path d="M749.8 139.8 L749.6 140.4 L749.3 141.0 L749.1 141.7 L748.9 142.3 L748.7 142.9 L748.6 143.6 L748.6 144.2 L748.6 144.8 L748.6 145.5 L748.7 146.1 L748.8 146.7 L749.0 147.4 L749.3 148.0 L749.6 148.6 L749.9 149.2 L750.3 149.8 L750.8 150.3 L751.3 150.7 L751.9 151.2 L752.4 151.6 L753.1 151.9 L753.7 152.2 L754.4 152.5 L755.0 152.8 L755.8 153.0 L756.5 153.2 L757.2 153.3 L758.0 153.4 L758.8 153.5 L759.6 153.6 L760.4 153.6 L761.2 153.6 L761.9 153.5 L762.6 153.3 L763.2 153.1 L763.7 152.9 L764.2 152.6 L764.7 152.3 L765.1 152.0 L765.5 151.6 L765.8 151.2 L766.1 150.8 L766.3 150.4 L766.5 150.0 L766.7 149.6 L766.7 149.1 L766.8 148.7 L766.9 148.3 L766.6 148.2 L766.5 148.6 L766.4 149.0 L766.2 149.4 L766.0 149.8 L765.8 150.1 L765.5 150.4 L765.2 150.7 L764.9 151.0 L764.6 151.3 L764.2 151.5 L763.8 151.8 L763.3 152.0 L762.8 152.1 L762.3 152.2 L761.7 152.3 L761.1 152.4 L760.4 152.3 L759.7 152.3 L758.9 152.2 L758.2 152.1 L757.5 152.0 L756.8 151.8 L756.1 151.6 L755.5 151.4 L754.9 151.2 L754.3 151.0 L753.7 150.7 L753.2 150.4 L752.7 150.1 L752.2 149.7 L751.7 149.3 L751.3 148.9 L751.0 148.4 L750.6 148.0 L750.4 147.5 L750.1 146.9 L749.9 146.4 L749.8 145.9 L749.6 145.3 L749.6 144.8 L749.5 144.2 L749.5 143.6 L749.5 143.0 L749.6 142.4 L749.7 141.8 L749.8 141.2 L749.9 140.5 L750.2 139.9Z" fill="#e2e2eb"/><path d="M754.0 139.8 L753.9 140.3 L753.7 140.9 L753.5 141.4 L753.5 141.9 L753.4 142.5 L753.4 143.0 L753.5 143.6 L753.6 144.1 L753.7 144.6 L753.8 145.1 L754.0 145.7 L754.3 146.2 L754.5 146.6 L754.8 147.1 L755.1 147.6 L755.4 148.0 L755.6 148.3 L755.9 148.5 L756.1 148.8 L756.3 149.1 L756.5 149.3 L756.6 149.5 L756.8 149.7 L757.0 149.9 L757.1 150.1 L757.3 150.3 L757.4 150.4 L757.5 150.6 L757.6 150.7 L757.6 150.8 L757.7 150.9 L757.7 151.0 L758.0 151.0 L757.9 150.9 L757.9 150.7 L757.9 150.6 L757.8 150.4 L757.8 150.2 L757.7 150.0 L757.6 149.8 L757.5 149.6 L757.4 149.4 L757.3 149.1 L757.2 148.8 L757.0 148.6 L756.8 148.3 L756.7 148.0 L756.5 147.7 L756.3 147.4 L756.0 146.9 L755.8 146.5 L755.5 146.1 L755.3 145.6 L755.1 145.2 L754.9 144.8 L754.8 144.3 L754.6 143.8 L754.5 143.4 L754.4 142.9 L754.3 142.4 L754.3 142.0 L754.2 141.5 L754.2 140.9 L754.2 140.4 L754.3 139.9Z" fill="#e2e2eb"/><path d="M763.0 140.0 L763.2 140.4 L763.4 140.8 L763.7 141.2 L763.9 141.6 L764.1 142.0 L764.3 142.4 L764.5 142.8 L764.7 143.2 L764.9 143.6 L765.2 144.0 L765.4 144.4 L765.6 144.8 L765.8 145.2 L766.1 145.7 L766.3 146.1 L766.6 146.6 L766.9 146.5 L766.8 146.0 L766.8 145.4 L766.6 144.9 L766.5 144.4 L766.4 143.9 L766.2 143.5 L766.0 143.0 L765.8 142.6 L765.5 142.2 L765.2 141.8 L765.0 141.4 L764.7 141.1 L764.3 140.7 L764.0 140.4 L763.6 140.1 L763.2 139.8Z" fill="#e2e2eb"/><path d="M770.2 139.9 L770.4 140.4 L770.5 141.0 L770.6 141.5 L770.7 142.0 L770.8 142.5 L770.9 142.9 L771.0 143.4 L771.1 143.9 L771.1 144.3 L771.2 144.8 L771.2 145.2 L771.2 145.7 L771.2 146.2 L771.2 146.6 L771.2 147.1 L771.1 147.6 L771.1 148.2 L771.0 148.8 L770.9 149.3 L770.9 149.9 L770.8 150.4 L770.7 150.9 L770.6 151.4 L770.5 151.8 L770.4 152.3 L770.2 152.8 L770.1 153.2 L770.0 153.7 L769.8 154.1 L769.7 154.5 L769.6 155.0 L769.4 155.4 L769.7 155.6 L769.9 155.1 L770.2 154.7 L770.4 154.3 L770.6 153.9 L770.9 153.5 L771.1 153.1 L771.3 152.6 L771.5 152.1 L771.6 151.7 L771.8 151.2 L771.9 150.6 L772.0 150.1 L772.2 149.5 L772.3 149.0 L772.3 148.4 L772.4 147.7 L772.4 147.2 L772.5 146.7 L772.5 146.1 L772.4 145.6 L772.4 145.1 L772.3 144.6 L772.2 144.1 L772.1 143.7 L772.0 143.2 L771.8 142.7 L771.7 142.2 L771.5 141.7 L771.3 141.3 L771.0 140.8 L770.7 140.3 L770.5 139.8Z" fill="#e2e2eb"/><path d="M775.5 140.0 L776.1 140.6 L776.6 141.3 L777.0 141.9 L777.4 142.6 L777.8 143.2 L778.2 143.8 L778.5 144.5 L778.8 145.1 L779.0 145.7 L779.2 146.3 L779.4 146.9 L779.6 147.5 L779.7 148.1 L779.7 148.7 L779.8 149.3 L779.8 149.9 L779.8 150.5 L779.7 151.1 L779.6 151.6 L779.6 152.2 L779.5 152.8 L779.3 153.3 L779.2 153.8 L779.1 154.3 L778.9 154.9 L778.7 155.4 L778.5 155.9 L778.3 156.4 L778.2 156.8 L778.0 157.3 L777.7 157.8 L777.5 158.3 L774.1 166.6 L770.8 175.0 L771.1 175.1 L775.1 167.0 L778.8 158.8 L779.0 158.4 L779.2 157.9 L779.5 157.4 L779.7 156.9 L779.8 156.3 L780.0 155.8 L780.2 155.3 L780.4 154.7 L780.5 154.2 L780.7 153.6 L780.8 153.0 L780.9 152.4 L781.0 151.8 L781.0 151.2 L781.0 150.5 L781.0 149.9 L781.0 149.2 L780.9 148.6 L780.8 147.9 L780.6 147.3 L780.4 146.6 L780.2 146.0 L779.9 145.3 L779.6 144.7 L779.3 144.0 L778.9 143.4 L778.4 142.8 L778.0 142.2 L777.5 141.6 L776.9 141.0 L776.4 140.4 L775.8 139.7Z" fill="#e2e2eb"/><path d="M779.4 155.6 L779.9 155.4 L780.3 155.1 L780.8 154.9 L781.2 154.6 L781.6 154.4 L782.1 154.1 L782.4 153.8 L782.8 153.5 L783.2 153.2 L783.5 152.9 L783.9 152.6 L784.2 152.3 L784.6 152.0 L784.9 151.7 L785.2 151.4 L785.5 151.1 L785.4 150.9 L784.9 151.0 L784.5 151.2 L784.1 151.4 L783.7 151.6 L783.3 151.8 L782.9 152.0 L782.5 152.3 L782.1 152.6 L781.7 152.9 L781.4 153.2 L781.0 153.5 L780.6 153.8 L780.3 154.2 L779.9 154.6 L779.6 155.0 L779.2 155.4Z" fill="#e2e2eb"/><path d="M769.6 170.9 L776.4 165.1 L783.1 159.0 L783.9 158.2 L784.8 157.4 L785.6 156.7 L786.5 155.9 L787.3 155.0 L788.2 154.2 L789.1 153.4 L789.9 152.5 L790.8 151.6 L791.7 150.7 L792.6 149.8 L793.4 148.8 L794.3 147.8 L795.2 146.8 L796.1 145.8 L797.0 144.7 L796.8 144.5 L795.8 145.5 L794.8 146.4 L793.8 147.4 L792.9 148.3 L791.9 149.1 L791.0 150.0 L790.1 150.9 L789.2 151.7 L788.3 152.5 L787.4 153.3 L786.5 154.1 L785.6 154.9 L784.8 155.7 L783.9 156.5 L783.0 157.3 L782.2 158.1 L775.7 164.3 L769.3 170.7Z" fill="#e2e2eb"/><path d="M774.5 169.1 L782.0 164.1 L789.4 159.0 L789.9 158.6 L790.4 158.3 L791.0 157.9 L791.5 157.5 L792.0 157.1 L792.5 156.7 L793.1 156.3 L793.6 155.9 L794.1 155.4 L794.6 155.0 L795.1 154.6 L795.6 154.1 L796.1 153.7 L796.6 153.2 L797.1 152.7 L797.5 152.3 L803.9 145.9 L810.2 139.4 L809.9 139.2 L803.3 145.3 L796.8 151.5 L796.3 151.9 L795.8 152.4 L795.3 152.8 L794.8 153.3 L794.3 153.7 L793.8 154.1 L793.3 154.5 L792.8 155.0 L792.3 155.4 L791.8 155.8 L791.3 156.2 L790.8 156.6 L790.3 157.0 L789.8 157.3 L789.3 157.7 L788.7 158.1 L781.5 163.4 L774.3 168.9Z" fill="#e2e2eb"/><ellipse cx="687.6" cy="143.7" rx="5" ry="3.5" stroke="#e3e3ec" stroke-width="1" fill="none"/></g></svg>
<div class="a" style="left:659px;top:158px;width:141px;height:31px;background:#2c2a2d;"></div>
<div class="a" style="left:662px;top:163px;width:51px;height:9px;border:1px solid #4a484b;border-radius:1.5px;background:#353336"></div>
<div class="a" style="left:663px;top:164px;width:49px;height:7px;background:#121113;clip-path:polygon(20% 70%,60% 15%,100% 15%,100% 100%,20% 100%)"></div>
<div class="t" style="left:664px;top:165.02px;font-size:6.5px;color:#cfcdd0;">81.3</div>
<div class="a" style="left:689.3px;top:160.5px;width:2.6px;height:12.5px;background:#5e5c5f;border-radius:1.3px"></div>
<div class="a" style="left:662px;top:177px;width:51px;height:9px;border:1px solid #4a484b;border-radius:1.5px;background:#353336"></div>
<div class="a" style="left:663px;top:178px;width:49px;height:7px;background:#121113;clip-path:polygon(40% 100%,60% 20%,80% 20%,100% 60%,100% 100%)"></div>
<div class="t" style="left:664px;top:179.02px;font-size:6.5px;color:#cfcdd0;">0.0</div>
<div class="a" style="left:685.8px;top:174.5px;width:2.6px;height:12.5px;background:#5e5c5f;border-radius:1.3px"></div>
<svg class="a" style="left:717px;top:161px;" width="13" height="13" viewBox="0 0 13 13" fill="none" stroke="#a9a7aa" stroke-width="0.85"><circle cx="6.5" cy="6.5" r="5"/><path d="M4 6.5 H9"/></svg>
<svg class="a" style="left:734px;top:161px;" width="13" height="13" viewBox="0 0 13 13" fill="none" stroke="#a9a7aa" stroke-width="0.85"><circle cx="6.5" cy="6.5" r="5"/><path d="M4 6.5 H9 M6.5 4 V9"/></svg>
<svg class="a" style="left:750px;top:161px;" width="13" height="13" viewBox="0 0 13 13" fill="none" stroke="#a9a7aa" stroke-width="0.85"><circle cx="6.5" cy="6.5" r="5"/><rect x="4.5" y="4.5" width="4" height="4" fill="#b8b6b9" stroke="none"/></svg>
<div class="a" style="left:767px;top:162px;width:1px;height:24px;background:#454346;"></div>
<svg class="a" style="left:769px;top:160px;" width="13" height="13" viewBox="0 0 13 13" fill="none" stroke="#a9a7aa" stroke-width="0.85"><rect x="1.5" y="1.5" width="6" height="6" rx="1"/><rect x="5.5" y="5.5" width="6" height="6" rx="1"/></svg>
<svg class="a" style="left:785px;top:160px;" width="13" height="13" viewBox="0 0 13 13" fill="none" stroke="#a9a7aa" stroke-width="0.85"><rect x="1.5" y="1.5" width="10" height="10" rx="1.5"/><path d="M4 9 L9 4 M4 6.5 V9 H6.5 M9 6.5 V4 H6.5" stroke-width="0.8"/></svg>
<svg class="a" style="left:717px;top:175px;" width="13" height="13" viewBox="0 0 13 13" fill="none" stroke="#a9a7aa" stroke-width="0.85"><path d="M4 4 C6 2 9.5 2.5 10.8 5 C12 8 10 11 6.5 11 C4 11 2.5 9.5 2.2 7.5"/><path d="M2 4 L4.5 4.5 L4 2" stroke-width="0.9"/></svg>
<svg class="a" style="left:734px;top:175px;" width="13" height="13" viewBox="0 0 13 13" fill="none" stroke="#a9a7aa" stroke-width="0.85"><path d="M9 4 C7 2 3.5 2.5 2.2 5 C1 8 3 11 6.5 11 C9 11 10.5 9.5 10.8 7.5"/><path d="M11 4 L8.5 4.5 L9 2" stroke-width="0.9"/></svg>
<svg class="a" style="left:750px;top:175px;" width="13" height="13" viewBox="0 0 13 13" fill="none" stroke="#a9a7aa" stroke-width="0.85"><circle cx="6.5" cy="6.5" r="5"/><path d="M6.5 2 V6.5" stroke-width="1.2"/></svg>
<svg class="a" style="left:769px;top:175px;" width="13" height="13" viewBox="0 0 13 13" fill="none" stroke="#a9a7aa" stroke-width="0.85"><path d="M6.5 1 V12" stroke-dasharray="1 1"/><path d="M1.5 3.5 L5 6.5 L1.5 9.5 Z M11.5 3.5 L8 6.5 L11.5 9.5 Z" fill="#b8b6b9" stroke="none"/></svg>
<svg class="a" style="left:785px;top:175px;" width="13" height="13" viewBox="0 0 13 13" fill="none" stroke="#a9a7aa" stroke-width="0.85"><path d="M1 6.5 H12" stroke-dasharray="1 1"/><path d="M3.5 1.5 L6.5 5 L9.5 1.5 Z M3.5 11.5 L6.5 8 L9.5 11.5 Z" fill="#b8b6b9" stroke="none"/></svg>
<svg class="a" style="left:663px;top:192px;" width="7" height="9" viewBox="0 0 7 9" fill="none" stroke="#cfcdd0" stroke-width="1"><path d="M1.5 2.5h3.5M1.5 4.5h3.5M1.5 6.5h3.5" stroke="#5c5a5d" stroke-width="0.7"/></svg>
<div class="a" style="left:673px;top:193px;width:33px;height:10px;background:#2f2d30;"></div>
<svg class="a" style="left:675px;top:193px;" width="9" height="10" viewBox="0 0 9 10" fill="none" stroke="#cfcdd0" stroke-width="1"><path d="M4.5 1 L8 3 V7 L4.5 9 L1 7 V3 Z M1 3 L4.5 5 L8 3 M4.5 5 V9" stroke-width="0.8"/></svg>
<div class="t" style="left:689px;top:194.80px;font-size:6.3px;color:#d2d0d3;">Layer</div>
<div class="a" style="left:707px;top:193px;width:16px;height:10px;background:#2a282b;"></div>
<svg class="a" style="left:709px;top:194px;" width="12" height="8" viewBox="0 0 12 8" fill="none" stroke="#cfcdd0" stroke-width="1"><path d="M1 7 L4 2 H8 L11 7" stroke="#6e6c6f" stroke-width="0.8"/></svg>
<div class="a" style="left:725px;top:193px;width:16px;height:10px;background:#2a282b;"></div>
<svg class="a" style="left:727px;top:194px;" width="12" height="8" viewBox="0 0 12 8" fill="none" stroke="#cfcdd0" stroke-width="1"><rect x="1.5" y="1" width="9" height="6" stroke="#6e6c6f" stroke-width="0.8"/></svg>
<div class="a" style="left:659px;top:203px;width:141px;height:49px;background:#2c2a2d;"></div>
<div class="a" style="left:660.5px;top:205px;width:22.5px;height:14.5px;background:#3a383b;border-radius:2px;border:1px solid #4a484b"></div>
<svg class="a" style="left:662px;top:206px;" width="20" height="12" viewBox="0 0 20 12" fill="none" stroke="#cfcdd0" stroke-width="1"><rect x="2" y="2" width="8" height="8" rx="1.5"/><path d="M13 5 L15 3 L17 5 M13 7 L15 9 L17 7" stroke="#8a888b" stroke-width="0.8"/></svg>
<div class="a" style="left:685px;top:205px;width:45px;height:14.5px;background:#3a383b;border-radius:2px;border:1px solid #4a484b"></div>
<div class="t" style="left:692px;top:208.85px;font-size:6.8px;color:#d0ced1;">Normal</div>
<svg class="a" style="left:719px;top:206px;" width="10" height="12" viewBox="0 0 10 12" fill="none" stroke="#cfcdd0" stroke-width="1"><path d="M2 5 L5 2 L8 5 M2 7 L5 10 L8 7" stroke="#8a888b" stroke-width="0.8"/></svg>
<div class="a" style="left:734px;top:207px;width:3px;height:9px;background:#e8e6e9;"></div>
<div class="a" style="left:737px;top:208px;width:40px;height:7px;background:#878588;"></div>
<div class="a" style="left:734px;top:206px;width:3px;height:11px;background:#d8d6d9;border:1px solid #555"></div>
<div class="t" style="left:786px;top:208.85px;font-size:6.8px;color:#d0ced1;">14</div>
<svg class="a" style="left:793px;top:206px;" width="7" height="12" viewBox="0 0 7 12" fill="none" stroke="#cfcdd0" stroke-width="1"><path d="M1.5 5 L3.5 3 L5.5 5 M1.5 7 L3.5 9 L5.5 7" stroke="#8a888b" stroke-width="0.8"/></svg>
<svg class="a" style="left:661px;top:221px;" width="14" height="13" viewBox="0 0 14 13" fill="none" stroke="#a9a7aa" stroke-width="0.85"><rect x="2" y="2" width="7" height="7" fill="#8a888b" stroke="none"/><rect x="4.5" y="4.5" width="7" height="7" fill="#5a585b" stroke="#b8b6b9" stroke-width="0.7"/></svg>
<svg class="a" style="left:678px;top:221px;" width="14" height="13" viewBox="0 0 14 13" fill="none" stroke="#a9a7aa" stroke-width="0.85"><path d="M7 1 V12 M3 3 H11 M4 6 H10 M2 12 H12 M5 3 L4 12 M9 3 L10 12" stroke-width="0.9"/></svg>
<svg class="a" style="left:694px;top:221px;" width="14" height="13" viewBox="0 0 14 13" fill="none" stroke="#a9a7aa" stroke-width="0.85"><path d="M3 2 H8 V9 L10 11 M3 2 V9 H6 M8 8 L11 12" stroke-width="0.9"/></svg>
<svg class="a" style="left:711px;top:221px;" width="13" height="13" viewBox="0 0 13 13" fill="none" stroke="#a9a7aa" stroke-width="0.85"><rect x="3" y="6" width="7" height="6" fill="#b8b6b9" stroke="none"/><path d="M4.5 6 V4 C4.5 1.5 8.5 1.5 8.5 4 V6"/></svg>
<div class="a" style="left:726px;top:221px;width:17px;height:14px;background:#4a5573;border-radius:2px"></div>
<svg class="a" style="left:727px;top:221px;" width="15" height="14" viewBox="0 0 15 14" fill="none" stroke="#a9a7aa" stroke-width="0.85"><rect x="3" y="8" width="4" height="4" fill="#c8d0e8" stroke="none"/><rect x="9" y="2.5" width="3.5" height="3.5" fill="#c8d0e8" stroke="none"/><rect x="3.5" y="2.5" width="3" height="3" fill="none" stroke="#c8d0e8" stroke-width="0.8"/><path d="M6.5 5.5 L9 8.5 M6 8 L9 5" stroke="#c8d0e8" stroke-width="0.8"/><rect x="9" y="8.5" width="3" height="3" fill="none" stroke="#c8d0e8" stroke-width="0.8"/></svg>
<svg class="a" style="left:745px;top:221px;" width="20" height="13" viewBox="0 0 20 13" fill="none" stroke="#a9a7aa" stroke-width="0.85"><rect x="2" y="3" width="8" height="7" stroke="#5e5c5f"/><path d="M9 4 L13 8 L17 4 M9 9 L13 5 L17 9" stroke="#5e5c5f" stroke-width="0.9"/></svg>
<svg class="a" style="left:763px;top:221px;" width="20" height="13" viewBox="0 0 20 13" fill="none" stroke="#a9a7aa" stroke-width="0.85"><path d="M2 11 L9 3 V11 Z" stroke="#5e5c5f"/><path d="M10 4 L14 8 L18 4 M10 10 L14 6 L18 10" stroke="#5e5c5f" stroke-width="0.9"/></svg>
<div class="a" style="left:781px;top:220px;width:19px;height:16px;background:#3a383b;border-radius:2px;border:1px solid #4a484b"></div>
<svg class="a" style="left:782px;top:221px;" width="16" height="14" viewBox="0 0 16 14" fill="none" stroke="#a9a7aa" stroke-width="0.85"><rect x="2" y="2" width="6" height="6" fill="#3a8ee0" stroke="none"/><rect x="4.5" y="4.5" width="6" height="6" fill="#f0f0f0" stroke="none"/><path d="M12 5 L13.5 3.5 L15 5 M12 8 L13.5 9.5 L15 8" stroke="#8a888b" stroke-width="0.7"/></svg>
<svg class="a" style="left:671px;top:237px;" width="13" height="13" viewBox="0 0 13 13" fill="none" stroke="#a9a7aa" stroke-width="0.85"><rect x="1.5" y="1.5" width="8" height="9" rx="1"/><circle cx="10" cy="10.5" r="2" fill="#b8b6b9" stroke="#2c2a2d"/></svg>
<svg class="a" style="left:687px;top:237px;" width="13" height="13" viewBox="0 0 13 13" fill="none" stroke="#a9a7aa" stroke-width="0.85"><rect x="1.5" y="1.5" width="9" height="9" rx="1"/><circle cx="6" cy="6" r="2.5"/><circle cx="10" cy="10.5" r="2" fill="#b8b6b9" stroke="#2c2a2d"/></svg>
<svg class="a" style="left:703px;top:237px;" width="13" height="13" viewBox="0 0 13 13" fill="none" stroke="#a9a7aa" stroke-width="0.85"><path d="M1.5 3 H5 L6 4 H10.5 V10.5 H1.5 Z" fill="#b8b6b9" stroke="none"/><circle cx="10" cy="10.5" r="2" fill="#b8b6b9" stroke="#2c2a2d"/></svg>
<svg class="a" style="left:718px;top:237px;" width="13" height="13" viewBox="0 0 13 13" fill="none" stroke="#a9a7aa" stroke-width="0.85"><rect x="1.5" y="5" width="6" height="6" stroke="#5e5c5f"/><rect x="5" y="1.5" width="6" height="6" stroke="#5e5c5f"/></svg>
<svg class="a" style="left:734px;top:237px;" width="13" height="13" viewBox="0 0 13 13" fill="none" stroke="#a9a7aa" stroke-width="0.85"><rect x="1.5" y="5" width="6" height="6"/><rect x="5" y="1.5" width="6" height="6" fill="#2c2a2d"/></svg>
<svg class="a" style="left:752px;top:237px;" width="13" height="13" viewBox="0 0 13 13" fill="none" stroke="#a9a7aa" stroke-width="0.85"><rect x="1.5" y="1.5" width="10" height="10" rx="1.5" fill="#b8b6b9" stroke="none"/><circle cx="6.5" cy="6.5" r="2.8" fill="#2c2a2d"/></svg>
<svg class="a" style="left:769px;top:237px;" width="13" height="13" viewBox="0 0 13 13" fill="none" stroke="#a9a7aa" stroke-width="0.85"><rect x="1.5" y="3" width="10" height="8" rx="1" stroke="#5e5c5f"/><rect x="6" y="5.5" width="4" height="4" stroke="#5e5c5f"/></svg>
<svg class="a" style="left:786px;top:237px;" width="13" height="13" viewBox="0 0 13 13" fill="none" stroke="#a9a7aa" stroke-width="0.85"><path d="M2.5 3 H10.5 M5 3 V2 H8 V3 M3.5 3.5 V11.5 H9.5 V3.5 M5.5 5 V10 M7.5 5 V10"/></svg>
<div class="a" style="left:659px;top:252px;width:141px;height:331px;background:#242225;"></div>
<div class="a" style="left:659px;top:252px;width:137px;height:47px;background:#232124;"></div>
<div class="a" style="left:675px;top:252px;width:1px;height:47px;background:#1a181b;"></div>
<div class="a" style="left:688px;top:252px;width:1px;height:47px;background:#1a181b;"></div>
<div class="a" style="left:659px;top:275px;width:137px;height:1px;background:#1a181b;"></div>
<div class="a" style="left:659px;top:299px;width:137px;height:1px;background:#1a181b;"></div>
<div class="a" style="left:689px;top:252px;width:107px;height:23px;background:#4a5573;"></div>
<svg class="a" style="left:661px;top:259px;" width="14" height="10" viewBox="0 0 14 10" fill="none" stroke="#cfcdd0" stroke-width="1"><path d="M1.5 5 C4 1 10 1 12.5 5 C10 9 4 9 1.5 5 Z" fill="#cfcdd0" stroke="none"/><circle cx="7" cy="4.8" r="1.8" fill="#232124"/></svg>
<svg class="a" style="left:661px;top:283px;" width="14" height="10" viewBox="0 0 14 10" fill="none" stroke="#cfcdd0" stroke-width="1"><path d="M1.5 5 C4 1 10 1 12.5 5 C10 9 4 9 1.5 5 Z" fill="#cfcdd0" stroke="none"/><circle cx="7" cy="4.8" r="1.8" fill="#232124"/></svg>
<svg class="a" style="left:676px;top:258px;" width="12" height="11" viewBox="0 0 12 11" fill="none" stroke="#cfcdd0" stroke-width="1"><path d="M2 9.5 H10 M2.5 9 L8.5 3" stroke-width="0.9"/></svg>
<svg class="a" style="left:677px;top:282px;" width="10" height="10" viewBox="0 0 10 10" fill="none" stroke="#cfcdd0" stroke-width="1"><circle cx="5" cy="5" r="3" stroke="#3a383b" stroke-width="0.8"/></svg>
<div class="a" style="left:692px;top:254px;width:20px;height:20px;border:1px dotted #2a2d3a;background-color:#f4f4f6;background-image:linear-gradient(45deg,#cfd0da 25%,transparent 25%,transparent 75%,#cfd0da 75%),linear-gradient(45deg,#cfd0da 25%,transparent 25%,transparent 75%,#cfd0da 75%);background-size:4px 4px;background-position:0 0,2px 2px"></div>
<div class="t" style="left:717px;top:255.90px;font-size:6.3px;color:#d8dcea;">14 % Normal</div>
<div class="t" style="left:717px;top:267.10px;font-size:6.3px;color:#d8dcea;">Layer 1</div>
<svg class="a" style="left:774px;top:256px;" width="12" height="11" viewBox="0 0 12 11" fill="none" stroke="#cfcdd0" stroke-width="1"><path d="M2 2 L6 6 L10 2 M6 6 L2 10 M6 6 L10 10" stroke="#dde4f5" stroke-width="0.8"/><rect x="1" y="7" width="4" height="4" fill="#dde4f5" stroke="none"/><circle cx="10" cy="2.5" r="1.3" fill="#dde4f5" stroke="none"/></svg>
<svg class="a" style="left:787px;top:261px;" width="8" height="9" viewBox="0 0 8 9" fill="none" stroke="#cfcdd0" stroke-width="1"><path d="M1.5 2.5h4M1.5 4.5h4M1.5 6.5h4" stroke="#8a8ca0" stroke-width="0.6"/></svg>
<svg class="a" style="left:787px;top:286px;" width="8" height="9" viewBox="0 0 8 9" fill="none" stroke="#cfcdd0" stroke-width="1"><path d="M1.5 2.5h4M1.5 4.5h4M1.5 6.5h4" stroke="#4a484b" stroke-width="0.6"/></svg>
<div class="a" style="left:692px;top:278px;width:20px;height:19px;background:#fbfbfb;"></div>
<div class="a" style="left:719px;top:278px;width:10px;height:11px;background:#f0f0f0;border-radius:1px"></div>
<svg class="a" style="left:719px;top:278px;" width="10" height="11" viewBox="0 0 10 11" fill="none" stroke="#cfcdd0" stroke-width="1"><path d="M3.5 2 V7.5 H6.5" stroke="#222" stroke-width="1"/></svg>
<div class="t" style="left:717px;top:291.50px;font-size:6.3px;color:#d8d6d9;">Paper</div>
<div class="a" style="left:796px;top:299px;width:4px;height:284px;background:#262427;"></div>
<div class="a" style="left:150px;top:542px;width:500px;height:41px;background:#232124;"></div>
<div class="a" style="left:150px;top:542px;width:500px;height:13px;background:#232124;"></div>
<div class="a" style="left:162px;top:555px;width:488px;height:15px;background:#38363a;"></div>
<div class="a" style="left:200px;top:560.5px;width:417px;height:6.5px;background:#29272a;clip-path:polygon(0 85%,100% 0,100% 100%,0 100%)"></div>
<svg class="a" style="left:165px;top:546px;" width="7" height="9" viewBox="0 0 7 9" fill="none" stroke="#cfcdd0" stroke-width="1"><path d="M1.5 2.5h3.5M1.5 4.5h3.5M1.5 6.5h3.5" stroke="#5c5a5d" stroke-width="0.7"/></svg>
<div class="a" style="left:176px;top:547px;width:46px;height:9px;background:#2f2d30;"></div>
<svg class="a" style="left:178px;top:546px;" width="13" height="11" viewBox="0 0 13 11" fill="none" stroke="#cfcdd0" stroke-width="1"><path d="M1 9 L8 2 L10 4 L3 10 Z" fill="#cfcdd0" stroke="none"/><circle cx="8.5" cy="7.5" r="3" fill="#8a888b" stroke="none"/></svg>
<div class="t" style="left:192px;top:549.80px;font-size:6.3px;color:#d2d0d3;">Brush Size</div>
<div class="a" style="left:150px;top:555px;width:12px;height:28px;background:#1f1d20;"></div>
<svg class="a" style="left:151px;top:558px;" width="10" height="7" viewBox="0 0 10 7" fill="none" stroke="#cfcdd0" stroke-width="1"><path d="M2 2 L5 5 L8 2" stroke="#8a888b" stroke-width="0.8"/></svg>
<svg class="a" style="left:151px;top:573px;" width="10" height="9" viewBox="0 0 10 9" fill="none" stroke="#cfcdd0" stroke-width="1"><path d="M2 1.5 L5 4.5 L8 1.5 M2 4.5 L5 7.5 L8 4.5" stroke="#8a888b" stroke-width="0.8"/></svg>
<div class="a" style="left:162px;top:570px;width:488px;height:13px;background:#1c1a1d;"></div>
<div class="a" style="left:163px;top:570.5px;width:18.0px;height:12.5px;background:#262427;"></div>
<div class="a" style="left:182.0px;top:570.5px;width:16.9px;height:12.5px;background:#262427;"></div>
<div class="a" style="left:189.65px;top:579.20px;width:0.6px;height:0.6px;border-radius:50%;background:#858386"></div>
<div class="a" style="left:199.9px;top:570.5px;width:16.9px;height:12.5px;background:#262427;"></div>
<div class="a" style="left:207.35px;top:579.00px;width:1px;height:1px;border-radius:50%;background:#858386"></div>
<div class="a" style="left:217.8px;top:570.5px;width:16.9px;height:12.5px;background:#262427;"></div>
<div class="a" style="left:225.25px;top:579.00px;width:1px;height:1px;border-radius:50%;background:#858386"></div>
<div class="a" style="left:235.7px;top:570.5px;width:16.9px;height:12.5px;background:#262427;"></div>
<div class="a" style="left:243.05px;top:578.90px;width:1.2px;height:1.2px;border-radius:50%;background:#858386"></div>
<div class="a" style="left:253.6px;top:570.5px;width:16.9px;height:12.5px;background:#262427;"></div>
<div class="a" style="left:260.80px;top:578.75px;width:1.5px;height:1.5px;border-radius:50%;background:#858386"></div>
<div class="a" style="left:271.5px;top:570.5px;width:16.9px;height:12.5px;background:#262427;"></div>
<div class="a" style="left:278.45px;top:578.50px;width:2px;height:2px;border-radius:50%;background:#858386"></div>
<div class="a" style="left:289.4px;top:570.5px;width:16.9px;height:12.5px;background:#262427;"></div>
<div class="a" style="left:296.10px;top:578.25px;width:2.5px;height:2.5px;border-radius:50%;background:#858386"></div>
<div class="a" style="left:307.3px;top:570.5px;width:16.9px;height:12.5px;background:#262427;"></div>
<div class="a" style="left:313.75px;top:578.00px;width:3px;height:3px;border-radius:50%;background:#858386"></div>
<div class="a" style="left:325.2px;top:570.5px;width:16.9px;height:12.5px;background:#262427;"></div>
<div class="a" style="left:331.40px;top:577.75px;width:3.5px;height:3.5px;border-radius:50%;background:#858386"></div>
<div class="a" style="left:343.1px;top:570.5px;width:16.9px;height:12.5px;background:#262427;"></div>
<div class="a" style="left:349.05px;top:577.50px;width:4px;height:4px;border-radius:50%;background:#858386"></div>
<div class="a" style="left:361.0px;top:570.5px;width:16.9px;height:12.5px;background:#262427;"></div>
<div class="a" style="left:366.45px;top:577.00px;width:5px;height:5px;border-radius:50%;background:#858386"></div>
<div class="a" style="left:378.9px;top:570.5px;width:16.9px;height:12.5px;background:#262427;"></div>
<div class="a" style="left:382.85px;top:575.4px;width:8px;height:8px;border-radius:50%;background:#7f7d80"></div>
<div class="a" style="left:396.8px;top:570.5px;width:16.9px;height:12.5px;background:#262427;"></div>
<div class="a" style="left:400.25px;top:575px;width:9px;height:9px;border-radius:50%;background:#7f7d80"></div>
<div class="a" style="left:414.7px;top:570.5px;width:16.9px;height:12.5px;background:#262427;"></div>
<div class="a" style="left:417.15px;top:574px;width:11px;height:11px;border-radius:50%;background:#7f7d80"></div>
<div class="a" style="left:432.6px;top:570.5px;width:16.9px;height:12.5px;background:#262427;"></div>
<div class="a" style="left:433.25px;top:572.1px;width:14.6px;height:14.6px;border-radius:50%;background:#7f7d80"></div>
<div class="a" style="left:450.5px;top:570.5px;width:16.9px;height:12.5px;background:#262427;"></div>
<div class="a" style="left:451.15px;top:572.1px;width:14.6px;height:14.6px;border-radius:50%;background:#7f7d80"></div>
<div class="a" style="left:468.4px;top:570.5px;width:16.9px;height:12.5px;background:#262427;"></div>
<div class="a" style="left:469.05px;top:572.1px;width:14.6px;height:14.6px;border-radius:50%;background:#7f7d80"></div>
<div class="a" style="left:486.3px;top:570.5px;width:16.9px;height:12.5px;background:#262427;"></div>
<div class="a" style="left:486.95px;top:572.1px;width:14.6px;height:14.6px;border-radius:50%;background:#7f7d80"></div>
<div class="a" style="left:504.2px;top:570.5px;width:16.9px;height:12.5px;background:#262427;"></div>
<div class="a" style="left:504.85px;top:572.1px;width:14.6px;height:14.6px;border-radius:50%;background:#7f7d80"></div>
<div class="a" style="left:522.1px;top:570.5px;width:16.9px;height:12.5px;background:#262427;"></div>
<div class="a" style="left:522.75px;top:572.1px;width:14.6px;height:14.6px;border-radius:50%;background:#7f7d80"></div>
<div class="a" style="left:540.0px;top:570.5px;width:16.9px;height:12.5px;background:#262427;"></div>
<div class="a" style="left:540.65px;top:572.1px;width:14.6px;height:14.6px;border-radius:50%;background:#7f7d80"></div>
<div class="a" style="left:557.9px;top:570.5px;width:16.9px;height:12.5px;background:#262427;"></div>
<div class="a" style="left:558.55px;top:572.1px;width:14.6px;height:14.6px;border-radius:50%;background:#7f7d80"></div>
<div class="a" style="left:575.8px;top:570.5px;width:16.9px;height:12.5px;background:#262427;"></div>
<div class="a" style="left:576.45px;top:572.1px;width:14.6px;height:14.6px;border-radius:50%;background:#7f7d80"></div>
<div class="a" style="left:593.7px;top:570.5px;width:16.9px;height:12.5px;background:#262427;"></div>
<div class="a" style="left:594.35px;top:572.1px;width:14.6px;height:14.6px;border-radius:50%;background:#7f7d80"></div>
<div class="a" style="left:611.6px;top:570.5px;width:16.9px;height:12.5px;background:#262427;"></div>
<div class="a" style="left:612.25px;top:572.1px;width:14.6px;height:14.6px;border-radius:50%;background:#7f7d80"></div>
<div class="a" style="left:629.5px;top:570.5px;width:16.9px;height:12.5px;background:#262427;"></div>
<div class="a" style="left:630.15px;top:572.1px;width:14.6px;height:14.6px;border-radius:50%;background:#7f7d80"></div>
<div class="a" style="left:647px;top:571px;width:2px;height:5px;background:#5a585b;"></div>
<div class="a" style="left:177px;top:141px;width:425px;height:297px;background:#333134;box-shadow:1px 3px 10px rgba(0,0,0,.45)"></div>
<div class="a" style="left:601px;top:141px;width:1px;height:297px;background:#0e0d0f;"></div>
<div class="a" style="left:177px;top:437px;width:425px;height:1px;background:#0e0d0f;"></div>
<div class="a" style="left:177px;top:141px;width:425px;height:13.5px;background:#1f1d20;"></div>
<svg class="a" style="left:180px;top:144px;" width="8" height="8" viewBox="0 0 8 8" fill="none" stroke="#cfcdd0" stroke-width="1"><path d="M1.5 1.5 L6.5 6.5 M6.5 1.5 L1.5 6.5" stroke="#d0ced1" stroke-width="0.9"/></svg>
<div class="t" style="left:370.5px;top:145.45px;font-size:6.8px;color:#bdbbbe;">Preferences</div>
<div class="a" style="left:185px;top:161px;width:70px;height:267px;background:#232124;"></div>
<div class="t" style="left:187px;top:163.42px;font-size:6.5px;color:#d8d6d9;letter-spacing:-0.1px">Tools</div>
<div class="t" style="left:187px;top:175.23px;font-size:6.5px;color:#d8d6d9;letter-spacing:-0.1px">Drawing tool</div>
<div class="t" style="left:187px;top:187.04px;font-size:6.5px;color:#d8d6d9;letter-spacing:-0.1px">Touch</div>
<div class="t" style="left:187px;top:198.85px;font-size:6.5px;color:#d8d6d9;letter-spacing:-0.1px">Touch gestures</div>
<div class="t" style="left:187px;top:210.66px;font-size:6.5px;color:#d8d6d9;letter-spacing:-0.1px">Command</div>
<div class="a" style="left:186px;top:220.75000000000003px;width:68px;height:10.5px;background:#4a5573;"></div>
<div class="t" style="left:187px;top:222.47px;font-size:6.5px;color:#d8d6d9;letter-spacing:-0.1px">Interface</div>
<div class="t" style="left:187px;top:234.28px;font-size:6.5px;color:#d8d6d9;letter-spacing:-0.1px">Performance</div>
<div class="t" style="left:187px;top:246.09px;font-size:6.5px;color:#d8d6d9;letter-spacing:-0.1px">Cursor</div>
<div class="t" style="left:187px;top:257.90px;font-size:6.5px;color:#d8d6d9;letter-spacing:-0.1px">Cursor details</div>
<div class="t" style="left:187px;top:269.71px;font-size:6.5px;color:#d8d6d9;letter-spacing:-0.1px">Layer/Frame</div>
<div class="t" style="left:187px;top:281.52px;font-size:6.5px;color:#d8d6d9;letter-spacing:-0.1px">Animation</div>
<div class="t" style="left:187px;top:293.33px;font-size:6.5px;color:#d8d6d9;letter-spacing:-0.1px">Camera path/Camera</div>
<div class="t" style="left:187px;top:305.14px;font-size:6.5px;color:#d8d6d9;letter-spacing:-0.1px">Ruler/Unit</div>
<div class="t" style="left:187px;top:316.95px;font-size:6.5px;color:#d8d6d9;letter-spacing:-0.1px">Canvas</div>
<div class="t" style="left:187px;top:328.76px;font-size:6.5px;color:#d8d6d9;letter-spacing:-0.1px">File</div>
<div class="t" style="left:187px;top:340.57px;font-size:6.5px;color:#d8d6d9;letter-spacing:-0.1px">File details</div>
<div class="t" style="left:187px;top:352.38px;font-size:6.5px;color:#d8d6d9;letter-spacing:-0.1px">Color conversion</div>
<div class="t" style="left:187px;top:364.19px;font-size:6.5px;color:#d8d6d9;letter-spacing:-0.1px">Edit text</div>
<div class="t" style="left:187px;top:376.00px;font-size:6.5px;color:#d8d6d9;letter-spacing:-0.1px">3D</div>
<div class="t" style="left:187px;top:387.81px;font-size:6.5px;color:#d8d6d9;letter-spacing:-0.1px">Smartphone connection</div>
<div class="t" style="left:187px;top:399.62px;font-size:6.5px;color:#d8d6d9;letter-spacing:-0.1px">Tabmate 2</div>
<div class="a" style="left:261px;top:165px;width:281px;height:34px;border:1px solid #4a484b;border-radius:1px"></div>
<div class="a" style="left:266px;top:163px;width:21px;height:4px;background:#333134;"></div>
<div class="t" style="left:267px;top:162.32px;font-size:6.5px;color:#d8d6d9;letter-spacing:-0.1px">Color</div>
<div class="a" style="left:261px;top:212px;width:281px;height:51px;border:1px solid #4a484b;border-radius:1px"></div>
<div class="a" style="left:266px;top:210px;width:25px;height:4px;background:#333134;"></div>
<div class="t" style="left:267px;top:209.32px;font-size:6.5px;color:#d8d6d9;letter-spacing:-0.1px">Layout</div>
<div class="a" style="left:261px;top:278px;width:281px;height:26px;border:1px solid #4a484b;border-radius:1px"></div>
<div class="a" style="left:266px;top:276px;width:38px;height:4px;background:#333134;"></div>
<div class="t" style="left:267px;top:275.32px;font-size:6.5px;color:#d8d6d9;letter-spacing:-0.1px">Status bar</div>
<div class="a" style="left:261px;top:318px;width:281px;height:34px;border:1px solid #4a484b;border-radius:1px"></div>
<div class="a" style="left:266px;top:316px;width:52px;height:4px;background:#333134;"></div>
<div class="t" style="left:267px;top:315.32px;font-size:6.5px;color:#d8d6d9;letter-spacing:-0.1px">Edge keyboard</div>
<div class="a" style="left:261px;top:364.5px;width:281px;height:26px;border:1px solid #4a484b;border-radius:1px"></div>
<div class="a" style="left:266px;top:362.5px;width:69px;height:4px;background:#333134;"></div>
<div class="t" style="left:267px;top:361.82px;font-size:6.5px;color:#d8d6d9;letter-spacing:-0.1px">Touch view settings</div>
<div class="a" style="left:261px;top:400.5px;width:281px;height:26px;border:1px solid #4a484b;border-radius:1px"></div>
<div class="a" style="left:266px;top:398.5px;width:17px;height:4px;background:#333134;"></div>
<div class="t" style="left:267px;top:397.82px;font-size:6.5px;color:#d8d6d9;letter-spacing:-0.1px">Pen</div>
<div class="t" style="left:315.5px;top:179.22px;font-size:6.5px;color:#d8d6d9;letter-spacing:-0.1px">Interface color:</div>
<div class="a" style="left:360px;top:174px;width:59px;height:16px;background:#434144;border:1px solid #8e8c8f;border-radius:2px"></div>
<div class="t" style="left:371px;top:179.62px;font-size:6.5px;color:#dcdadd;letter-spacing:-0.1px">Dark color</div>
<svg class="a" style="left:409px;top:175px;" width="9" height="14" viewBox="0 0 9 14" fill="none" stroke="#cfcdd0" stroke-width="1"><path d="M2 5 L4.5 2.5 L7 5 M2 9 L4.5 11.5 L7 9" stroke="#a8a6a9" stroke-width="0.8"/></svg>
<div class="t" style="left:433.5px;top:179.12px;font-size:6.5px;color:#d8d6d9;letter-spacing:-0.1px">Adjust density:</div>
<div class="a" style="left:481px;top:177px;width:52px;height:6px;background:#4a484b;border-radius:2px;border:1px solid #3e3c3f"></div>
<div class="a" style="left:480px;top:174px;width:4px;height:12px;background:#5e5c5f;border-radius:1px"></div>
<div class="a" style="left:271px;top:218px;width:10px;height:10px;background:#555356;border-radius:1.5px;border:1px solid #5f5d60"></div>
<svg class="a" style="left:271px;top:218px;" width="10" height="10" viewBox="0 0 10 10" fill="none" stroke="#cfcdd0" stroke-width="1"><path d="M2 5.2 L4.2 7.6 L8.3 1.8" stroke="#f2f0f3" stroke-width="1.3"/></svg>
<div class="t" style="left:283px;top:220.32px;font-size:6.5px;color:#d8d6d9;letter-spacing:-0.1px">Switch to tablet interface</div>
<div class="a" style="left:282px;top:236.5px;width:17px;height:17px;background:#c8c6c9;border-radius:2.5px"></div>
<div class="a" style="left:289.6px;top:243.2px;width:2.1px;height:8px;background:#1e1c1f;"></div>
<div class="a" style="left:289.3px;top:238.8px;width:2.6px;height:2.6px;background:#1e1c1f;border-radius:50%"></div>
<div class="t" style="left:304.7px;top:241.62px;font-size:6.5px;color:#d8d6d9;letter-spacing:-0.1px">When changing the settings, the palette layout will be reset to its default.</div>
<div class="a" style="left:271px;top:286px;width:10px;height:10px;background:#555356;border-radius:1.5px;border:1px solid #5f5d60"></div>
<svg class="a" style="left:271px;top:286px;" width="10" height="10" viewBox="0 0 10 10" fill="none" stroke="#cfcdd0" stroke-width="1"><path d="M2 5.2 L4.2 7.6 L8.3 1.8" stroke="#f2f0f3" stroke-width="1.3"/></svg>
<div class="t" style="left:283px;top:287.92px;font-size:6.5px;color:#d8d6d9;letter-spacing:-0.1px">Show status bar</div>
<div class="t" style="left:342px;top:331.82px;font-size:6.5px;color:#d8d6d9;letter-spacing:-0.1px">View:</div>
<div class="a" style="left:360px;top:327.5px;width:59px;height:14.5px;background:#4a484b;border:1px solid #555356;border-radius:2px"></div>
<div class="t" style="left:377px;top:332.42px;font-size:6.5px;color:#dcdadd;letter-spacing:-0.1px">Swipe</div>
<svg class="a" style="left:410px;top:328px;" width="9" height="14" viewBox="0 0 9 14" fill="none" stroke="#cfcdd0" stroke-width="1"><path d="M2 5 L4.5 2.5 L7 5 M2 9 L4.5 11.5 L7 9" stroke="#a8a6a9" stroke-width="0.8"/></svg>
<div class="a" style="left:271px;top:373px;width:10px;height:10px;background:#555356;border-radius:1.5px;border:1px solid #5f5d60"></div>
<svg class="a" style="left:271px;top:373px;" width="10" height="10" viewBox="0 0 10 10" fill="none" stroke="#cfcdd0" stroke-width="1"><path d="M2 5.2 L4.2 7.6 L8.3 1.8" stroke="#f2f0f3" stroke-width="1.3"/></svg>
<div class="t" style="left:283px;top:375.12px;font-size:6.5px;color:#d8d6d9;letter-spacing:-0.1px">Show explanation when tapping icon</div>
<div class="a" style="left:271px;top:409.5px;width:10px;height:10px;background:#555356;border-radius:1.5px;border:1px solid #5f5d60"></div>
<svg class="a" style="left:271px;top:409.5px;" width="10" height="10" viewBox="0 0 10 10" fill="none" stroke="#cfcdd0" stroke-width="1"><path d="M2 5.2 L4.2 7.6 L8.3 1.8" stroke="#f2f0f3" stroke-width="1.3"/></svg>
<div class="t" style="left:283px;top:411.42px;font-size:6.5px;color:#d8d6d9;letter-spacing:-0.1px">Use stylus hover on applicable devices</div>
<div class="a" style="left:547.5px;top:160.5px;width:47.5px;height:15px;border-radius:2px;background:#586c9c;background-image:radial-gradient(circle,#4a92ee 0.45px,transparent 0.8px);background-size:3.1px 3.6px;background-position:1px 1px;border:1px solid #5f73a3"></div>
<div class="t" style="left:566px;top:165.62px;font-size:6.5px;color:#e8e8f0;">OK</div>
<div class="a" style="left:547.5px;top:178px;width:47.5px;height:15px;background:#3c3a3d;border:1px solid #4e4c4f;border-radius:2px"></div>
<div class="t" style="left:561px;top:183.12px;font-size:6.5px;color:#dcdadd;letter-spacing:-0.1px">Cancel</div>
</body></html>
